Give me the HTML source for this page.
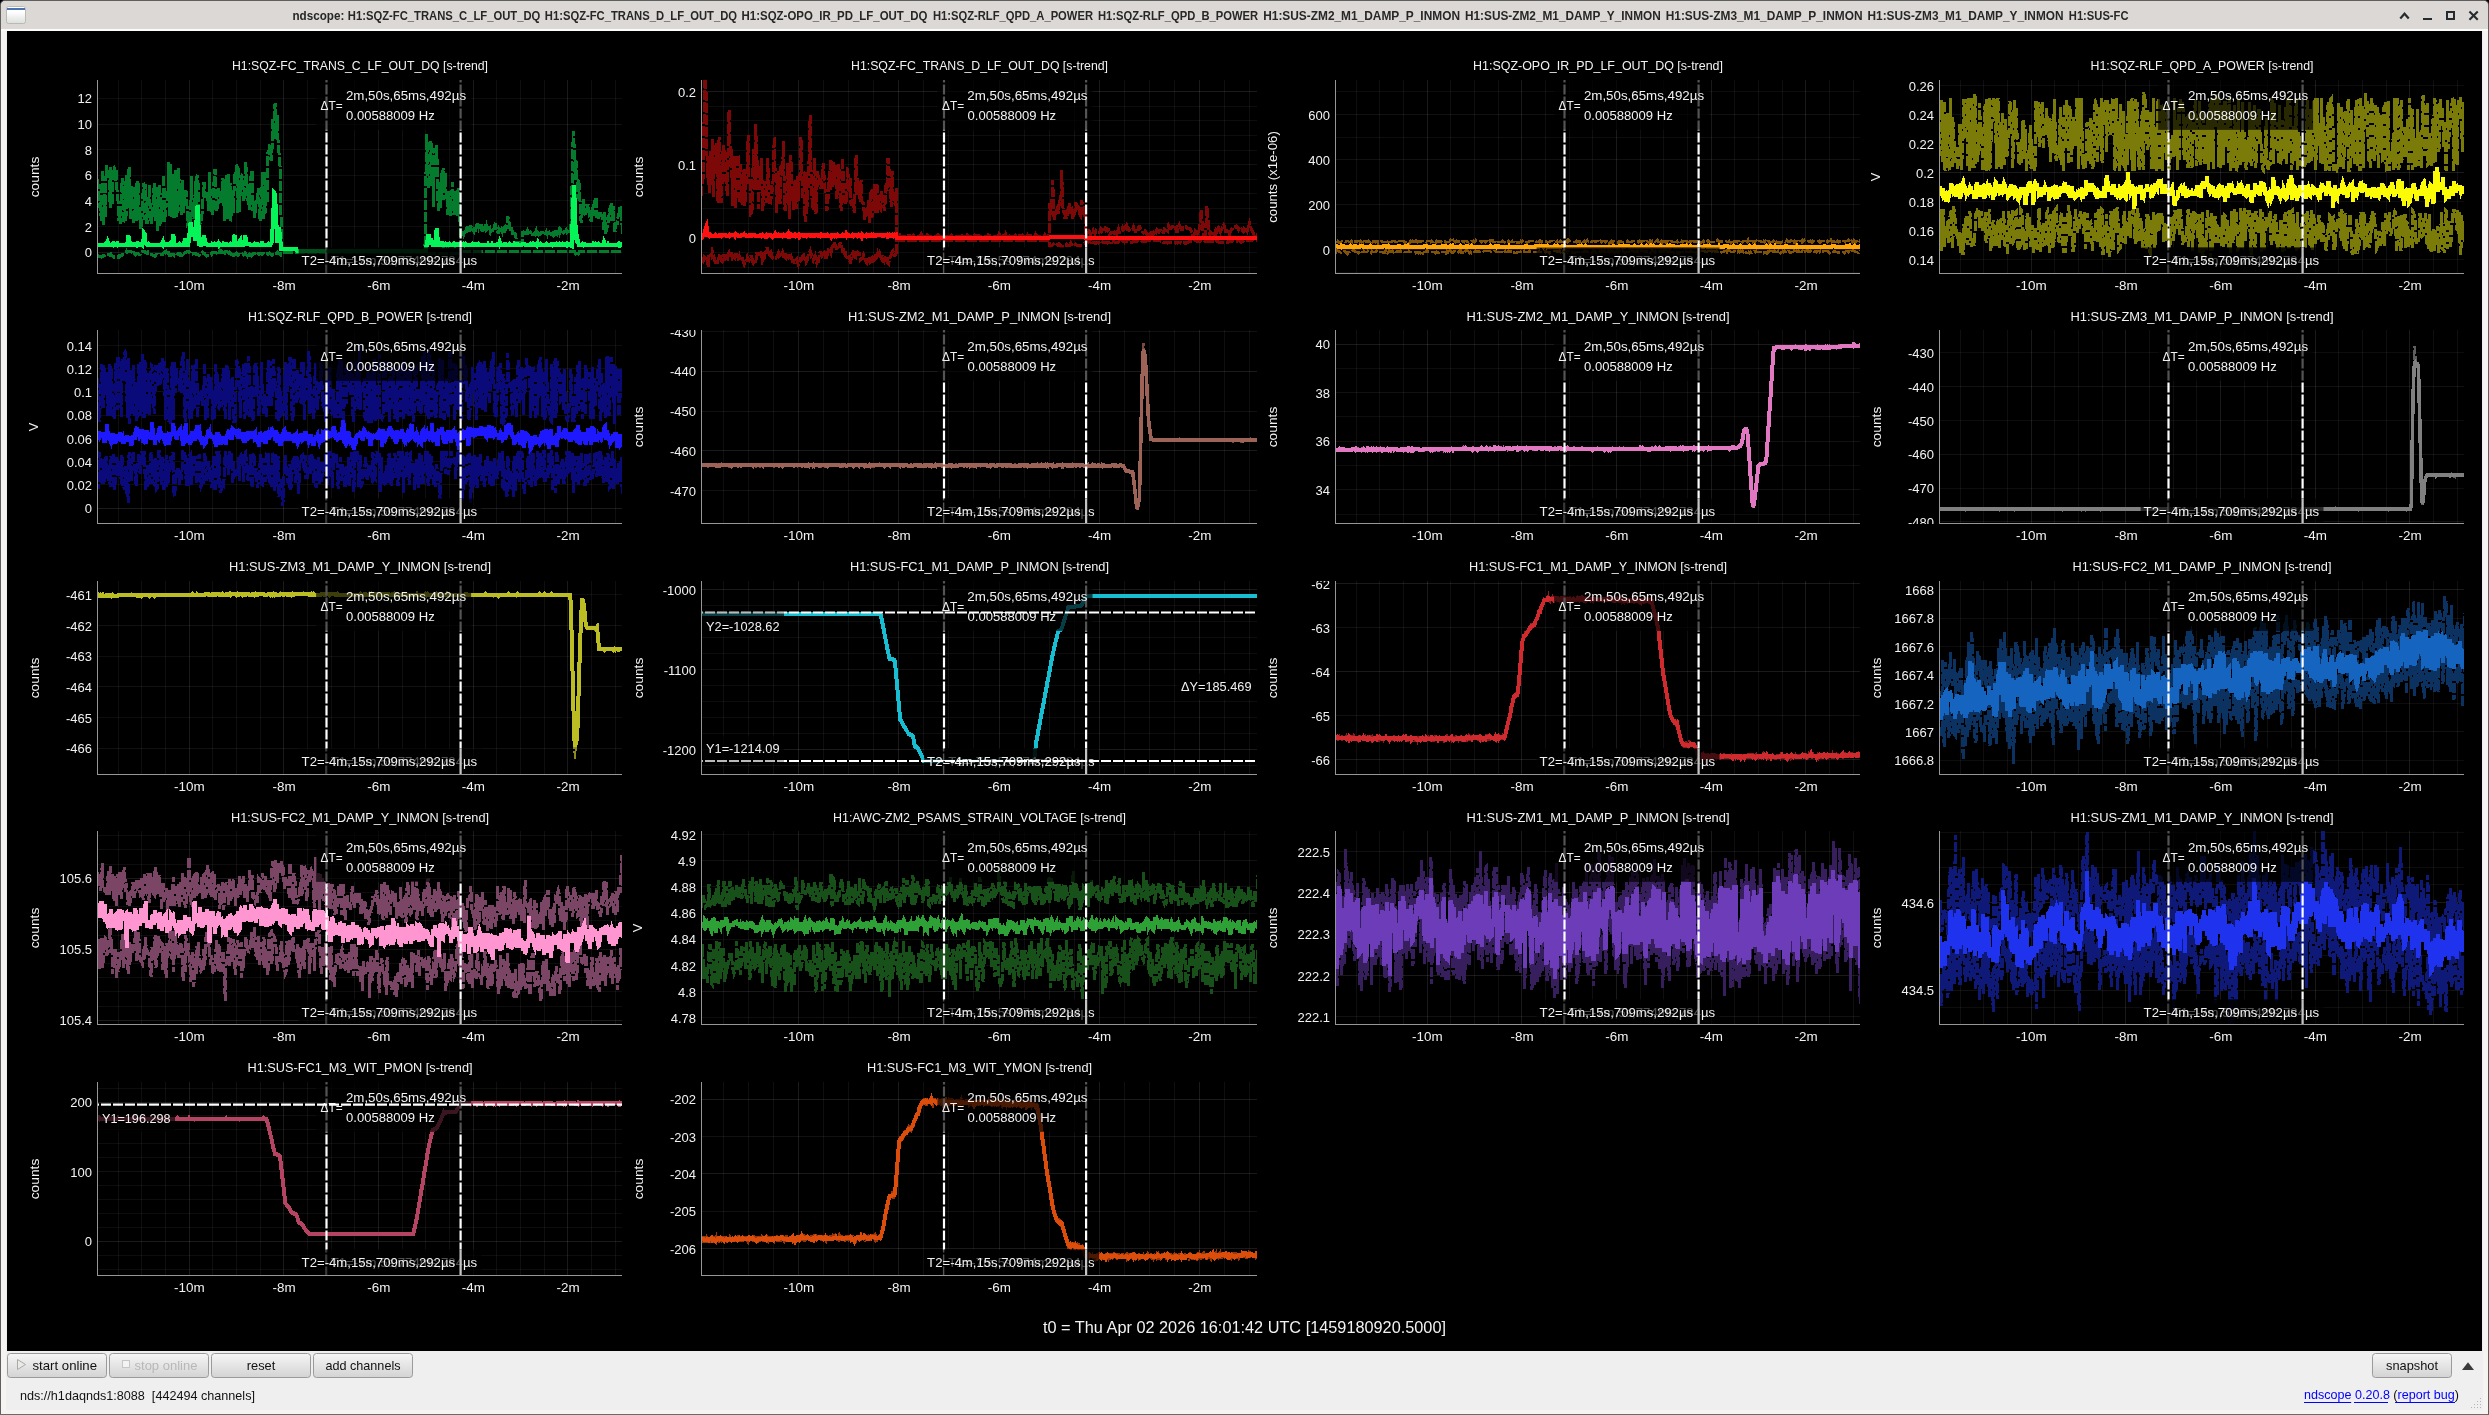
<!DOCTYPE html>
<html><head><meta charset="utf-8"><title>ndscope</title>
<style>html,body{margin:0;padding:0;background:#000;}body{width:2489px;height:1415px;overflow:hidden;font-family:"Liberation Sans", sans-serif;}svg{display:block;will-change:transform;}</style>
</head><body>
<svg width="2489" height="1415" viewBox="0 0 2489 1415" font-family='"Liberation Sans", sans-serif'>
<defs>
<linearGradient id="btn" x1="0" y1="0" x2="0" y2="1"><stop offset="0" stop-color="#f6f6f6"/><stop offset="1" stop-color="#d3d3d3"/></linearGradient>
<linearGradient id="ico" x1="0" y1="0" x2="0" y2="1"><stop offset="0.3" stop-color="#ffffff"/><stop offset="1" stop-color="#dcdfdb"/></linearGradient>
<clipPath id="c00"><rect x="98" y="80" width="524" height="193"/></clipPath>
<clipPath id="ya00"><rect x="7" y="80" width="90" height="194"/></clipPath>
<clipPath id="c10"><rect x="702" y="80" width="555" height="193"/></clipPath>
<clipPath id="ya10"><rect x="611" y="80" width="90" height="194"/></clipPath>
<clipPath id="c20"><rect x="1336" y="80" width="524" height="193"/></clipPath>
<clipPath id="ya20"><rect x="1245" y="80" width="90" height="194"/></clipPath>
<clipPath id="c30"><rect x="1940" y="80" width="524" height="193"/></clipPath>
<clipPath id="ya30"><rect x="1849" y="80" width="90" height="194"/></clipPath>
<clipPath id="c01"><rect x="98" y="330" width="524" height="193"/></clipPath>
<clipPath id="ya01"><rect x="7" y="330" width="90" height="194"/></clipPath>
<clipPath id="c11"><rect x="702" y="330" width="555" height="193"/></clipPath>
<clipPath id="ya11"><rect x="611" y="330" width="90" height="194"/></clipPath>
<clipPath id="c21"><rect x="1336" y="330" width="524" height="193"/></clipPath>
<clipPath id="ya21"><rect x="1245" y="330" width="90" height="194"/></clipPath>
<clipPath id="c31"><rect x="1940" y="330" width="524" height="193"/></clipPath>
<clipPath id="ya31"><rect x="1849" y="330" width="90" height="194"/></clipPath>
<clipPath id="c02"><rect x="98" y="581" width="524" height="193"/></clipPath>
<clipPath id="ya02"><rect x="7" y="581" width="90" height="194"/></clipPath>
<clipPath id="c12"><rect x="702" y="581" width="555" height="193"/></clipPath>
<clipPath id="ya12"><rect x="611" y="581" width="90" height="194"/></clipPath>
<clipPath id="c22"><rect x="1336" y="581" width="524" height="193"/></clipPath>
<clipPath id="ya22"><rect x="1245" y="581" width="90" height="194"/></clipPath>
<clipPath id="c32"><rect x="1940" y="581" width="524" height="193"/></clipPath>
<clipPath id="ya32"><rect x="1849" y="581" width="90" height="194"/></clipPath>
<clipPath id="c03"><rect x="98" y="831" width="524" height="193"/></clipPath>
<clipPath id="ya03"><rect x="7" y="831" width="90" height="194"/></clipPath>
<clipPath id="c13"><rect x="702" y="831" width="555" height="193"/></clipPath>
<clipPath id="ya13"><rect x="611" y="831" width="90" height="194"/></clipPath>
<clipPath id="c23"><rect x="1336" y="831" width="524" height="193"/></clipPath>
<clipPath id="ya23"><rect x="1245" y="831" width="90" height="194"/></clipPath>
<clipPath id="c33"><rect x="1940" y="831" width="524" height="193"/></clipPath>
<clipPath id="ya33"><rect x="1849" y="831" width="90" height="194"/></clipPath>
<clipPath id="c04"><rect x="98" y="1082" width="524" height="193"/></clipPath>
<clipPath id="ya04"><rect x="7" y="1082" width="90" height="194"/></clipPath>
<clipPath id="c14"><rect x="702" y="1082" width="555" height="193"/></clipPath>
<clipPath id="ya14"><rect x="611" y="1082" width="90" height="194"/></clipPath>
</defs>
<rect x="0" y="0" width="2489" height="1415" fill="#000"/>
<rect x="0" y="0" width="2489" height="1421" rx="5" ry="5" fill="#5f5f5d"/>
<rect x="1" y="1" width="2487" height="1421" rx="4.5" ry="4.5" fill="#f5f4f3"/>
<rect x="0" y="1414" width="2489" height="1" fill="#6a6a68"/>
<path d="M1 29 V6 Q1 1 6 1 H2483 Q2488 1 2488 6 V29 Z" fill="#dbd8d5"/>
<rect x="1" y="29" width="2487" height="2" fill="#fbfbfa"/>
<rect x="6" y="31" width="2477" height="1379" fill="#efefef"/>
<rect x="7" y="31" width="2475" height="1320" fill="#000"/>
<rect x="6.5" y="6.5" width="19" height="17" rx="2" fill="url(#ico)" stroke="#b9b9b7"/>
<rect x="7" y="8" width="18" height="2" fill="#4a74b0"/>
<text x="292.5" y="20.3" font-size="12" font-weight="bold" fill="#272727" textLength="51.8" lengthAdjust="spacingAndGlyphs">ndscope:</text>
<text x="347.8" y="20.3" font-size="12" font-weight="bold" fill="#272727" textLength="192.5" lengthAdjust="spacingAndGlyphs">H1:SQZ-FC_TRANS_C_LF_OUT_DQ</text>
<text x="544.8" y="20.3" font-size="12" font-weight="bold" fill="#272727" textLength="192.3" lengthAdjust="spacingAndGlyphs">H1:SQZ-FC_TRANS_D_LF_OUT_DQ</text>
<text x="741.6" y="20.3" font-size="12" font-weight="bold" fill="#272727" textLength="185.8" lengthAdjust="spacingAndGlyphs">H1:SQZ-OPO_IR_PD_LF_OUT_DQ</text>
<text x="932.9" y="20.3" font-size="12" font-weight="bold" fill="#272727" textLength="160.1" lengthAdjust="spacingAndGlyphs">H1:SQZ-RLF_QPD_A_POWER</text>
<text x="1098" y="20.3" font-size="12" font-weight="bold" fill="#272727" textLength="160.2" lengthAdjust="spacingAndGlyphs">H1:SQZ-RLF_QPD_B_POWER</text>
<text x="1263.2" y="20.3" font-size="12" font-weight="bold" fill="#272727" textLength="196.8" lengthAdjust="spacingAndGlyphs">H1:SUS-ZM2_M1_DAMP_P_INMON</text>
<text x="1465" y="20.3" font-size="12" font-weight="bold" fill="#272727" textLength="195.7" lengthAdjust="spacingAndGlyphs">H1:SUS-ZM2_M1_DAMP_Y_INMON</text>
<text x="1665.7" y="20.3" font-size="12" font-weight="bold" fill="#272727" textLength="196.8" lengthAdjust="spacingAndGlyphs">H1:SUS-ZM3_M1_DAMP_P_INMON</text>
<text x="1867.5" y="20.3" font-size="12" font-weight="bold" fill="#272727" textLength="196" lengthAdjust="spacingAndGlyphs">H1:SUS-ZM3_M1_DAMP_Y_INMON</text>
<text x="2068.8" y="20.3" font-size="12" font-weight="bold" fill="#272727" textLength="59.7" lengthAdjust="spacingAndGlyphs">H1:SUS-FC</text>
<path d="M2401 17.7 L2404.5 13.7 L2408 17.7" fill="none" stroke="#262b2f" stroke-width="2.2" stroke-linecap="square"/>
<rect x="2423" y="18" width="9" height="2" fill="#262b2f"/>
<rect x="2447" y="12" width="7" height="7" fill="none" stroke="#262b2f" stroke-width="2"/>
<path d="M2470.2 12.2 L2477 19 M2477 12.2 L2470.2 19" fill="none" stroke="#262b2f" stroke-width="2.1" stroke-linecap="square"/>
<g clip-path="url(#c00)">
<rect x="118" y="80" width="1" height="193" fill="#fff" fill-opacity="0.060000000000000005"/>
<rect x="141" y="80" width="1" height="193" fill="#fff" fill-opacity="0.060000000000000005"/>
<rect x="165" y="80" width="1" height="193" fill="#fff" fill-opacity="0.060000000000000005"/>
<rect x="189" y="80" width="1" height="193" fill="#fff" fill-opacity="0.1"/>
<rect x="212" y="80" width="1" height="193" fill="#fff" fill-opacity="0.060000000000000005"/>
<rect x="236" y="80" width="1" height="193" fill="#fff" fill-opacity="0.060000000000000005"/>
<rect x="260" y="80" width="1" height="193" fill="#fff" fill-opacity="0.060000000000000005"/>
<rect x="283" y="80" width="1" height="193" fill="#fff" fill-opacity="0.1"/>
<rect x="307" y="80" width="1" height="193" fill="#fff" fill-opacity="0.060000000000000005"/>
<rect x="331" y="80" width="1" height="193" fill="#fff" fill-opacity="0.060000000000000005"/>
<rect x="354" y="80" width="1" height="193" fill="#fff" fill-opacity="0.060000000000000005"/>
<rect x="378" y="80" width="1" height="193" fill="#fff" fill-opacity="0.1"/>
<rect x="402" y="80" width="1" height="193" fill="#fff" fill-opacity="0.060000000000000005"/>
<rect x="425" y="80" width="1" height="193" fill="#fff" fill-opacity="0.060000000000000005"/>
<rect x="449" y="80" width="1" height="193" fill="#fff" fill-opacity="0.060000000000000005"/>
<rect x="473" y="80" width="1" height="193" fill="#fff" fill-opacity="0.1"/>
<rect x="496" y="80" width="1" height="193" fill="#fff" fill-opacity="0.060000000000000005"/>
<rect x="520" y="80" width="1" height="193" fill="#fff" fill-opacity="0.060000000000000005"/>
<rect x="544" y="80" width="1" height="193" fill="#fff" fill-opacity="0.060000000000000005"/>
<rect x="567" y="80" width="1" height="193" fill="#fff" fill-opacity="0.1"/>
<rect x="591" y="80" width="1" height="193" fill="#fff" fill-opacity="0.060000000000000005"/>
<rect x="615" y="80" width="1" height="193" fill="#fff" fill-opacity="0.060000000000000005"/>
<rect x="98" y="252" width="524" height="1" fill="#fff" fill-opacity="0.1"/>
<rect x="98" y="124" width="524" height="1" fill="#fff" fill-opacity="0.065"/>
<rect x="98" y="226" width="524" height="1" fill="#fff" fill-opacity="0.05"/>
<rect x="98" y="200" width="524" height="1" fill="#fff" fill-opacity="0.05"/>
<rect x="98" y="175" width="524" height="1" fill="#fff" fill-opacity="0.05"/>
<rect x="98" y="149" width="524" height="1" fill="#fff" fill-opacity="0.05"/>
<rect x="98" y="98" width="524" height="1" fill="#fff" fill-opacity="0.05"/>
<g shape-rendering="crispEdges" fill="none" stroke-linejoin="miter">
<path transform="translate(97.5 0) scale(0.78900 1)" vector-effect="non-scaling-stroke" d="M0 255l1 1h3l1 1 1-1h1l1-1h2l1-1h3l1 1h1l1-1 1 1 1 1h1l1 1h5l1-1 1 1 1-1 1-1h1l1-1h3l1-1 1-2 1 1 1-1h3l1 1h1l1 2 1-1 1 1 1 1 1-1 1-1h1l1 1h2l1-1h1l1-2h2l1 1h2l1 1 1-1 1 1h1l1 1h2l1 1h2l1 1 1-1 1-1h1l1 1h1l1-1h4l1-1 1-1 1 1 1-1 1 2h1l1-1 1 2h2l1-1h2l1 1 1 1h2l1-1 1-2h1l1 2 1-1 1 1h1l1-2 1 1 1-1 1-1h2l1-1h1l1 1h1l1 1 1 1h1l1-1h3l1 1h2l1 1h1l1-1 1-1h1l1-1 1 1h1l1 1 1 1 1 1 1-1h5l1-2 1-1h4l1 1 1 1 1 1 1-2 1-2 1 1 1-1 1 1h2l1 1 1-2h2l1 1 1 1 1-1 1 1 1 1h1l1-1 1 2h1l1-1h1l1-1 1 1 1 1h1l1-1h1l1 1h1l1-1 1 1 1-1 1-1 1 1 1 1 1 1 1-2 1 1 1-1 1 1 1 1 1-1 1-1 1-1h2l1-1 1 1h1l1 1h1l1-1h1l1 1h1l1-1h1l1 1 1-1h2l1 1h1l1-1 1 1h1l1 1h1l1-1h1l1-1h2l1-1 1 1h1l1 1 1 1 1-3h182l1 1h43l1-2h144l1 1 1 2 1 2h1l1-1 1-2 1-2h55" stroke="#057b2d" stroke-width="3" stroke-dasharray="10 2"/>
<path transform="translate(97.5 0) scale(0.78900 1)" vector-effect="non-scaling-stroke" d="M0 179l1 8 1 18 1-1 1 7 1 10 1-51 1 15 1 40 1-31 1 23 1-52 1 8 1 5 1-8 1 3 1 35 1-41 1 7 1 31 1-36 1-1 1 5 1 8 1-11 1 27 1 4 1 20 1-5 1 8 1-19 1-21 1-6 1 45 1-4 1-38 1 41 1-47 1 14 1 19 1-41 1 33 1 19 1-33 1 17 1-17 1 37 1-6 1-13 1-21 1 38 1-40 1 5 1 31 1-1 1 13 1-16 1 3 1-33 1 2 1 35 1-36 1 38h1l1-21h1l1-16 1 32 1 7 1-10 1 2 1-21 1-12 1 38 1-16 1-19 1 45 1-43 1 38 1-42 1 40 1-23 1 14 1 7 1-47 1 47 1-9 1-8h1l1 2 1-45 1 54 1-11 1-41 1 53 1-43 1 35 1 9 1-7 1-41 1 47 1-4 1-9 1-36 1 37 1-18 1 28 1-11 1-24 1 33 1-10 1-13 1 7 1-6 1 33 1-1 1-3 1 4 1-4 1-44 1 41 1-10 1 12 1-4 1-34 1 41 1-45 1-2 1 21 1 28 1-1 1-1 1-2 1-13 1-11 1-14 1 13 1-1h1l1 7 1-10 1 20 1-39 1 28 1 12 1-7 1 10 1-8 1-37h1l1 22 1 19 1-3 1-6 1-14 1 2 1 5 1 8 1-9 1-16 1 19 1 24 1-42 1 34 1-38 1 44 1-45 1 41 1-32 1 39 1-29 1-3 1 23 1-21 1-18 1 8 1-18 1 3 1 46 1-46 1 45 1-24 1-6 1-6 1 1 1 24 1-3 1-11 1-25 1 23 1 2 1 18 1-21 1 26 1-32 1-3 1-5 1 41 1-10 1 17 1-6 1-9 1 1 1-8 1-8 1 20 1 13 1-20 1-2 1-27 1 47 1-3 1-44 1 41 1-20 1 10 1-50h1l1-8 1-1 1 17 1-6 1-36 1 20 1-5 1-31 1 9 1 27 1-24 1 31 1 7 1 9 1 13 1 73h19l1 2h162l1-56 1-60 1 13 1 41 1-2 1-3 1-42 1 2 1 43 1-19 1 40 1-59 1 15 1-2 1-16 1 45 1 21 1-3 1-26 1 26 1-35 1 19 1-24 1 32 1-18 1-9 1 26 1-2 1 18 1-13 1-11 1 2 1 23 1-10 1-24 1 17 1 16 1-16 1-8 1 12 1 13 1-28 1 5 1 17 1 27 1-2 1-1 1-1 1 2 1-3h1l1-2 1 3 1-6h1l1 1 1 4 1-7 1 4h2l1 2 1-4 1 5 1-6 1-2h1l1 3 1-3 1 4 1-4 1 5 1-1 1 2 1-1 1-2 1 2 1-3 1 3 1-1 1 1 1-1 1 4 1-2h2l1-2 1-2 1 4 1-3 1 3 1 1 1 3 1-4 1 2 1 1 1-3 1 2 1-3 1-1 1 5 1-4 1-1 1-6 1-6 1 3 1 6 1 5 1 2 1-5 1 8 1-2h2l1 2 1 7h7l1-11 1 2 1-2h1l1 2h1l1-2 1 2 1-1h2l1-1 1 3h2l1-1 1 1 1-3 1 3 1-1 1 2 1-1h1l1-1 1-1h3l1-1 1 4 1-3 1 2 1-3 1 1 1 1h1l1 1h1l1 1 1-3 1-2 1 4 1-1 1 1 1-4 1 2 1-2 1 3 1-2 1 3h1l1-1 1-1 1-1h1l1-1 1 2 1-1h1l1-2 1 1 1-1 1-29 1-34 1-35 1 14 1 35 1-20 1 2 1 23 1 14 1-19 1 10 1 20 1 13 1-7 1-7 1-10 1 16 1-2 1 2 1-11 1 3 1-3 1 6 1 9h1l1 3 1-15 1 9 1-11 1-1 1-7 1 2 1 17h1l1 4 1-7h1l1 5 1-1 1-3 1 12 1 4 1-18 1 22 1-5 1-2 1-3 1-6 1-10 1 7 1-12 1 18 1-9 1-6 1 23 1 3 1-9h2l1-8 1-1 1-7 1 9 1-10 1 25 1-1" stroke="#057b2d" stroke-width="3" stroke-dasharray="10 2"/>
<path transform="translate(97.5 0) scale(0.78900 1)" vector-effect="non-scaling-stroke" d="M0 244l1 1h8l1-1 1 1h1l1-3 1 2 1 1h3l1-1 1 1 1-1 1 1h1l1-1 1 1 1-1 1 1h10l1-3 1-7 1 3 1 7h1l1-1 1 1h2l1-1h1l1 1 1-1 1 1 1-1 1 1h2l1-1 1 1 1-3 1-9 1 1 1 9 1 1 1 1h1l1-1 1 1h14l1-1h1l1-2 1 3 1-1 1 1h1l1-1h1l1 1h1l1-1 1 1h1l1-4 1-7 1 6 1 5h5l1-1 1 1h4l1-3 1-4 1 5 1 2h2l1-6 1-10 1-7 1 10 1 5 1-7 1-3 1 7 1 7 1-12 1-19 1-5 1 20 1 19h1l1 1h1l1-1 1-5 1-4 1 5 1 4h1l1 1h5l1-1 1 1h1l1-1 1 1h2l1-1 1-1 1 2 1-1 1 1h2l1-1 1 1h1l1-1h2l1 1h3l1-1 1 1h2l1-8 1-2 1 8 1 2h3l1-4 1-1 1 5h3l1-2 1-8 1 3 1 6h4l1 1h4l1-1 1 1h1l1-1h1l1 1h3l1-2h1l1 2h6l1-1 1 1h1l1-1 1-2 1-16 1-17 1-16 1 1 1 16 1 17 1 16 1-8 1-8 1 7 1 8 1 7h19l1 2h163l1-6 1-3 1-6h1l1 6 1-1 1-3 1 6 1 1h2l1-1 1-10 1-6 1 10 1 7h3l1-2h1l1 2 1-1 1 1 1-1 1 1 1-1h1l1 1 1-1 1 1h3l1-1 1 1 1-1 1 1 1-1h1l1 1h2l1-1 1 1h2l1-1 1 1 1-1 1 1h7l1-1 1 1h1l1-1h1l1 1h2l1-1 1 1h10l1-1 1 1h3l1-1 1 1h5l1-1h1l1 1 1-3 1 2 1 1h3l1-1h1l1 1h3l1-1 1 1h4l1-1 1 1h1l1-1h1l1 1h5l1-1h2l1 1h6l1-1 1 1h1l1-1 1 1h1l1-1h1l1 1 1-2 1 2h2l1-1 1 1h5l1-1 1 1h4l1-1h1l1 1 1-1h1l1 1h1l1-1 1 1h2l1-1 1 1h1l1-1 1 1h1l1-1h1l1 1 1-1 1 1 1-1h1l1 1 1-1 1 1 1-20 1-21 1-19 1 22 1 21 1 11 1-1 1 4 1 3h4l1-1 1 1 1-1h1l1 1h8l1-1 1 1h1l1-1 1 1h2l1-1 1 1h5l1-3 1 2 1 1h2l1-1 1 1h11l1-1 1 1 1-1 1 1 1-1h2" stroke="#05f558" stroke-width="4"/>
</g>
<line x1="326.5" y1="80" x2="326.5" y2="273" stroke="#fff" stroke-width="2.2" stroke-dasharray="10 2" stroke-dashoffset="7.4"/>
<line x1="460.6" y1="80" x2="460.6" y2="273" stroke="#fff" stroke-width="2.2" stroke-dasharray="10 2" stroke-dashoffset="7.4"/>
<rect x="326.5" y="247.5" width="155" height="26" fill="rgba(0,0,0,0.67)"/>
<text x="330.7" y="265.3" font-size="13" fill="#f2f2f2" text-anchor="start" textLength="146.5" lengthAdjust="spacingAndGlyphs">T1=-7m,5s,774ms,784µs</text>
<rect x="298.6" y="247.5" width="164.5" height="26" fill="rgba(0,0,0,0.67)"/>
<text x="301.6" y="265.3" font-size="13" fill="#f2f2f2" text-anchor="start" textLength="153.5" lengthAdjust="spacingAndGlyphs">T2=-4m,15s,709ms,292µs</text>
<rect x="459.5" y="247.5" width="2.2" height="26" fill="#c4c4c4"/>
<rect x="316.1" y="80" width="155" height="49.9" fill="rgba(0,0,0,0.67)"/>
<text x="320.6" y="109.7" font-size="13" fill="#f2f2f2" text-anchor="start" textLength="22.1" lengthAdjust="spacingAndGlyphs">ΔT=</text>
<text x="345.9" y="99.7" font-size="13" fill="#f2f2f2" text-anchor="start" textLength="120.2" lengthAdjust="spacingAndGlyphs">2m,50s,65ms,492µs</text>
<text x="346.1" y="119.8" font-size="13" fill="#f2f2f2" text-anchor="start" textLength="88.6" lengthAdjust="spacingAndGlyphs">0.00588009 Hz</text>
</g>
<rect x="97" y="80" width="1" height="194" fill="#969696"/>
<rect x="97" y="273" width="525" height="1" fill="#969696"/>
<text x="189.4" y="289.5" font-size="13" fill="#f2f2f2" text-anchor="middle" textLength="30.6" lengthAdjust="spacingAndGlyphs">-10m</text>
<text x="284.1" y="289.5" font-size="13" fill="#f2f2f2" text-anchor="middle" textLength="23.1" lengthAdjust="spacingAndGlyphs">-8m</text>
<text x="378.8" y="289.5" font-size="13" fill="#f2f2f2" text-anchor="middle" textLength="23.1" lengthAdjust="spacingAndGlyphs">-6m</text>
<text x="473.4" y="289.5" font-size="13" fill="#f2f2f2" text-anchor="middle" textLength="23.1" lengthAdjust="spacingAndGlyphs">-4m</text>
<text x="568.1" y="289.5" font-size="13" fill="#f2f2f2" text-anchor="middle" textLength="23.1" lengthAdjust="spacingAndGlyphs">-2m</text>
<g clip-path="url(#ya00)">
<text x="92" y="257.4" font-size="13" fill="#f2f2f2" text-anchor="end">0</text>
<text x="92" y="231.7" font-size="13" fill="#f2f2f2" text-anchor="end">2</text>
<text x="92" y="206.1" font-size="13" fill="#f2f2f2" text-anchor="end">4</text>
<text x="92" y="180.4" font-size="13" fill="#f2f2f2" text-anchor="end">6</text>
<text x="92" y="154.8" font-size="13" fill="#f2f2f2" text-anchor="end">8</text>
<text x="92" y="129.1" font-size="13" fill="#f2f2f2" text-anchor="end">10</text>
<text x="92" y="103.4" font-size="13" fill="#f2f2f2" text-anchor="end">12</text>
<text x="92" y="77.8" font-size="13" fill="#f2f2f2" text-anchor="end">14</text>
</g>
<text x="360" y="69.8" font-size="12" fill="#f2f2f2" text-anchor="middle" textLength="256" lengthAdjust="spacingAndGlyphs">H1:SQZ-FC_TRANS_C_LF_OUT_DQ [s-trend]</text>
<text transform="translate(39.4 177) rotate(-90)" font-size="13" fill="#f2f2f2" text-anchor="middle" textLength="40.6" lengthAdjust="spacingAndGlyphs">counts</text>
<g clip-path="url(#c10)">
<rect x="723" y="80" width="1" height="193" fill="#fff" fill-opacity="0.060000000000000005"/>
<rect x="748" y="80" width="1" height="193" fill="#fff" fill-opacity="0.060000000000000005"/>
<rect x="773" y="80" width="1" height="193" fill="#fff" fill-opacity="0.060000000000000005"/>
<rect x="798" y="80" width="1" height="193" fill="#fff" fill-opacity="0.1"/>
<rect x="823" y="80" width="1" height="193" fill="#fff" fill-opacity="0.060000000000000005"/>
<rect x="848" y="80" width="1" height="193" fill="#fff" fill-opacity="0.060000000000000005"/>
<rect x="873" y="80" width="1" height="193" fill="#fff" fill-opacity="0.060000000000000005"/>
<rect x="898" y="80" width="1" height="193" fill="#fff" fill-opacity="0.1"/>
<rect x="923" y="80" width="1" height="193" fill="#fff" fill-opacity="0.060000000000000005"/>
<rect x="948" y="80" width="1" height="193" fill="#fff" fill-opacity="0.060000000000000005"/>
<rect x="973" y="80" width="1" height="193" fill="#fff" fill-opacity="0.060000000000000005"/>
<rect x="999" y="80" width="1" height="193" fill="#fff" fill-opacity="0.1"/>
<rect x="1024" y="80" width="1" height="193" fill="#fff" fill-opacity="0.060000000000000005"/>
<rect x="1049" y="80" width="1" height="193" fill="#fff" fill-opacity="0.060000000000000005"/>
<rect x="1074" y="80" width="1" height="193" fill="#fff" fill-opacity="0.060000000000000005"/>
<rect x="1099" y="80" width="1" height="193" fill="#fff" fill-opacity="0.1"/>
<rect x="1124" y="80" width="1" height="193" fill="#fff" fill-opacity="0.060000000000000005"/>
<rect x="1149" y="80" width="1" height="193" fill="#fff" fill-opacity="0.060000000000000005"/>
<rect x="1174" y="80" width="1" height="193" fill="#fff" fill-opacity="0.060000000000000005"/>
<rect x="1199" y="80" width="1" height="193" fill="#fff" fill-opacity="0.1"/>
<rect x="1224" y="80" width="1" height="193" fill="#fff" fill-opacity="0.060000000000000005"/>
<rect x="1249" y="80" width="1" height="193" fill="#fff" fill-opacity="0.060000000000000005"/>
<rect x="702" y="237" width="555" height="1" fill="#fff" fill-opacity="0.1"/>
<rect x="702" y="91" width="555" height="1" fill="#fff" fill-opacity="0.1"/>
<rect x="702" y="164" width="555" height="1" fill="#fff" fill-opacity="0.065"/>
<rect x="702" y="267" width="555" height="1" fill="#fff" fill-opacity="0.05"/>
<rect x="702" y="252" width="555" height="1" fill="#fff" fill-opacity="0.05"/>
<rect x="702" y="223" width="555" height="1" fill="#fff" fill-opacity="0.05"/>
<rect x="702" y="208" width="555" height="1" fill="#fff" fill-opacity="0.05"/>
<rect x="702" y="193" width="555" height="1" fill="#fff" fill-opacity="0.05"/>
<rect x="702" y="179" width="555" height="1" fill="#fff" fill-opacity="0.05"/>
<rect x="702" y="150" width="555" height="1" fill="#fff" fill-opacity="0.05"/>
<rect x="702" y="135" width="555" height="1" fill="#fff" fill-opacity="0.05"/>
<rect x="702" y="120" width="555" height="1" fill="#fff" fill-opacity="0.05"/>
<rect x="702" y="106" width="555" height="1" fill="#fff" fill-opacity="0.05"/>
<g shape-rendering="crispEdges" fill="none" stroke-linejoin="miter">
<path transform="translate(701.5 0) scale(0.83559 1)" vector-effect="non-scaling-stroke" d="M0 261l1-1 1 1 1-4 1 1 1-2h1l1 1 1 10 1-13h2l1 2 1-5 1 2 1 4 1 4 1 2 1 2 1-3 1-3 1-2 1-3 1 2 1 5 1 1 1-2 1-6 1 7 1-1 1-1h1l1-6 1-1 1 3h1l1-3 1 5 1-2 1 2 1 1 1-4h1l1 1 1 3 1-2 1 4 1-3 1-1 1 3 1 2 1 3 1-3 1 1 1-1 1-4 1 2 1 1 1-3 1-1h1l1 5 1 2 1-2h1l1 2 1-11 1 3 1-2h1l1 1 1-3 1 4 1 6 1-2 1-1 1-6h1l1-4h1l1 5 1 1 1-4 1 1 1 6 1 1 1-1h1l1 1h1l1-1 1-2 1-2 1 3 1-1 1 1 1-2 1-2 1 2 1 5 1-5h1l1 4 1-1 1 1 1-2 1 1 1-1 1 3 1 4 1-4 1 5 1-3 1-1 1-1 1 4 1 2 1-2 1-2 1-4 1 4 1-5 1-1 1 3 1 2 1 3 1-1 1-3 1-6h1l1-2 1 5 1-1 1 1 1 4 1-2 1-2 1 4 1 3 1-2h1l1-6 1-3h1l1 4 1-1 1-4 1 1 1 4 1 3 1-8 1 2 1-3 1 1h1l1 2 1-5 1-4 1 4 1-6 1 3 1 1 1 4 1-5h1l1 3 1-6 1 3 1 2 1 6 1-5 1 5 1 2 1-1 1 3h1l1 1 1-3 1 9 1-4 1-5 1-2 1 3 1 1 1-3 1 2 1-3 1-1 1 1h1l1 7 1-1 1-1h1l1-3 1 2 1 1 1 4 1 1 1-2 1-1 1-3 1 4 1-2 1-1 1 5 1-4h1l1-5 1 4 1-1 1-4 1 2 1-2 1 3 1 2 1-3 1 5 1-1 1 2 1-2 1-3 1 3 1 4 1 1 1-5 1-2 1-2 1-3 1-1 1 3 1 3 1-4 1 3 1-16h182l1 6 1-1h2l1-1 1-1h2l1 1 1 1h1l1-1 1 1 1 1h4l1-1h1l1-1 1 1h3l1-2 1 1h1l1-1h1l1 1h1l1 1h3l1 1 1-1h2l1-1 1-1h1l1-1 1-1h1l1 1 1-1h1l1 1 1-1 1 1h2l1 1h1l1-1h1l1 1 1-1 1-1h2l1 1h5l1 1 1-1h2l1-1 1 1h1l1-1 1 1h5l1-1 1 1h1l1-1h2l1 1 1-2h1l1 1h2l1 1h4l1-1h5l1-1h3l1 1h5l1-1h9l1-1 1 1h4l1 1h2l1 1h5l1 1 1-1h7l1 1 1-1h1l1 1 1-1h2l1 1h1l1-1h1l1 1h2l1-1h2l1-1h5l1-1h2l1 1h4l1-1h3l1 1h11l1-1h2l1 1h1l1 1h11l1-1h2l1-1 1 1 1-1h4l1 1 1-1h1l1 1 1 1h1l1-1h2l1-1h3l1-1 1 1h4l1-1 1 1h4l1 1" stroke="#7c0808" stroke-width="3" stroke-dasharray="10 2"/>
<path transform="translate(701.5 0) scale(0.83559 1)" vector-effect="non-scaling-stroke" d="M0 196l1-17 1-1 1-55 1-51h1l1 51 1 55 1-17 1 24 1 8 1-43 1 29 1-40 1 58 1-38 1 12 1-25 1-3 1 54 1 6 1-66 1 66 1-38 1 38 1-34 1-24 1 24 1-20 1 31 1 5 1 11 1-61 1-25 1 32 1 25 1-18 1 57 1-37 1-13 1 31 1 21 1-38 1-15 1 1 1 47 1-31 1-8 1 37 1 4 1-25 1-11 1 37 1-26 1 4 1-32 1-17 1 49 1-5 1 36h1l1-12 1-54 1 26 1 15 1-66 1 54 1-18 1 49 1-19 1-24 1 18 1-26 1 53 1-8 1-13 1-9 1 2 1 20 1-45 1 14 1 32 1-3 1 1 1-17 1 7 1-18 1-37 1 32 1 5 1 39 1-37 1-5 1 29 1 4 1-37 1-1 1 10 1-35 1 46 1 24 1-10 1-2 1-36 1 12 1 44 1-60 1-4 1 46 1-13 1 22 1-29 1 26 1-27 1 29 1-33 1 25 1-27 1 7 1-44 1 33 1 29 1-27 1 2 1 48 1-4 1-46 1 35 1-38 1-11 1-43 1 54 1 27 1 10 1 4 1-52 1 19 1 37 1-22 1-21 1 4 1 5h1l1 9 1-6 1-15 1-5 1 19 1 9h1l1 20 1-6 1-15 1-19 1 19 1-30 1 20 1 7 1-25 1 23 1-20 1 6 1 28 1-8 1-27 1 9 1 24 1 11 1 3 1-53 1 38 1 5 1 1 1 2 1-18 1-19 1 22 1 3 1-14 1 28 1-3 1-4 1 9 1 5 1-27 1-31 1 40 1-17 1 10 1 3 1 11 1-22 1 21 1 2h1l1 17 1-12 1 2 1 7 1-6 1-11 1 23 1-33h1l1 28 1-10 1-4 1-20 1 29 1-23 1-6 1 29 1-13 1 8 1 1 1-18 1 4 1 7 1 3 1 6 1-11 1-18 1 9 1-32h1l1 24 1 1 1 23 1-36 1 26 1-5 1 8 1 6 1-18 1 49 1-1h1l1-1 1 2 1-1h6l1-1 1 1 1-1h1l1 1h3l1-1 1 1h1l1-1 1 1h4l1-2 1 2h3l1-1 1 2 1-2 1 1h11l1-1 1 1h5l1-1 1 1h4l1 1 1-1h1l1-1 1 1h6l1 1 1-1h2l1 1 1-1 1 1h1l1-1h1l1 1 1-2 1 1h7l1-1 1 1h1l1-1h1l1 1h6l1 1 1-1h2l1-1 1 1h1l1-1h1l1 1h5l1 1 1-1 1-2 1 1 1 2 1-1h1l1-1h1l1 1 1-2 1 2 1-1h1l1 1h7l1-1 1 1 1-1h1l1 1 1-1h1l1 1 1-1 1 1h2l1-2 1 2 1-1 1 2 1-1 1-1h1l1 1h2l1 1 1-1 1-2 1 1 1 1h7l1 1 1-2 1 1h1l1 1 1-2h1l1-32 1 12 1-2 1-33 1 13 1 27 1-5 1-1 1-3 1-5 1 8 1-11 1 1h1l1-34 1 28 1 15 1-3 1 9 1-3 1 3 1-6 1-6 1-4 1 7 1 4 1-7 1 12 1-7 1 2 1-2 1-10 1 4 1-2 1 3 1 3 1 6 1 1 1-17 1 5 1 3 1 9 1-2 1 18 1 2 1 1 1-3 1-2 1 1 1 3 1-1 1 1 1-4 1 2 1 1 1-3 1 1h3l1-1 1-2 1 2 1-2 1-2h2l1 3 1-1 1 2 1-1 1 4 1-1h1l1-1h1l1 1 1-1 1 1 1-1 1 2 1-2 1-3 1 3h3l1-4 1 2 1-1 1-2 1 2 1-3 1 3 1-1 1 2 1-1h3l1-2 1 3 1 1h1l1-3 1 1h1l1-4 1 3 1 2 1 1 1 1 1 1 1-1 1-1 1 1 1 2 1-1 1-1 1 2h1l1-1 1 1h1l1-2 1 1 1-2 1 1 1-2 1 1 1 1 1-2h1l1 2 1-1 1 1h1l1-3 1 1h2l1 1 1-5 1 2h2l1-1 1-1h1l1-1 1 2 1 3 1-2 1 2 1-3 1-2 1 2 1 2h1l1-1 1 1h1l1-1 1-1 1 1h3l1 1 1 2h1l1 4h1l1-1 1-3 1 1 1-2 1 3 1-2 1-3 1-10 1-8 1 10 1 10 1 6 1-1h1l1-15 1-14 1 12 1 14 1 2 1-2 1 1h2l1 1h1l1-3 1 2 1-2 1-2 1 4 1-3 1 2 1-2 1-2 1-1 1-2 1 2 1 4h3l1-1 1 4 1-2 1-3h1l1-1 1-2h1l1 1 1-1 1 1h1l1 3 1-1 1 1 1-1 1 1 1 1 1-2 1 2 1-1 1-1 1 2 1-3 1-2 1-3 1 3 1 3 1 2 1 2 1 1 1 1 1-1h1l1 1 1-2" stroke="#7c0808" stroke-width="3" stroke-dasharray="10 2"/>
<path transform="translate(701.5 0) scale(0.83559 1)" vector-effect="non-scaling-stroke" d="M0 236l1 1 1-2h2l1-7 1-2 1 6 1 3h1l1 1 1-1 1 1h4l1-1 1 1h2l1-1h2l1 1 1-1h4l1 1h2l1-1 1 1 1-1h4l1 1 1-2 1 1h1l1 1h3l1-1h2l1-1 1 1h1l1 1h2l1-1h1l1 1h1l1-1h3l1 1h4l1-1h1l1 1 1-1 1 1h1l1 1h1l1-2 1 1 1-1h3l1 1 1 1 1-1 1-1 1-1 1 2h2l1-1 1 1h1l1-1h1l1 1 1-1 1 1h2l1-1 1 1 1-2 1 2 1-1 1 1 1-1 1 1h1l1-1 1 1 1-1 1 1h1l1-1 1 2 1-1 1-1h2l1 1h1l1-1h1l1 1 1-1h2l1 1h2l1-1h1l1 1h1l1-1h2l1 1h1l1-1 1 1 1-1 1 1h1l1-1h1l1 1h1l1-1 1 1h2l1 1 1-2h2l1 1 1-1h1l1 1 1-1 1 1h4l1-1 1 1h2l1-2 1 2 1-1h1l1 1h3l1-1 1 1 1-1h3l1 1 1-1 1 1h1l1-1 1 2 1-2 1 1h2l1-1 1 1 1-1h1l1 1h1l1-1 1 1h1l1-1 1 1h1l1-1h6l1 1h2l1-1h2l1 1 1-1 1 1 1-1 1 1h2l1-1 1 1 1-1 1 1 1-1 1 3h182l1-1h42l1 1h206" stroke="#ff1010" stroke-width="4"/>
</g>
<line x1="944" y1="80" x2="944" y2="273" stroke="#fff" stroke-width="2.2" stroke-dasharray="10 2" stroke-dashoffset="7.4"/>
<line x1="1086.1" y1="80" x2="1086.1" y2="273" stroke="#fff" stroke-width="2.2" stroke-dasharray="10 2" stroke-dashoffset="7.4"/>
<rect x="944" y="247.5" width="155" height="26" fill="rgba(0,0,0,0.67)"/>
<text x="948.2" y="265.3" font-size="13" fill="#f2f2f2" text-anchor="start" textLength="146.5" lengthAdjust="spacingAndGlyphs">T1=-7m,5s,774ms,784µs</text>
<rect x="924.1" y="247.5" width="164.5" height="26" fill="rgba(0,0,0,0.67)"/>
<text x="927.1" y="265.3" font-size="13" fill="#f2f2f2" text-anchor="start" textLength="153.5" lengthAdjust="spacingAndGlyphs">T2=-4m,15s,709ms,292µs</text>
<rect x="1085" y="247.5" width="2.2" height="26" fill="#c4c4c4"/>
<rect x="937.5" y="80" width="155" height="49.9" fill="rgba(0,0,0,0.67)"/>
<text x="942" y="109.7" font-size="13" fill="#f2f2f2" text-anchor="start" textLength="22.1" lengthAdjust="spacingAndGlyphs">ΔT=</text>
<text x="967.3" y="99.7" font-size="13" fill="#f2f2f2" text-anchor="start" textLength="120.2" lengthAdjust="spacingAndGlyphs">2m,50s,65ms,492µs</text>
<text x="967.5" y="119.8" font-size="13" fill="#f2f2f2" text-anchor="start" textLength="88.6" lengthAdjust="spacingAndGlyphs">0.00588009 Hz</text>
</g>
<rect x="701" y="80" width="1" height="194" fill="#969696"/>
<rect x="701" y="273" width="556" height="1" fill="#969696"/>
<text x="798.8" y="289.5" font-size="13" fill="#f2f2f2" text-anchor="middle" textLength="30.6" lengthAdjust="spacingAndGlyphs">-10m</text>
<text x="899.1" y="289.5" font-size="13" fill="#f2f2f2" text-anchor="middle" textLength="23.1" lengthAdjust="spacingAndGlyphs">-8m</text>
<text x="999.4" y="289.5" font-size="13" fill="#f2f2f2" text-anchor="middle" textLength="23.1" lengthAdjust="spacingAndGlyphs">-6m</text>
<text x="1099.6" y="289.5" font-size="13" fill="#f2f2f2" text-anchor="middle" textLength="23.1" lengthAdjust="spacingAndGlyphs">-4m</text>
<text x="1199.9" y="289.5" font-size="13" fill="#f2f2f2" text-anchor="middle" textLength="23.1" lengthAdjust="spacingAndGlyphs">-2m</text>
<g clip-path="url(#ya10)">
<text x="696" y="242.9" font-size="13" fill="#f2f2f2" text-anchor="end">0</text>
<text x="696" y="169.8" font-size="13" fill="#f2f2f2" text-anchor="end">0.1</text>
<text x="696" y="96.6" font-size="13" fill="#f2f2f2" text-anchor="end">0.2</text>
</g>
<text x="979.5" y="69.8" font-size="12" fill="#f2f2f2" text-anchor="middle" textLength="257" lengthAdjust="spacingAndGlyphs">H1:SQZ-FC_TRANS_D_LF_OUT_DQ [s-trend]</text>
<text transform="translate(643.4 177) rotate(-90)" font-size="13" fill="#f2f2f2" text-anchor="middle" textLength="40.6" lengthAdjust="spacingAndGlyphs">counts</text>
<g clip-path="url(#c20)">
<rect x="1356" y="80" width="1" height="193" fill="#fff" fill-opacity="0.060000000000000005"/>
<rect x="1379" y="80" width="1" height="193" fill="#fff" fill-opacity="0.060000000000000005"/>
<rect x="1403" y="80" width="1" height="193" fill="#fff" fill-opacity="0.060000000000000005"/>
<rect x="1427" y="80" width="1" height="193" fill="#fff" fill-opacity="0.1"/>
<rect x="1450" y="80" width="1" height="193" fill="#fff" fill-opacity="0.060000000000000005"/>
<rect x="1474" y="80" width="1" height="193" fill="#fff" fill-opacity="0.060000000000000005"/>
<rect x="1498" y="80" width="1" height="193" fill="#fff" fill-opacity="0.060000000000000005"/>
<rect x="1521" y="80" width="1" height="193" fill="#fff" fill-opacity="0.1"/>
<rect x="1545" y="80" width="1" height="193" fill="#fff" fill-opacity="0.060000000000000005"/>
<rect x="1569" y="80" width="1" height="193" fill="#fff" fill-opacity="0.060000000000000005"/>
<rect x="1592" y="80" width="1" height="193" fill="#fff" fill-opacity="0.060000000000000005"/>
<rect x="1616" y="80" width="1" height="193" fill="#fff" fill-opacity="0.1"/>
<rect x="1640" y="80" width="1" height="193" fill="#fff" fill-opacity="0.060000000000000005"/>
<rect x="1663" y="80" width="1" height="193" fill="#fff" fill-opacity="0.060000000000000005"/>
<rect x="1687" y="80" width="1" height="193" fill="#fff" fill-opacity="0.060000000000000005"/>
<rect x="1711" y="80" width="1" height="193" fill="#fff" fill-opacity="0.1"/>
<rect x="1734" y="80" width="1" height="193" fill="#fff" fill-opacity="0.060000000000000005"/>
<rect x="1758" y="80" width="1" height="193" fill="#fff" fill-opacity="0.060000000000000005"/>
<rect x="1782" y="80" width="1" height="193" fill="#fff" fill-opacity="0.060000000000000005"/>
<rect x="1805" y="80" width="1" height="193" fill="#fff" fill-opacity="0.1"/>
<rect x="1829" y="80" width="1" height="193" fill="#fff" fill-opacity="0.060000000000000005"/>
<rect x="1853" y="80" width="1" height="193" fill="#fff" fill-opacity="0.060000000000000005"/>
<rect x="1336" y="249" width="524" height="1" fill="#fff" fill-opacity="0.1"/>
<rect x="1336" y="204" width="524" height="1" fill="#fff" fill-opacity="0.065"/>
<rect x="1336" y="159" width="524" height="1" fill="#fff" fill-opacity="0.065"/>
<rect x="1336" y="114" width="524" height="1" fill="#fff" fill-opacity="0.065"/>
<rect x="1336" y="272" width="524" height="1" fill="#fff" fill-opacity="0.05"/>
<rect x="1336" y="227" width="524" height="1" fill="#fff" fill-opacity="0.05"/>
<rect x="1336" y="182" width="524" height="1" fill="#fff" fill-opacity="0.05"/>
<rect x="1336" y="137" width="524" height="1" fill="#fff" fill-opacity="0.05"/>
<rect x="1336" y="91" width="524" height="1" fill="#fff" fill-opacity="0.05"/>
<g shape-rendering="crispEdges" fill="none" stroke-linejoin="miter">
<path transform="translate(1335.5 0) scale(0.78900 1)" vector-effect="non-scaling-stroke" d="M0 251l1 1 1-2 1 1h1l1 1h1l1 1h2l1-1 1-1h1l1 1 1 1 1 1 1-2h2l1-1h2l1-1h1l1 1 1 1h3l1 1 1-1h1l1-1 1 1h2l1-1 1 1h3l1-1 1 1h2l1 1 1-2 1 1h4l1-1 1 1h7l1 1h1l1-1 1-2 1 1 1 2 1-1 1-2 1 1 1 1h1l1-1 1 1 1-1 1 1h2l1-1h1l1 1h1l1-1 1 1 1-1h2l1 1h5l1-1 1 1h7l1 1 1-1h1l1 1 1-1h1l1 1 1-1 1-1 1 2 1-1h2l1-1 1 1 1-1 1 1h8l1 1 1-1 1 1h2l1-1h7l1 1 1-2 1 1 1 1h1l1-3 1 1 1 1 1 1h1l1-1 1-1h4l1 1 1-1 1 1 1-1 1 2h1l1-1h1l1 1 1-2 1-1 1 1h1l1 1 1 1 1-1 1 1 1-1h3l1-1 1 1h1l1-1h1l1 1h5l1-1h8l1 1h3l1-1h2l1 1h7l1 1h1l1-1 1-1 1 1h2l1-1 1 1h2l1-1h1l1 1h1l1 1h3l1-1h4l1-1 1 1h1l1-1 1 1h5l1-1 1 1h10l1-1 1 1h4l1-1h1l1 1 1-1 1 1h2l1 1 1-1h2l1-1h5l1 1h2l1-1 1 1 1-1h1l1 1 1-1h1l1-1h1l1 1 1 1 1-1h1l1 1 1 1h1l1-1 1 1h2l1-1h4l1 1 1-1h4l1-1 1 1h1l1-1h1l1 1h4l1 1 1-2 1-1 1 1 1 1h1l1 1h1l1-1h1l1-1 1 1 1-1 1 1h2l1-1 1 1 1-1 1 1h1l1-1 1 1 1-1 1 1h1l1-1 1 1 1-1 1 2 1-1 1-1 1 1 1-1 1 1 1-1 1 1 1-1h2l1 1h1l1 1 1-1h4l1-1 1 1 1-1 1-1 1 1h1l1 1h3l1-1 1 1 1-1h2l1-1 1 1h2l1 1h1l1-1 1 1h3l1 1 1-1 1-1h2l1 1 1-1 1 1 1-1h4l1 1 1-1 1 1h2l1-2 1 1 1 1 1-1 1 1h1l1-1 1 1h4l1 1 1-1h2l1 1 1-1h1l1 1 1-1h6l1-1 1 1h4l1-1 1 1h3l1-1 1 1 1 1 1-1h1l1-1 1 1 1-1h1l1 2 1-2h3l1 1h2l1-1h2l1 1 1 1 1-1 1-1h2l1 1h1l1-1 1 1h3l1 1 1-1h3l1-1h2l1 1 1-2 1 2 1-2 1 1 1 1h4l1-1h3l1 1 1-1 1 1 1-1 1 1h1l1-1 1 1 1-1h2l1 2h2l1-1 1 1 1-1 1 1h1l1-1 1-1h1l1 1 1-1 1 1h8l1 1 1-1h1l1 1 1-1 1 1 1-1 1-1 1 1 1 1 1-2h1l1 1h1l1-1 1 1h2l1-1 1 1h1l1 1 1-1h1l1-1 1 1 1-1 1 1h1l1-1 1 1 1-1h1l1 2h1l1-1h2l1-1 1 2 1-1 1-1 1 1h1l1-1 1 1h3l1-1 1 1h2l1-1h1l1-1 1 2h2l1-1 1 1h4l1-1h1l1 1 1-1h2l1 1 1-1 1 1h1l1-1h6l1 1 1 1 1-1h4l1-1h1l1 1h2l1 1h1l1-1h5l1 1 1-1 1-1h2l1 1 1-1h1l1 1 1-1h1l1-1 1 1h1l1 1h2l1 1h1l1-1 1-1h1" stroke="#80530a" stroke-width="2.6" stroke-dasharray="10 2"/>
<path transform="translate(1335.5 0) scale(0.78900 1)" vector-effect="non-scaling-stroke" d="M0 242h2l1-1 1 1 1 1h1l1-1 1-1h3l1 1h1l1-1h2l1 1h2l1-1 1 1 1-1h2l1 1h2l1-1h2l1 1 1-1 1 1 1-1 1 1 1-1h2l1 1h2l1-1 1 1h1l1-1h1l1 1 1-1h2l1 1 1-1h1l1 2 1-2h3l1 1h7l1-1 1-1 1 2h2l1-1h3l1 1h2l1-1 1-1 1 1h5l1 1 1 1 1-1h4l1 1 1-2 1 1h1l1-1 1 1h1l1-1 1 1 1-1 1 1 1-1h1l1 1h1l1-1h5l1 1 1-1h4l1 1 1-1 1 1h2l1 1h1l1-2 1 1h2l1-1h1l1 1 1-1h3l1 1 1 1 1-1h3l1-1 1-1 1 1h1l1-1 1 1h1l1 1 1-1 1 1 1-1h1l1 1h3l1-1h1l1 1 1-1h2l1 1h1l1 1 1-1h1l1-1h1l1 1 1-1 1 1 1-1 1-1 1 1h5l1 1 1-1h3l1 1 1-1h2l1 1 1-1 1 1 1-1 1-1h1l1 2h3l1 1 1-1h6l1-1 1 1h1l1 1h1l1-1h1l1-1 1 1h3l1-1 1 1h2l1 1 1-1h1l1 1h1l1-1h1l1-1 1 1 1-1 1 1h4l1 1 1-1h1l1-1h8l1 1h2l1-1 1 1 1-1 1 1 1-1h4l1 1h4l1-1h4l1 1h3l1-1 1 1h2l1-1 1 1h2l1-1 1 1h2l1-1 1 1 1-2 1 1h4l1 1h3l1-1 1 1 1-1h1l1 1 1-1h2l1 1h1l1-1 1 1h1l1-1 1-1 1 1 1 1h1l1-1 1 1h1l1-1h2l1 1h1l1-1h3l1 1 1-1 1 1 1-1h3l1 1 1-1h3l1 2 1-1h1l1-1 1 2 1-1 1-1 1 1h4l1 1 1-2h1l1 1h7l1-1 1 1h4l1-1h7l1 1 1-1 1 1h2l1-1h3l1 1 1-1h1l1 1h1l1 1 1-2 1 1h1l1-1 1 1h2l1-1h1l1-1 1 2h3l1-1 1 2 1-1 1-1h1l1 1 1 1 1-2h1l1 1h1l1-1h2l1 1h5l1-1 1 1 1-1 1 1h2l1-1 1 1 1-1h4l1 1 1-1h1l1 1h1l1-1h3l1 1h1l1-1h1l1 1 1-1h1l1 1 1 1 1-1h1l1-1 1 1 1-1h1l1 1 1-1 1 1 1-1 1 1h9l1-2 1 1h1l1 1 1-1h1l1 1h2l1-1h2l1 1h2l1-1 1 1 1 1 1-1 1-1 1-1 1 2h1l1-1h1l1 1 1-1h3l1-1 1 1 1 1 1-1h4l1 1 1-2 1 2 1-1h3l1 1 1-1h1l1 1 1-1 1 1h1l1-1h3l1 1h2l1-1 1 1 1-1 1 1 1-1h2l1 2 1-1h3l1-1 1 1h1l1 1 1-1 1 1h1l1-1h1l1 1 1-1h1l1-1h2l1 1 1-1 1-1 1 1 1 1h2l1-1 1 2 1-2h1l1 1 1-1 1 2 1-2h2l1 1 1-1h2l1 1 1-2 1 1 1-1 1 1h4l1 1h1l1-1 1 1 1-1 1 1 1-1h6l1 1 1-1 1 1 1-1h4l1 1h1l1-1 1 1 1-1h2l1-1 1 2 1-1 1-1 1 2h3l1-1 1 1 1-1h1l1 1h2l1-1h2l1 1 1-1h2l1-1 1 1h1l1 1 1-1 1 1 1-1 1-1 1 1 1 1 1-1h2l1-1 1 1 1-1 1-1" stroke="#80530a" stroke-width="2.6" stroke-dasharray="10 2"/>
<path transform="translate(1335.5 0) scale(0.78900 1)" vector-effect="non-scaling-stroke" d="M0 247l1-1h1l1 1h3l1-1 1 1 1-1h1l1 1h7l1-1 1 1h3l1-1h2l1 1h3l1-1h3l1 1h8l1-1 1 1h15l1-1h2l1 1h2l1-1 1 1h11l1-1h1l1 1h5l1-1h1l1 1h1l1-1 1 1h19l1-1h2l1 1h7l1-1h2l1 1h7l1-1h1l1 1h1l1-1h1l1 1h4l1-1 1 1h1l1-1 1 1h7l1-1 1 1h6l1-1h1l1 1h3l1-1 1 1h22l1-1 1 1h4l1-1h1l1 1 1-1h2l1 1h11l1-1 1 1h19l1-1h1l1 1h9l1-1h2l1 1h2l1-1h4l1 1 1-1h2l1 1 1-1 1 1h7l1-1 1 1h1l1-1 1 1h4l1-1h3l1 1h16l1-1h1l1 1h1l1-1 1 1h3l1-1 1 1h33l1-1h1l1 1h5l1-1h3l1 1 1-1 1 1h1l1-1h3l1 1h6l1-1 1 1h7l1-1 1 1h4l1-1 1 1h3l1-1 1 1 1-1 1 1 1-1 1 1h7l1-1 1 1h7l1-1 1 1h1l1-1 1 1 1-1h2l1 1h9l1-1h2l1 1h2l1-1 1 1h3l1-1 1 1h8l1-1 1 1h6l1-1h2l1 1h2l1-1 1 1h10l1-1 1 1h5l1-1h4l1 1h5l1-1 1 1h7l1-1 1 1h10l1-1 1 1h4l1-1 1 1h13l1-1 1 1h3l1-1 1 1h4l1-1 1 1h11l1-1h2l1 1h11l1-1 1 1h32l1-1h1l1 1h8l1-1h2l1 1h14l1-1h1l1 1h1l1-1 1 1h4l1-1 1 1h5l1-1 1 1" stroke="#ffa60a" stroke-width="4"/>
</g>
<line x1="1564.5" y1="80" x2="1564.5" y2="273" stroke="#fff" stroke-width="2.2" stroke-dasharray="10 2" stroke-dashoffset="7.4"/>
<line x1="1698.6" y1="80" x2="1698.6" y2="273" stroke="#fff" stroke-width="2.2" stroke-dasharray="10 2" stroke-dashoffset="7.4"/>
<rect x="1564.5" y="247.5" width="155" height="26" fill="rgba(0,0,0,0.67)"/>
<text x="1568.7" y="265.3" font-size="13" fill="#f2f2f2" text-anchor="start" textLength="146.5" lengthAdjust="spacingAndGlyphs">T1=-7m,5s,774ms,784µs</text>
<rect x="1536.6" y="247.5" width="164.5" height="26" fill="rgba(0,0,0,0.67)"/>
<text x="1539.6" y="265.3" font-size="13" fill="#f2f2f2" text-anchor="start" textLength="153.5" lengthAdjust="spacingAndGlyphs">T2=-4m,15s,709ms,292µs</text>
<rect x="1697.5" y="247.5" width="2.2" height="26" fill="#c4c4c4"/>
<rect x="1554.1" y="80" width="155" height="49.9" fill="rgba(0,0,0,0.67)"/>
<text x="1558.6" y="109.7" font-size="13" fill="#f2f2f2" text-anchor="start" textLength="22.1" lengthAdjust="spacingAndGlyphs">ΔT=</text>
<text x="1583.9" y="99.7" font-size="13" fill="#f2f2f2" text-anchor="start" textLength="120.2" lengthAdjust="spacingAndGlyphs">2m,50s,65ms,492µs</text>
<text x="1584.1" y="119.8" font-size="13" fill="#f2f2f2" text-anchor="start" textLength="88.6" lengthAdjust="spacingAndGlyphs">0.00588009 Hz</text>
</g>
<rect x="1335" y="80" width="1" height="194" fill="#969696"/>
<rect x="1335" y="273" width="525" height="1" fill="#969696"/>
<text x="1427.4" y="289.5" font-size="13" fill="#f2f2f2" text-anchor="middle" textLength="30.6" lengthAdjust="spacingAndGlyphs">-10m</text>
<text x="1522.1" y="289.5" font-size="13" fill="#f2f2f2" text-anchor="middle" textLength="23.1" lengthAdjust="spacingAndGlyphs">-8m</text>
<text x="1616.8" y="289.5" font-size="13" fill="#f2f2f2" text-anchor="middle" textLength="23.1" lengthAdjust="spacingAndGlyphs">-6m</text>
<text x="1711.4" y="289.5" font-size="13" fill="#f2f2f2" text-anchor="middle" textLength="23.1" lengthAdjust="spacingAndGlyphs">-4m</text>
<text x="1806.1" y="289.5" font-size="13" fill="#f2f2f2" text-anchor="middle" textLength="23.1" lengthAdjust="spacingAndGlyphs">-2m</text>
<g clip-path="url(#ya20)">
<text x="1330" y="254.8" font-size="13" fill="#f2f2f2" text-anchor="end">0</text>
<text x="1330" y="209.7" font-size="13" fill="#f2f2f2" text-anchor="end">200</text>
<text x="1330" y="164.7" font-size="13" fill="#f2f2f2" text-anchor="end">400</text>
<text x="1330" y="119.6" font-size="13" fill="#f2f2f2" text-anchor="end">600</text>
</g>
<text x="1598" y="69.8" font-size="12" fill="#f2f2f2" text-anchor="middle" textLength="250" lengthAdjust="spacingAndGlyphs">H1:SQZ-OPO_IR_PD_LF_OUT_DQ [s-trend]</text>
<text transform="translate(1277.4 177) rotate(-90)" font-size="13" fill="#f2f2f2" text-anchor="middle" textLength="91.6" lengthAdjust="spacingAndGlyphs">counts (x1e-06)</text>
<g clip-path="url(#c30)">
<rect x="1960" y="80" width="1" height="193" fill="#fff" fill-opacity="0.060000000000000005"/>
<rect x="1983" y="80" width="1" height="193" fill="#fff" fill-opacity="0.060000000000000005"/>
<rect x="2007" y="80" width="1" height="193" fill="#fff" fill-opacity="0.060000000000000005"/>
<rect x="2031" y="80" width="1" height="193" fill="#fff" fill-opacity="0.1"/>
<rect x="2054" y="80" width="1" height="193" fill="#fff" fill-opacity="0.060000000000000005"/>
<rect x="2078" y="80" width="1" height="193" fill="#fff" fill-opacity="0.060000000000000005"/>
<rect x="2102" y="80" width="1" height="193" fill="#fff" fill-opacity="0.060000000000000005"/>
<rect x="2125" y="80" width="1" height="193" fill="#fff" fill-opacity="0.1"/>
<rect x="2149" y="80" width="1" height="193" fill="#fff" fill-opacity="0.060000000000000005"/>
<rect x="2173" y="80" width="1" height="193" fill="#fff" fill-opacity="0.060000000000000005"/>
<rect x="2196" y="80" width="1" height="193" fill="#fff" fill-opacity="0.060000000000000005"/>
<rect x="2220" y="80" width="1" height="193" fill="#fff" fill-opacity="0.1"/>
<rect x="2244" y="80" width="1" height="193" fill="#fff" fill-opacity="0.060000000000000005"/>
<rect x="2267" y="80" width="1" height="193" fill="#fff" fill-opacity="0.060000000000000005"/>
<rect x="2291" y="80" width="1" height="193" fill="#fff" fill-opacity="0.060000000000000005"/>
<rect x="2315" y="80" width="1" height="193" fill="#fff" fill-opacity="0.1"/>
<rect x="2338" y="80" width="1" height="193" fill="#fff" fill-opacity="0.060000000000000005"/>
<rect x="2362" y="80" width="1" height="193" fill="#fff" fill-opacity="0.060000000000000005"/>
<rect x="2386" y="80" width="1" height="193" fill="#fff" fill-opacity="0.060000000000000005"/>
<rect x="2409" y="80" width="1" height="193" fill="#fff" fill-opacity="0.1"/>
<rect x="2433" y="80" width="1" height="193" fill="#fff" fill-opacity="0.060000000000000005"/>
<rect x="2457" y="80" width="1" height="193" fill="#fff" fill-opacity="0.060000000000000005"/>
<rect x="1940" y="172" width="524" height="1" fill="#fff" fill-opacity="0.1"/>
<rect x="1940" y="259" width="524" height="1" fill="#fff" fill-opacity="0.05"/>
<rect x="1940" y="230" width="524" height="1" fill="#fff" fill-opacity="0.05"/>
<rect x="1940" y="201" width="524" height="1" fill="#fff" fill-opacity="0.05"/>
<rect x="1940" y="143" width="524" height="1" fill="#fff" fill-opacity="0.05"/>
<rect x="1940" y="114" width="524" height="1" fill="#fff" fill-opacity="0.05"/>
<rect x="1940" y="85" width="524" height="1" fill="#fff" fill-opacity="0.05"/>
<g shape-rendering="crispEdges" fill="none" stroke-linejoin="miter">
<path transform="translate(1939.5 0) scale(0.78900 1)" vector-effect="non-scaling-stroke" d="M0 223l1 19 1-33 1 42 1-31 1-11 1 38 1-9 1-12 1 8 1-13 1 22 1-23 1-2 1-6 1-2 1 38 1-7 1-35 1 9 1 5 1 10 1 6 1-3 1 13 1-14 1 9 1 12 1-20 1 20 1 2 1-31 1 19 1-24 1-3 1 29 1-10 1-8 1-16 1 4 1 32 1-2 1-7 1 5 1 3 1-14 1-18 1-2 1 5 1-6h1l1 17 1-15 1-2 1 20 1-5h1l1 2 1-16 1 31 1-18h1l1-5 1-11 1 30 1 12 1-12 1-7 1-12 1 23 1 4 1-22 1 21 1-20 1-4 1-2 1 28 1-13 1-17 1 6 1 16 1-29 1 11 1 23h1l1-20 1 30 1-36 1-8 1 28 1 5 1-13 1-21 1 12 1 20 1-1 1-28 1-1 1-1 1 34 1 5 1-9 1 8 1-40 1 1 1 9 1 26 1-16 1 21 1-5 1 4 1-36 1 19 1 5 1-20 1 21 1 9 1-18 1-4 1 28 1-21 1-5 1 10 1 12 1-3 1 4 1-40 1-2 1 44 1-9 1 4 1-14 1-10 1 23 1-5 1 1 1-29 1-2 1 6 1 36 1-22 1-17 1 2 1 32 1-37 1 36 1-36 1-2 1-1 1 14 1 8 1 10 1 3 1-24 1-4 1-2 1 30 1 10 1-36 1 23 1 13 1-31h1l1-12 1-5 1 31 1-21 1 21 1-2 1 18 1-2 1-6 1-36 1 18 1-9 1 16 1-11 1 7 1-14 1-4 1 9 1-6 1 11 1 9 1-22 1 37 1-18 1-18 1 30 1-3 1-9 1-8 1-1 1 18 1 11 1-23 1 3 1 10 1-28 1 3 1 27 1-34 1 27 1-26 1 37 1-38 1 1 1 45 1-2 1-29 1 8 1 14 1-32 1 39 1-20 1 21 1 3 1-46 1 6 1 31h1l1-36 1-3 1 24 1-12 1-13h1l1 42 1-1 1-1 1-20 1 10 1-6 1 11 1-32 1 14 1 19 1-21 1 1 1 12 1-16 1-9 1 27 1-19 1-8h1l1-1 1 11 1 23 1-31 1 29 1-34 1 9 1 24h1l1-23 1 7 1 23 1-16 1-1 1 5 1 7 1 6 1-35 1 31 1-29 1 36 1 1 1-33 1 10 1 4 1-22 1 36 1-33 1 30 1-31 1 15 1-16 1 18 1-7 1-9 1-2 1 11 1-8 1 26 1-19 1 18 1-18 1 14 1-4 1 7 1-8 1 16 1-17 1-14 1 2 1 14 1 8 1-30h1l1 16 1-1 1 4 1-21 1 27 1-27 1 6 1 4 1 26 1-3 1-1 1-5 1 6 1-15h1l1-18 1 38 1-16 1-1 1-17 1 7 1 31 1-40 1 2 1 1 1 13 1-2 1 13 1-22 1-2 1 39 1-31 1 28 1-39 1 45 1-5 1-11 1-2 1 12 1-34 1-6 1 23 1-5 1 1 1 29 1-45 1 37 1-34 1 27 1-27 1 3 1 10 1-4 1 18 1-4 1-13 1 4 1 16 1-12 1-19 1 33 1-33 1 1 1 8 1 20 1-24 1 28 1-8 1-14 1 27 1-42 1 18 1 14 1-25 1-9 1 27 1-25 1 12 1 29 1-7 1-3 1 6 1-40 1 37 1 1 1-35 1 27 1-30 1 33 1-25 1-2 1-4 1 5 1-1 1 33 1 8 1-37 1-5 1 28h1l1 7 1-36h1l1 12 1 9 1-10 1-1 1-13 1 43 1-40 1 35 1-23 1 26 1-31 1-2 1 11 1-11 1 2 1 7 1-15 1 29 1 6 1-27 1 3 1 19 1-24 1-3 1 13 1 22 1-10 1 8 1-2 1-25 1 24 1-24 1 32 1-6 1 5 1-40 1 15 1 16 1 2 1 5 1-39 1 38 1-35 1-1 1-1 1 35 1-32 1 24 1-9 1 22 1-5 1-34 1 37 1-4 1-4 1-10 1-6 1-5 1-6 1 11 1 23 1-2 1-32 1-3 1 27 1-4 1 10 1 1 1-35 1 15 1 25 1-37 1 7 1 9 1 15 1-20 1 16 1-20 1-5 1 24 1-14 1 17 1-20 1 2 1 18 1-2 1 1 1 10 1-16 1-6 1 11 1-25 1 1 1 4 1 16 1-17 1-1 1 32 1-9 1 6 1-23 1-5 1 10 1-1 1-14 1-2 1 29 1-32 1 12 1 19 1 9 1-36 1 38 1-3 1-8 1-13 1 5 1-18 1 5 1 22 1 14 1-4 1-5 1-12 1 16 1 4 1-35 1 26 1 3 1-3 1-11 1-22 1 5 1 23 1-2 1-26 1 36h1l1-6 1-19 1 24 1-3 1 4 1-5 1-28 1 18 1-22 1 7 1-5 1 11 1 12 1 14 1-1 1-4 1-14 1 3 1 12 1-8 1 6 1-22 1 5 1 19 1-33 1 7 1 14 1-16 1 1 1-7 1 16 1 8 1-8 1 1 1-1 1-13 1-4 1 1 1 39 1-6 1-1 1-28 1 7 1 24 1 4 1-36 1 2 1 20 1-2 1-21 1 34 1-27 1 2 1 24 1-18 1 11h1l1-1 1 9 1-37 1 1 1 4 1 5 1 23 1-3 1-3 1 4 1-5 1-24 1 4 1 5 1 14 1-1 1-14 1-1 1-7 1 15 1 18 1-27 1 30 1-35 1 37 1-20 1 21 1-15 1-8 1 22 1-18 1-3 1 15 1-19 1 15 1 12 1-15 1 6 1-32 1 33 1 4 1 1 1 3 1-43 1 1 1 28 1 10 1-27h1l1 7 1 19 1-19 1-8 1-12 1 3 1-3 1 7 1 2 1 13 1-21 1 24 1-22 1 43 1-7 1-33 1 25 1-6 1 8 1-21" stroke="#7b7b0a" stroke-width="3" stroke-dasharray="10 2"/>
<path transform="translate(1939.5 0) scale(0.78900 1)" vector-effect="non-scaling-stroke" d="M0 156l1-43 1-6 1-7 1 62 1-25 1-36 1 70 1-54 1 40 1-44 1 55h1l1 2 1-72 1 60 1-41 1 50 1-45 1 41 1-5 1 4 1-16 1 24 1-8 1-8 1-30 1 27 1 19 1-20 1-31 1-20 1 32 1 8 1-40 1 5 1 63 1-69 1 73 1-4 1-12 1-57 1 52 1 16 1 2 1-74 1 70 1-17 1 15 1-38 1 31 1-52 1 35 1-2 1-9 1 44 1-5 1-54 1-8 1 67 1-72 1 67 1 1 1-69 1 71 1-32 1 1 1-28 1-12 1 7 1 13 1-20 1 71 1-57 1-14 1 4 1 65 1-41 1-4 1 47 1-57 1 36 1 17 1-34 1-12 1 38 1-2 1-19h1l1-35 1 3 1 17 1 17 1 30 1-50 1-18 1 33 1-25 1 31 1-6 1 23 1 9 1-24 1 13 1 9 1-42 1 29 1-30 1 39 1-30 1 42 1-10 1 3 1-14 1 4 1-29 1 44 1-30 1 28 1-2h1l1 6 1-70 1 2 1 34 1-35 1 10 1 35 1-10 1-31 1-4 1 10 1 37 1-30 1 7 1-8 1-10 1 27 1-17 1 29 1-29 1 44 1-32 1 23 1-39 1 39 1-54 1 57 1 5 1-10 1-7 1 14 1-4 1-47 1 53 1 5 1-16 1 22 1-67 1 27 1 17 1-48 1 6 1 5 1 53 1-58 1 6 1 50 1-40 1 27 1-32 1 10 1-4 1 23 1-48 1 6 1 65 1-71 1 18 1 40 1-58 1 46 1 25 1-15 1 6 1 8 1-17 1-29 1 39 1-24 1 13 1 14 1-46 1 35 1 16 1-4 1-5 1-55 1-4 1 1 1 61 1-27 1 10 1-39 1 38 1-47 1 65 1-57 1-4 1 23 1-26 1 12 1 41 1-52 1 11 1-4 1-3 1 31 1-10 1-21 1-6 1 31 1 42 1-6 1-67 1 48 1-15 1 30 1 10 1-67 1 57 1 2 1 1 1-53 1 41 1 12 1 7 1-37 1 31 1-53 1-11 1 48 1-48 1 59 1-62 1 73 1-60 1 60 1-48 1-25 1 53 1-49 1 42 1 26 1-40 1 16 1-24 1-11 1 59 1-78 1 9 1-2 1 46 1-36 1 41 1-11 1 3h1l1-30 1 57 1-4 1-67 1 71 1-30 1-12 1 44 1-4 1-69 1 72 1-4 1-14 1-47 1 2 1 64 1-64 1 9 1-4 1 32 1 16 1-56 1 62 1 4 1-7 1-24 1 12 1-16 1 5 1 17 1-59 1 58 1-8 1-28 1 50 1-63 1 54 1-62 1 12 1-8 1-2 1 11 1 48 1-40 1-1 1 25 1 17 1 7 1-55 1 14 1-15 1 54 1 2 1-16 1-37 1 24 1-40 1 10 1 57 1-24 1 14 1 6 1-61 1 64 1-8 1-4 1-22 1-19 1 52 1-24 1 24 1-12 1-36 1 54 1-62 1-5 1 59 1-64 1 5 1 66 1-52 1-19 1 29 1-28 1-5 1 18 1 55 1-69 1 70 1-16 1-47 1 7 1 53 1-64 1 6 1-7 1 47 1-34 1 51 1-65 1-1 1 73 1-23 1-19 1 39 1-4 1-59 1 14 1 52 1-2 1-10 1-61 1 64 1-30 1 33 1-10 1-53 1 60 1-29h1l1 32 1 5 1-29 1 21 1-13 1-47 1 62 1-50 1 52 1-46 1 22 1-37 1 63 1-23 1 19 1-46 1-2 1-7 1 34 1-11 1 25 1 8 1 5 1 1 1-22 1 15 1-46 1 47 1 3 1 3 1-8 1 1 1-1 1-65 1 5 1 61 1-62 1 25 1 16 1 2 1 6 1-29 1 42 1-59 1 59 1-2 1-38 1-4 1 6 1 33 1-31 1-21 1 57 1-66 1 55 1-55 1 3 1 20 1 49 1-9 1 1 1-36 1 35 1-15 1-48 1 29 1 43 1-38 1 5 1 27h1l1 1 1-4 1 5 1-4 1 5 1-7 1-36 1-24 1 35 1 28 1-2 1-52 1 43 1 9 1-24 1-36 1 28 1-31 1 72 1-46 1-26 1 34 1 14 1-23 1 40 1-65 1 66 1-35 1-12 1 27 1 27 1-22 1 22 1-63 1-6 1 69 1-4 1-68 1-1 1 18 1 16 1 39 1-7 1 4 1 2 1 1 1-1 1-67 1 45 1 19 1-38 1-22 1 31 1 31 1-13 1-20 1-25 1 36 1-40 1-8 1 71h1l1-2 1-58 1 25 1 23 1-33 1 36 1 4 1-65 1 31 1 35 1-67 1 69 1 3 1-73 1 41 1-33 1 62 1-41h1l1-34 1 20 1-12 1 34 1 27 1-11 1 17 1-70 1 9 1-4 1 49 1 9 1-23 1-33 1 13 1-11 1 61 1-55 1 31 1 9 1-38 1 45 1 2 1-55 1 6 1-12 1 68 1 2 1-52 1-18 1 70 1-19 1 11 1-3 1 1 1-28 1 37 1-72 1 70 1-67 1-3 1 51 1 21 1-5 1-3 1-62 1 63 1-15 1-7 1-9 1-5 1 30 1-13 1-25 1 43 1 8 1-72 1 28 1 25 1-42 1 61 1-41 1 31 1 7 1-29 1 23 1-52 1 57 1-34 1 28 1-18 1 26 1-68 1-5 1 32 1 29 1-6 1-16 1-32 1 62 1-1 1-30 1 14 1 19 1-28 1-19 1 44 1-63 1-2 1 64 1-54 1-1 1 31 1 14 1-33 1-20 1 19 1-10 1 14 1 25 1-25 1 21 1 28 1-23 1-48 1 49 1-16 1-4 1-17 1-3 1-11 1 2 1 71 1-72 1 38 1-32 1 60 1-56 1-9 1 10 1-13 1 22 1 16 1 17 1-50 1 28 1-1" stroke="#7b7b0a" stroke-width="3" stroke-dasharray="10 2"/>
<path transform="translate(1939.5 0) scale(0.78900 1)" vector-effect="non-scaling-stroke" d="M0 186l1 9 1-6 1 7 1-8 1 9 1-1 1-1 1 7 1-11 1 7 1 1 1-3 1-6 1 4 1-11 1 5 1 3 1-2 1 2 1 4h1l1-3 1-8 1 3 1 1 1 11 1-4 1-3 1-8 1-2 1 5h1l1 2 1 5 1-2 1 1 1-3 1-2 1 3 1-5 1 8 1-2 1-2 1 9 1-8 1 8 1-17 1 6 1-1h1l1 10 1-5 1 5 1-5 1-4 1 1 1 10 1-12 1 1 1-2 1 6 1 1 1-10 1 6 1 3 1 1 1-6 1 13 1-6 1 2 1-14 1 1 1 5 1 1 1 2 1 2 1-1 1-8 1 6 1 2 1-2 1-6 1 2 1 8 1-2 1-1 1 6 1-1 1-5 1 2 1-9 1 3 1 5 1-1 1 5 1-1 1-6 1 1 1 9 1 1 1-9 1 5 1-2 1-7 1 4 1 1 1 1 1-6 1 18 1-8 1-5 1-8 1 3 1-4h1l1 10 1-2h1l1 14 1-20 1-2 1 2 1-2 1 8 1-4 1 7 1-1 1 4 1-10 1 4 1-4 1 8 1-4 1-4 1 2h2l1 1 1 11 1-7 1-7 1 2 1 1 1-1 1 6 1 2 1 2 1-14 1 14 1-12 1 10 1-3 1-3 1 2 1-7 1 4 1 3 1-8 1-3 1 4 1 5 1 1 1-7 1 8 1 3h1l1-8h1l1 5 1 2 1-3 1 5 1-1h1l1-3 1 1 1-2 1 1 1 2 1-5 1-2 1 11 1-7 1 1 1 3 1-16 1 9 1-1 1 4 1-9 1 3 1 6 1-9 1 9 1-7 1 6 1 2 1 2 1 2h1l1-6 1 1 1 6 1-5 1 5 1-7 1 2h1l1-7 1 12 1-14 1-9 1 6 1 4 1 7 1-6 1 4 1 2 1 3 1-9h1l1 9 1-2 1 4 1-8 1 5 1-2 1-3 1 2 1 5 1-1 1 3 1-11 1-1 1 11 1 1 1-14 1 1 1-13 1 15 1 1 1 5 1-2 1-7 1 3 1 8 1 14 1-16 1-3 1-1 1 1 1 4 1-3 1 3 1-9 1 9 1 6 1-6 1 2 1-5 1-1h1l1-6 1 7 1-2 1 1 1-1 1 7 1 2 1-8 1 6 1-8 1-5 1 8 1-2 1 1 1-6 1-5 1 4 1 1 1-1 1 9h1l1-5 1 5 1-8 1 8h1l1-1 1-3 1 6h1l1-4h1l1-2 1 6 1 3 1 9 1-4 1-5 1 3 1-4 1-6 1 3 1-5 1-1 1 3 1-2 1-1 1 9 1-10 1 12 1-5 1 2h1l1-3 1 1h1l1-1 1 4 1-4 1 4 1-5 1 5 1-4 1 1 1-8 1 8 1-7 1 5 1 7 1-11 1-2 1-4 1 8 1-3 1-4 1 4 1-10 1 10 1-2 1 7 1 2 1-1 1-2 1-2 1-2 1 11 1-6 1 1 1 6 1-3 1-7 1-1 1 8 1-1h1l1-9 1 5 1 3 1-1 1 10 1-8 1-6h1l1 10 1-15 1 3 1 4 1-1 1-2 1 3 1 1 1-3 1 7 1-6 1 5 1-4 1-4 1 1 1-1 1 5 1 3 1-6 1 2 1 4h1l1 1 1-6 1-1 1-4 1 9 1-1h1l1 8 1 3 1-13 1 4 1 3 1-14 1 11 1-8 1 2h1l1 4 1 4 1-10 1-5 1 10 1-5 1 3 1-2 1 3 1 4 1 5 1 2 1-6 1-2 1 4 1 3 1-2 1-6 1-15 1 9 1 3 1-2 1 8 1-9 1 3 1 5 1 2 1 2 1-3 1-6 1 5 1-6 1 2 1 8 1 1 1-1 1-2 1-11 1-6 1 7 1 2 1-13 1 25 1-6h1l1-2 1-4 1 1 1 12 1-8 1 1 1-3 1-6 1 11 1-4 1-4 1 9 1-10h1l1 12 1-5 1-4 1-2 1 6 1 1 1 1 1-4 1-2 1-3 1 1 1 4 1-1 1 4 1-7 1 6 1 2 1-3 1 7 1-8 1-6 1 1 1-1 1 1 1 3 1 1 1 5 1-5 1-4 1-6 1 8h1l1 7 1-4 1 1 1 15 1-15 1-8 1 11 1 2 1 1 1-7 1-3 1 5 1-6 1 6 1-8 1-3 1 3 1 9 1-7 1 1 1 4 1 5 1-8 1-2 1 3 1-4 1-2 1-1 1 18 1-14 1 1 1 4 1-2 1 2 1-6 1 3 1-1 1-3 1-5 1 3 1 9 1-10 1 5 1-4 1 4 1 3 1 6 1-5 1-4 1 4 1 1 1 2 1-2 1-2 1-4 1 4 1 7 1-3 1-7 1 2 1 6 1 1 1-3 1-7 1 2 1-6 1 3 1 7 1 2h1l1-3 1 2 1 2 1 1 1-7 1-4 1 8 1-10h1l1 6 1 7 1-3h1l1-5 1 3 1-5 1-8 1 11 1 8 1-12 1-5 1 15 1-1 1 11 1-14 1-1 1 3 1 5 1-11 1 15 1-1 1-4 1-4 1-4h1l1-7 1 4 1 6 1 2 1 6 1-6 1-5 1 5 1-6 1 7 1-6 1 1 1-8 1-1 1 6 1 4 1 4 1 11 1-10 1 2 1-11 1-3 1 1 1 1 1 8 1 9 1-11 1-22 1 20 1-5 1-19 1 25 1-4 1-1 1-5 1 3 1 2 1-10 1 16h1l1-6 1 11 1-1 1-8 1 4 1 6 1-8 1-3h2l1 8 1-15 1 9 1 3 1-5 1-1 1 2h1l1-2h1l1 5 1-2 1-2h1l1 1 1 5" stroke="#fbfb08" stroke-width="4"/>
</g>
<line x1="2168.5" y1="80" x2="2168.5" y2="273" stroke="#fff" stroke-width="2.2" stroke-dasharray="10 2" stroke-dashoffset="7.4"/>
<line x1="2302.6" y1="80" x2="2302.6" y2="273" stroke="#fff" stroke-width="2.2" stroke-dasharray="10 2" stroke-dashoffset="7.4"/>
<rect x="2168.5" y="247.5" width="155" height="26" fill="rgba(0,0,0,0.67)"/>
<text x="2172.7" y="265.3" font-size="13" fill="#f2f2f2" text-anchor="start" textLength="146.5" lengthAdjust="spacingAndGlyphs">T1=-7m,5s,774ms,784µs</text>
<rect x="2140.6" y="247.5" width="164.5" height="26" fill="rgba(0,0,0,0.67)"/>
<text x="2143.6" y="265.3" font-size="13" fill="#f2f2f2" text-anchor="start" textLength="153.5" lengthAdjust="spacingAndGlyphs">T2=-4m,15s,709ms,292µs</text>
<rect x="2301.5" y="247.5" width="2.2" height="26" fill="#c4c4c4"/>
<rect x="2158.1" y="80" width="155" height="49.9" fill="rgba(0,0,0,0.67)"/>
<text x="2162.6" y="109.7" font-size="13" fill="#f2f2f2" text-anchor="start" textLength="22.1" lengthAdjust="spacingAndGlyphs">ΔT=</text>
<text x="2187.9" y="99.7" font-size="13" fill="#f2f2f2" text-anchor="start" textLength="120.2" lengthAdjust="spacingAndGlyphs">2m,50s,65ms,492µs</text>
<text x="2188.1" y="119.8" font-size="13" fill="#f2f2f2" text-anchor="start" textLength="88.6" lengthAdjust="spacingAndGlyphs">0.00588009 Hz</text>
</g>
<rect x="1939" y="80" width="1" height="194" fill="#969696"/>
<rect x="1939" y="273" width="525" height="1" fill="#969696"/>
<text x="2031.4" y="289.5" font-size="13" fill="#f2f2f2" text-anchor="middle" textLength="30.6" lengthAdjust="spacingAndGlyphs">-10m</text>
<text x="2126.1" y="289.5" font-size="13" fill="#f2f2f2" text-anchor="middle" textLength="23.1" lengthAdjust="spacingAndGlyphs">-8m</text>
<text x="2220.8" y="289.5" font-size="13" fill="#f2f2f2" text-anchor="middle" textLength="23.1" lengthAdjust="spacingAndGlyphs">-6m</text>
<text x="2315.4" y="289.5" font-size="13" fill="#f2f2f2" text-anchor="middle" textLength="23.1" lengthAdjust="spacingAndGlyphs">-4m</text>
<text x="2410.1" y="289.5" font-size="13" fill="#f2f2f2" text-anchor="middle" textLength="23.1" lengthAdjust="spacingAndGlyphs">-2m</text>
<g clip-path="url(#ya30)">
<text x="1934" y="264.8" font-size="13" fill="#f2f2f2" text-anchor="end">0.14</text>
<text x="1934" y="235.8" font-size="13" fill="#f2f2f2" text-anchor="end">0.16</text>
<text x="1934" y="206.7" font-size="13" fill="#f2f2f2" text-anchor="end">0.18</text>
<text x="1934" y="177.7" font-size="13" fill="#f2f2f2" text-anchor="end">0.2</text>
<text x="1934" y="148.7" font-size="13" fill="#f2f2f2" text-anchor="end">0.22</text>
<text x="1934" y="119.6" font-size="13" fill="#f2f2f2" text-anchor="end">0.24</text>
<text x="1934" y="90.6" font-size="13" fill="#f2f2f2" text-anchor="end">0.26</text>
</g>
<text x="2202" y="69.8" font-size="12" fill="#f2f2f2" text-anchor="middle" textLength="223" lengthAdjust="spacingAndGlyphs">H1:SQZ-RLF_QPD_A_POWER [s-trend]</text>
<text transform="translate(1880.4 177) rotate(-90)" font-size="13" fill="#f2f2f2" text-anchor="middle">V</text>
<g clip-path="url(#c01)">
<rect x="118" y="330" width="1" height="193" fill="#fff" fill-opacity="0.060000000000000005"/>
<rect x="141" y="330" width="1" height="193" fill="#fff" fill-opacity="0.060000000000000005"/>
<rect x="165" y="330" width="1" height="193" fill="#fff" fill-opacity="0.060000000000000005"/>
<rect x="189" y="330" width="1" height="193" fill="#fff" fill-opacity="0.1"/>
<rect x="212" y="330" width="1" height="193" fill="#fff" fill-opacity="0.060000000000000005"/>
<rect x="236" y="330" width="1" height="193" fill="#fff" fill-opacity="0.060000000000000005"/>
<rect x="260" y="330" width="1" height="193" fill="#fff" fill-opacity="0.060000000000000005"/>
<rect x="283" y="330" width="1" height="193" fill="#fff" fill-opacity="0.1"/>
<rect x="307" y="330" width="1" height="193" fill="#fff" fill-opacity="0.060000000000000005"/>
<rect x="331" y="330" width="1" height="193" fill="#fff" fill-opacity="0.060000000000000005"/>
<rect x="354" y="330" width="1" height="193" fill="#fff" fill-opacity="0.060000000000000005"/>
<rect x="378" y="330" width="1" height="193" fill="#fff" fill-opacity="0.1"/>
<rect x="402" y="330" width="1" height="193" fill="#fff" fill-opacity="0.060000000000000005"/>
<rect x="425" y="330" width="1" height="193" fill="#fff" fill-opacity="0.060000000000000005"/>
<rect x="449" y="330" width="1" height="193" fill="#fff" fill-opacity="0.060000000000000005"/>
<rect x="473" y="330" width="1" height="193" fill="#fff" fill-opacity="0.1"/>
<rect x="496" y="330" width="1" height="193" fill="#fff" fill-opacity="0.060000000000000005"/>
<rect x="520" y="330" width="1" height="193" fill="#fff" fill-opacity="0.060000000000000005"/>
<rect x="544" y="330" width="1" height="193" fill="#fff" fill-opacity="0.060000000000000005"/>
<rect x="567" y="330" width="1" height="193" fill="#fff" fill-opacity="0.1"/>
<rect x="591" y="330" width="1" height="193" fill="#fff" fill-opacity="0.060000000000000005"/>
<rect x="615" y="330" width="1" height="193" fill="#fff" fill-opacity="0.060000000000000005"/>
<rect x="98" y="508" width="524" height="1" fill="#fff" fill-opacity="0.1"/>
<rect x="98" y="391" width="524" height="1" fill="#fff" fill-opacity="0.065"/>
<rect x="98" y="484" width="524" height="1" fill="#fff" fill-opacity="0.05"/>
<rect x="98" y="461" width="524" height="1" fill="#fff" fill-opacity="0.05"/>
<rect x="98" y="438" width="524" height="1" fill="#fff" fill-opacity="0.05"/>
<rect x="98" y="415" width="524" height="1" fill="#fff" fill-opacity="0.05"/>
<rect x="98" y="368" width="524" height="1" fill="#fff" fill-opacity="0.05"/>
<rect x="98" y="345" width="524" height="1" fill="#fff" fill-opacity="0.05"/>
<g shape-rendering="crispEdges" fill="none" stroke-linejoin="miter">
<path transform="translate(97.5 0) scale(0.78900 1)" vector-effect="non-scaling-stroke" d="M0 460l1 29 1-35 1-2 1 28 1 3 1-12 1 13 1-25 1 23 1-22 1-4 1 23 1-14 1 16 1-13 1 19 1-31 1 5 1-5 1-2 1 36 1-10 1 4 1-27 1 3 1 16 1-15 1 14 1-14 1 23 1-29 1 31 1-2 1 6 1-3 1-21 1 28 1-11 1 20 1-51 1 17 1-4 1 16 1-27 1-2 1 11 1 4 1 8 1 11 1-19h1l1-13 1 13 1 7 1-8 1-15 1 5 1 9 1-14 1 19 1 20 1-5 1-21 1 23 1-9 1 6 1-28 1-4 1 4 1 28 1-22 1 14 1 11 1-29 1 31 1-1 1-37h1l1 1 1 24 1 9 1-28 1 12 1 21 1-3 1-8 1-24 1 32 1-27 1 23 1-18 1 5 1-14 1 8 1-10 1-2 1 42 1 3 1-23 1 4 1-10 1 5 1-5 1 17 1-15 1 10 1-7 1-22h2l1 4 1 22 1 9 1-28 1 28 1-15 1-16 1-1 1 31 1-29 1 21 1-10 1-10h1l1 7 1 20 1-16 1-11 1-3 1 30 1 3 1-2 1-23 1 22 1-18 1-13 1 9 1 19 1-7 1-6 1-7 1 18 1-8 1 12 1 5 1-16 1-16 1 30 1 5 1-7 1-33 1 7 1 26 1-33 1 38 1 4 1-4 1-5 1 1 1 1 1-19 1-16 1 17 1-2 1-11 1 20 1-24 1 10 1 9 1-17 1 31 1-23 1 9 1 6 1-1 1-6 1 4 1 1 1-17 1 24 1-25 1-1 1 2 1-3 1 28 1-28 1-1 1-1 1 20 1 5 1 4 1-17 1 8 1-18 1 21 1 13 1-29 1-5h1l1 24 1-10 1 13 1 7 1-8 1-2 1-15 1-9 1 33 1-1 1-9 1-19 1 19 1 5 1-29 1-1 1 27 1-26 1 31 1-16 1 18 1 2 1-36 1 21 1 18 1-33 1-4 1 33 1-19 1-12 1 41 1-12 1 3 1-9 1 5 1 22 1-28 1-9 1-14 1 20 1-9 1 17 1-2 1 7 1-24 1 26 1-9 1-14 1-9 1 7 1-9 1 27 1-11 1-16 1 17 1 21 1-25 1-9 1 1 1-5 1-1 1 3 1 14 1-17 1 22h2l1-10 1 4 1-17 1 20 1-20 1 9 1-7 1 27 1-25 1 11 1 19 1-8 1-17 1-6 1 27 1-14 1-8 1 20 1-9 1 2 1-13 1 8 1-17 1 11 1-10 1 31 1-34 1 20 1-20 1 6 1 17 1 14 1-35 1 9 1-6 1 5 1-7 1 16 1 19 1-15 1 7 1-24 1 24 1-17 1 13h1l1 7 1 4 1-22 1 17 1-1 1-25 1 29 1-8 1-11 1-15 1 7 1 16 1 17 1-40h1l1 10 1-2 1-9 1 36 1-8 1-24 1 31 1-1 1-3 1-10 1-5 1-2 1-9 1 23 1 1 1-13 1 9 1-11 1 4 1 11 1 1 1-29 1 6 1 20 1 1 1-16 1-12 1 2 1 7 1-7 1 35 1 4 1-35 1 24 1 4 1-1 1-2 1 3 1-20 1 16 1 2 1-28 1-2 1 32 1-27 1 28 1-20 1-3 1-2 1-8 1 25 1-15 1 18 1 5 1-35 1 26 1-26 1 9 1-9 1 22 1 20 1-29 1-9 1 22 1-26 1 24 1-16 1 26 1-31 1-1 1 21 1-11 1 8 1-6 1 25 1-16 1-15 1 25 1-24 1 28 1-35 1 29h1l1-27 1 22 1 7 1-19 1 7 1-21 1 16 1-16 1 35 1-31h1l1 24 1-23 1 10 1 10 1 9 1-16 1 18 1-9 1-14 1 14 1-6 1 15 1 14 1-13 1-37 1 17 1-10 1-7 1 2 1 21 1-23 1 5 1 2 1 17 1-7 1-4 1-13 1 12 1-2 1 1h1l1-5 1 22 1-23 1 3 1-8 1 5 1 8 1-11 1 32 1-12 1 29 1-47 1 21 1 3 1 5 1-26 1-2h1l1-3 1 24 1 26 1-21 1-26 1 26 1 5 1-32 1 9 1 16 1 8 1-31 1 19 1-5 1-17 1 22 1 5 1-15 1 11 1 8h1l1-25 1 16 1-20 1 14 1-7 1 21 1-23 1 26 1-17 1-8 1 24 1-28 1 19 1-9 1 11 1-2 1-18 1 12 1-19h1l1 16 1-17 1 39 1-29 1 29 1 1 1-7 1 13 1-41 1 6 1 27 1-17h1l1 7 1-3 1 21 1-41 1 22 1 13 1-27 1-11 1 16 1-18 1 31 1-7 1-23h1l1 25 1 5 1 12 1-12 1-2 1-9 1-9 1-6 1 29 1-33h1l1 35 1-25 1-9 1 15 1 7 1 11 1-17 1 11 1-29 1 17 1 10 1-25 1 4 1 21 1-1 1-26h1l1 32 1-6 1-6 1-1 1 8 1-26 1 15 1 6 1-22h1l1 40 1-16 1-10 1 28 1-17 1-25 1 11 1 22 1-16 1-1 1 12 1-6 1-14 1 7 1 16h1l1-20 1 6 1-17 1 22 1-1 1-21 1 3 1 18 1-10 1-9 1 40 1-38 1 27 1-3 1-5 1-9 1-9 1 29 1-24 1 19 1-27 1 9 1 9 1 2 1 9 1 4 1-32 1 17 1 12 1-30 1 1 1 14 1 12 1-5 1 4 1-5 1-4 1-17 1 6 1-7 1 25 1-6 1-14 1-6 1 25 1-25 1 22 1-7 1 17 1-8 1-14 1-4 1 25 1-11 1-18 1 23 1 12 1-1 1-29 1 2 1-9 1 38 1-30 1 24 1-7 1-8 1 16 1-3 1-18 1 16 1-13 1-9 1 38 1-2" stroke="#0a0a7a" stroke-width="3" stroke-dasharray="10 2"/>
<path transform="translate(97.5 0) scale(0.78900 1)" vector-effect="non-scaling-stroke" d="M0 378l1 35 1 9 1-11 1-12 1-35 1 7 1 37 1-43 1 2 1 28 1-17 1-6 1 44 1-26 1-26 1 52 1-50 1 6 1 30 1-4 1 21 1-18 1-38 1 16 1 31 1-54 1 11 1 1 1 3 1 46 1-56 1-3 1 23 1-28 1-1 1 2 1 38 1 26 1-60 1 66 1-11 1-43 1 38 1 6 1-14 1-35 1 52 1-26 1-9 1 39 1-27 1-31 1 44 1-45 1 54 1-48 1-14 1 60 1 4 1-58 1 11 1 43 1-17 1 9 1-33 1 42 1-17 1-33 1 1 1 10 1 27 1 11 1-26 1-22h1l1 20 1-19 1-4 1 9 1 13 1-11 1-16 1 10 1-6h1l1 58 1-51h1l1 1 1 50 1 2 1-22 1 24 1-59 1-3 1 58 1-58 1 2 1 29 1-25 1 14 1-1 1-3 1 13 1-21 1 23 1-31 1-5 1-5 1 28 1 42 1-49 1 7 1-21 1 30 1 20 1 10 1-38 1 38 1-40 1-14 1 8 1 34 1-1 1-48 1 17 1 43 1-26 1 9 1-5 1-1 1-5 1 16 1-21 1 1 1-23 1 57 1-21 1 19 1-28 1-16 1 23 1 2 1-22 1 14 1 29 1-30 1 29 1-14 1-41 1 39 1-29 1 33 1 1 1-12 1-14 1 25 1-15 1-17 1-7 1 31 1 20 1-54 1 32 1-31 1 9 1 45 1-41 1 13 1 8 1-23 1 42 1 4 1-3h1l1-60 1 2 1 9 1-5 1 8 1 44 1-38 1 1 1-2 1-15 1 55 1-38 1-18 1 52 1-21 1-38 1 8 1 53 1-13 1-18 1 34 1 1 1-14 1-39 1-4h1l1 33 1-21 1 40 1-4 1-16 1-3 1-31 1 39 1 5 1 8 1-20 1 8 1 15 1-24 1-24 1-9 1 46 1-45 1 45 1-23 1 14 1-38 1 16 1 13 1-7 1 38 1-6 1 8 1-54 1 45 1-21 1 24 1-1 1-7 1-11 1 3 1-37 1 58 1-56 1 28 1-13 1 5 1-27 1 6 1 46 1 12 1-3 1-60 1 21 1-7 1 31 1-4 1-29 1 11 1-5 1 6 1 22 1-43 1 23 1-22 1 58 1-42 1 12 1 6 1 5 1-39 1-11 1 63 1-37 1 19 1 17 1-7 1 13 1-15 1-41 1 13 1 19 1 15 1-23 1 5 1-11 1-19 1 8 1 28 1 10 1-10 1 8 1 16 1-43 1-10 1 45 1-44 1-3 1 31 1 11 1 4h1l1-24 1 29 1-18 1 16h1l1 2 1-53 1 22 1-27 1 58 1-57 1 20 1 3 1 38 1-34 1-20 1 36 1-34 1 4 1 18 1-22 1 11 1 14 1-35 1 25 1 37 1-7 1-14 1-1 1-38 1 40 1 7 1-3 1-61 1 65 1-22 1-4 1 4 1-2 1-8 1 40 1 3 1-9 1-29 1-18 1 58 1-49 1 47h1l1-34 1-16 1 49 1-61 1 62 1-37 1 35 1-19 1 7 1-53 1 66 1-5h1l1 3 1-2 1-44 1-11 1 4 1 47 1-30 1 27 1-9 1 22 1-59 1 32 1 14 1-25 1-15 1 34 1 16 1-34 1 4 1 33 1-56 1 15 1-14 1 50 1-48 1 18 1-24 1 56 1-58 1 51 1-25 1 27 1-43 1 38 1 7 1-47 1-3 1 44 1-24 1 33 1 3 1-56 1 3 1-1 1 29 1 7 1 8 1-23 1 1 1 24 1-21 1-38 1 50 1-53 1 14 1 47 1-14 1-4 1 24 1-69 1 23 1 30 1 14 1-21 1-32 1 1 1 50 1-20 1 23 1-19 1-13h1l1-4 1-24 1 60 1-26 1-32 1 59 1-4 1 5 1-25 1-17 1 13 1 22 1 4 1-62 1-3 1 53 1-3 1-23 1-16 1 33 1 24 1-56 1 6 1 22 1 18 1-26 1-3 1 18 1 21 1-66 1 7 1-5 1 28 1-2 1-17 1 37 1-15 1 23 1 10 1-6 1-31 1 23 1-39 1 26 1-5 1 3 1-18 1 47 1-25 1-30 1-1 1 41 1 3 1-46 1 25 1 23 1-46 1 25 1-28 1 51 1-36 1-4 1 19 1-17 1 30 1-23 1-20 1 21 1-20 1-10 1 57 1 8 1-22 1 23 1-49 1-2 1 17 1-17 1-4 1 61 1-26 1-24 1 48 1-1 1-4 1-2 1-34 1-28 1 30 1 5 1-6 1-1 1 25 1 10 1-36 1-1 1 25 1-2 1 15 1-49 1-4 1-4 1 43 1-7 1-24 1-5 1 11 1 37 1-35 1 12 1-23 1-11 1 18 1-9 1-1 1 16 1 36 1-51 1 44 1-41 1-1 1 28 1 22 1-39 1-9 1 44 1-51 1 13 1-20 1 39 1-27 1 48 1-46 1 29 1 20 1-13 1-48 1 30 1 10 1 10h1l1 11 1 1 1-57 1 54 1-22 1-13 1-25 1 60 1-31 1-26 1 12 1-4 1 21 1 11 1-1 1-18 1-8 1 36 1-41 1 41 1 8 1 2h1l1-6 1-10h1l1-35 1 30 1 23 1-15 1 15 1-21 1-24 1 37 1-14 1-35 1 46 1-50 1 32 1 8 1 7 1 11 1-41 1 1 1 36 1-50 1 23 1-6 1-6 1-4 1 26 1 21 1-32 1-20 1 52 1-7 1-34 1 28 1-16 1-6 1-15 1 6 1-16 1 58 1 4 1-49 1 40 1-13 1-16 1 7 1 28 1-61 1 36 1-37 1 58h1l1-55 1-2 1 16 1 24 1-33 1 60 1-33 1-25 1 28h1l1-26 1 48 1-8 1-39 1 12 1 10 1-6" stroke="#0a0a7a" stroke-width="3" stroke-dasharray="10 2"/>
<path transform="translate(97.5 0) scale(0.78900 1)" vector-effect="non-scaling-stroke" d="M0 436l1 4 1-9 1 5 1-2h1l1 4 1-6 1 7 1 4 1-9 1 4 1-14 1 10 1 4 1 1 1 1 1 2 1-5 1-4 1 8 1 1h2l1-6h1l1 2 1 3 1-5 1-4 1 10 1-2 1-2 1 6 1-3 1-3 1 4 1-7 1 7 1-5 1 4 1-5 1 3 1 7 1-6 1-1 1-2 1 3 1-6 1-5 1-2 1 7 1-1 1 3 1-2 1 2 1-7 1 10 1 4 1-8 1 7 1 2 1-14 1 3 1 2 1 2h1l1-2 1 5 1-18 1 8 1 5 1 3 1 7 1-9 1 4 1-3 1 1 1-6 1-6 1 7 1 3 1-1 1 2 1 2 1-4h1l1 7 1-1 1-4 1 2 1 6 1-13 1 3h1l1-2 1-10 1 9 1 1h1l1 5h1l1-5h1l1-3 1-1 1 6 1-4 1 13h1l1-5 1-8 1-8 1 15 1 5 1-4h1l1 6 1-3 1-7 1-4 1 5 1-1 1-2 1 8 1-7 1-9 1 13 1-8 1-1 1 8 1 5 1-6 1 9 1-6 1-2 1 7 1-1 1-4 1-2 1-4 1 1 1-2 1 6 1-4 1 5 1-4 1 4 1 1 1-1 1 8 1-11 1-4 1 4 1 7 1-2 1 4 1-9 1 6 1-6 1 4 1-1 1 4h1l1-7 1-2 1-2 1 1 1 1 1 3 1 3 1-11 1 1 1 3h1l1-1 1 2 1-1 1 6 1-10 1 9 1-3h1l1 2 1-3h2l1 9 1-5 1 3 1-6 1-4 1 6 1-1 1-5 1 6h1l1-4 1 3 1-3 1-1 1 10 1-6 1 5 1 3 1 3 1-15 1 2 1 2 1 4h1l1-5 1-2 1 11 1-13 1 5 1-2 1 6 1-5 1-2 1-2 1 2 1-2 1 2 1 1 1 7 1-11 1 8 1-1 1 6 1-9 1 4 1 8 1-4 1-1 1-5 1-5 1-1 1 3 1 6h1l1-4 1 3 1-6 1 8 1-4 1 5 1-4 1-3 1 9 1-8h1l1-1 1 6 1 3 1-2 1-2 1-4h1l1 2 1 3 1-1 1-4 1 1 1-5 1 6 1 4 1-6 1 6 1-2 1-5 1 9 1-2 1 2 1 3 1-9 1 4 1-4h1l1-2 1 4 1 3 1-3 1 4 1-4 1-4 1 2 1-7 1 6 1-2 1-5 1 4 1 4h1l1-1h1l1-5 1 6 1-5 1-4h1l1 6 1 6 1-3 1 2 1-1 1-2 1-4 1 5 1 3 1-5 1-15 1 4 1 18h1l1 2 1-2 1-1 1-10 1 9 1 2 1-1 1-1 1-2 1 7 1 5 1-5 1-1 1-7 1-2h1l1 3 1-4h1l1-3 1 4 1 6 1-7 1-4 1 1 1 2 1 1 1 2 1-1 1 4 1-6 1 13 1-4 1-8 1 3 1-1 1 1h1l1-1 1-1 1 3h1l1-7 1-2 1 9h1l1 9 1-18 1 4 1 8 1-9 1 5 1-2 1-2 1-2 1 1 1-6 1 6 1-1 1 1 1 7 1-5 1 7 1 1h1l1-12 1 5h1l1 4 1-5 1 4 1-9 1 6 1 4 1 2 1-3 1 2 1-3 1-3 1 2 1 3 1-1 1-12 1-2 1 12 1-1 1-3 1 7 1 1 1-1 1-5 1 2 1 6 1-1 1 1 1 1 1-9 1-3 1-1 1 12 1-3 1-7 1-1 1 5 1 1 1 1 1-2 1 4 1-5 1-12 1 17 1 2 1-10 1 3 1 3 1 2 1 6 1-14 1-3 1 4 1-1h1l1-5 1 13 1-4 1 8 1-7 1 7 1-9 1-5 1 9 1-4h1l1 8 1-11h1l1-1 1 8 1-9 1 6 1-3 1 8 1 3 1-3 1-4 1 1h1l1-3 1 5 1-8 1-2 1 8 1-3 1-2 1 5 1 8 1-6 1-13 1 8h1l1-3 1-1 1 4h1l1 2 1-9 1 4 1-1 1-2 1 7 1-5 1-5 1 10 1-5 1-1 1-3 1 4 1 5 1 1 1-5 1-1 1-6 1 13 1-3 1 3 1-12 1 10 1-6 1 4 1-2 1 2 1 1h1l1 1 1 4 1-5 1-2 1 2 1-3 1 7 1-1 1-2 1 4 1-15 1 9 1-2 1-9 1 6 1 2 1-6 1 9 1 1 1 3 1 5h1l1-2 1-4 1-1 1-1 1 2 1-3 1 11 1-7 1-8 1 7 1 9h1l1-13h1l1 1 1 4 1-1 1 3 1 1 1 8 1-1 1-12 1 2 1 3 1-6 1 10 1-7 1 2 1 1 1 1 1-2 1 4 1-1 1-12 1 12 1-6 1 2 1-6 1-4 1 8 1 2h1l1 10 1-10 1-8h1l1 14 1-3 1-2 1-2 1-1 1 2 1 8 1-9 1-1 1-11 1 10 1-1 1 1 1-2 1-1 1 2 1 1 1-8 1 7 1 4 1-4 1 2 1-3h1l1 8 1-4 1-6 1 3 1-2 1-1 1 3 1 5 1 3 1-18 1 8 1 12 1-10h1l1 4 1-1 1-6 1 5 1-2 1 10 1-5 1-7 1-5 1 7 1 2h1l1 8 1-19 1 6 1-1 1 7 1 4 1-3 1-1 1 1 1-5 1 1 1 3 1 1 1-7 1 2h1l1-6 1-1 1 13 1-4 1-6 1 8h1l1 3 1-3 1 4 1-1 1-7 1 5 1 2 1-7h1l1 3 1 11 1-11 1-1h1l1 9 1-1 1-8 1 10" stroke="#1e18ff" stroke-width="4"/>
</g>
<line x1="326.5" y1="330" x2="326.5" y2="523" stroke="#fff" stroke-width="2.2" stroke-dasharray="10 2" stroke-dashoffset="7.4"/>
<line x1="460.6" y1="330" x2="460.6" y2="523" stroke="#fff" stroke-width="2.2" stroke-dasharray="10 2" stroke-dashoffset="7.4"/>
<rect x="326.5" y="498.5" width="155" height="26" fill="rgba(0,0,0,0.67)"/>
<text x="330.7" y="516.3" font-size="13" fill="#f2f2f2" text-anchor="start" textLength="146.5" lengthAdjust="spacingAndGlyphs">T1=-7m,5s,774ms,784µs</text>
<rect x="298.6" y="498.5" width="164.5" height="26" fill="rgba(0,0,0,0.67)"/>
<text x="301.6" y="516.3" font-size="13" fill="#f2f2f2" text-anchor="start" textLength="153.5" lengthAdjust="spacingAndGlyphs">T2=-4m,15s,709ms,292µs</text>
<rect x="459.5" y="498.5" width="2.2" height="26" fill="#c4c4c4"/>
<rect x="316.1" y="330" width="155" height="50.9" fill="rgba(0,0,0,0.67)"/>
<text x="320.6" y="360.7" font-size="13" fill="#f2f2f2" text-anchor="start" textLength="22.1" lengthAdjust="spacingAndGlyphs">ΔT=</text>
<text x="345.9" y="350.7" font-size="13" fill="#f2f2f2" text-anchor="start" textLength="120.2" lengthAdjust="spacingAndGlyphs">2m,50s,65ms,492µs</text>
<text x="346.1" y="370.8" font-size="13" fill="#f2f2f2" text-anchor="start" textLength="88.6" lengthAdjust="spacingAndGlyphs">0.00588009 Hz</text>
</g>
<rect x="97" y="330" width="1" height="194" fill="#969696"/>
<rect x="97" y="523" width="525" height="1" fill="#969696"/>
<text x="189.4" y="539.5" font-size="13" fill="#f2f2f2" text-anchor="middle" textLength="30.6" lengthAdjust="spacingAndGlyphs">-10m</text>
<text x="284.1" y="539.5" font-size="13" fill="#f2f2f2" text-anchor="middle" textLength="23.1" lengthAdjust="spacingAndGlyphs">-8m</text>
<text x="378.8" y="539.5" font-size="13" fill="#f2f2f2" text-anchor="middle" textLength="23.1" lengthAdjust="spacingAndGlyphs">-6m</text>
<text x="473.4" y="539.5" font-size="13" fill="#f2f2f2" text-anchor="middle" textLength="23.1" lengthAdjust="spacingAndGlyphs">-4m</text>
<text x="568.1" y="539.5" font-size="13" fill="#f2f2f2" text-anchor="middle" textLength="23.1" lengthAdjust="spacingAndGlyphs">-2m</text>
<g clip-path="url(#ya01)">
<text x="92" y="513.3" font-size="13" fill="#f2f2f2" text-anchor="end">0</text>
<text x="92" y="490" font-size="13" fill="#f2f2f2" text-anchor="end">0.02</text>
<text x="92" y="466.8" font-size="13" fill="#f2f2f2" text-anchor="end">0.04</text>
<text x="92" y="443.5" font-size="13" fill="#f2f2f2" text-anchor="end">0.06</text>
<text x="92" y="420.3" font-size="13" fill="#f2f2f2" text-anchor="end">0.08</text>
<text x="92" y="397" font-size="13" fill="#f2f2f2" text-anchor="end">0.1</text>
<text x="92" y="373.8" font-size="13" fill="#f2f2f2" text-anchor="end">0.12</text>
<text x="92" y="350.5" font-size="13" fill="#f2f2f2" text-anchor="end">0.14</text>
</g>
<text x="360" y="320.6" font-size="12" fill="#f2f2f2" text-anchor="middle" textLength="224" lengthAdjust="spacingAndGlyphs">H1:SQZ-RLF_QPD_B_POWER [s-trend]</text>
<text transform="translate(38.4 427) rotate(-90)" font-size="13" fill="#f2f2f2" text-anchor="middle">V</text>
<g clip-path="url(#c11)">
<rect x="723" y="330" width="1" height="193" fill="#fff" fill-opacity="0.060000000000000005"/>
<rect x="748" y="330" width="1" height="193" fill="#fff" fill-opacity="0.060000000000000005"/>
<rect x="773" y="330" width="1" height="193" fill="#fff" fill-opacity="0.060000000000000005"/>
<rect x="798" y="330" width="1" height="193" fill="#fff" fill-opacity="0.1"/>
<rect x="823" y="330" width="1" height="193" fill="#fff" fill-opacity="0.060000000000000005"/>
<rect x="848" y="330" width="1" height="193" fill="#fff" fill-opacity="0.060000000000000005"/>
<rect x="873" y="330" width="1" height="193" fill="#fff" fill-opacity="0.060000000000000005"/>
<rect x="898" y="330" width="1" height="193" fill="#fff" fill-opacity="0.1"/>
<rect x="923" y="330" width="1" height="193" fill="#fff" fill-opacity="0.060000000000000005"/>
<rect x="948" y="330" width="1" height="193" fill="#fff" fill-opacity="0.060000000000000005"/>
<rect x="973" y="330" width="1" height="193" fill="#fff" fill-opacity="0.060000000000000005"/>
<rect x="999" y="330" width="1" height="193" fill="#fff" fill-opacity="0.1"/>
<rect x="1024" y="330" width="1" height="193" fill="#fff" fill-opacity="0.060000000000000005"/>
<rect x="1049" y="330" width="1" height="193" fill="#fff" fill-opacity="0.060000000000000005"/>
<rect x="1074" y="330" width="1" height="193" fill="#fff" fill-opacity="0.060000000000000005"/>
<rect x="1099" y="330" width="1" height="193" fill="#fff" fill-opacity="0.1"/>
<rect x="1124" y="330" width="1" height="193" fill="#fff" fill-opacity="0.060000000000000005"/>
<rect x="1149" y="330" width="1" height="193" fill="#fff" fill-opacity="0.060000000000000005"/>
<rect x="1174" y="330" width="1" height="193" fill="#fff" fill-opacity="0.060000000000000005"/>
<rect x="1199" y="330" width="1" height="193" fill="#fff" fill-opacity="0.1"/>
<rect x="1224" y="330" width="1" height="193" fill="#fff" fill-opacity="0.060000000000000005"/>
<rect x="1249" y="330" width="1" height="193" fill="#fff" fill-opacity="0.060000000000000005"/>
<rect x="702" y="450" width="555" height="1" fill="#fff" fill-opacity="0.1"/>
<rect x="702" y="371" width="555" height="1" fill="#fff" fill-opacity="0.1"/>
<rect x="702" y="490" width="555" height="1" fill="#fff" fill-opacity="0.065"/>
<rect x="702" y="411" width="555" height="1" fill="#fff" fill-opacity="0.065"/>
<rect x="702" y="331" width="555" height="1" fill="#fff" fill-opacity="0.065"/>
<g shape-rendering="crispEdges" fill="none" stroke-linejoin="miter">
<path transform="translate(701.5 0) scale(0.83559 1)" vector-effect="non-scaling-stroke" d="M0 466h7l1 1 1-1h16l1 1 1-1h5l1 1h1l1-1h29l1 1 1-1h3l1 1 1-1h15l1 1 1-1h18l1 1 1-1h6l1 1 1-1h17l1 1 1-1h7l1 1 1-1h3l1 1 1-1h9l1 1 1-1h8l1 1 1-1h32l1 1h1l1-1 1 1 1-1h32l1 1 1-1 1 1 1-1h16l1 1 1-1h7l1 1 1-1h1l1 1 1-1h22l1 1 1-1h4l1 1 1-1h20l1 1 1-1h8l1 1 1-1h17l1 1 1-1h13l1 1 1-1 1 1 1-1h15l1 1h1l1-1 1 1 1-1h9l1 1 1-1h9l1 1 1-1h11l1 1 1-1h5l1 1 1-1h28l1 1 1-1h20l1 1 1-1h4l1 1 1-1h14l1 2 1 2 1 2h7l1 1 1 5 1 8 1 8 1 8 1 8 1-3 1-2 1-5 1-33 1-37 1-36 1-36 1-8 1 3 1 4 1 13 1 18 1 16 1 16 1 7 1 7 1 6h3l1 1 1-1h1l1 1 1-1 1 1h2l1-1 1 1h11l1-1 1 1h1l1-1h2l1 1h2l1 1 1-1h4l1-1 1 1h56l1 1 1-1h8l1 1 1-1h19" stroke="#7a4a40" stroke-width="2" stroke-dasharray="10 2"/>
<path transform="translate(701.5 0) scale(0.83559 1)" vector-effect="non-scaling-stroke" d="M0 465l1-1 1 1h5l1-1h1l1 1 1-1 1 1h3l1-1h1l1 1h1l1-1 1 1h2l1-1 1 1h8l1-1 1 1h10l1-1 1 1h1l1-1 1 1h3l1-1 1 1 1-1 1 1 1-1h2l1 1h21l1-1 1 1h7l1-1 1 1h3l1-1 1 1 1-1 1 1 1-1 1 1h4l1-1 1 1h2l1-1 1 1 1-1 1 1h3l1-1 1 1h26l1-1 1 1h11l1-1 1 1h5l1-1 1 1h3l1-1 1 1h16l1-1h1l1 1h13l1-1 1 1 1-1h1l1 1h3l1-1 1 1h10l1-1 1 1h7l1-1 1 1h3l1-1 1 1 1-1 1 1h6l1-1 1 1 1-1 1 1h6l1-1 1 1h1l1-1 1 1h6l1-1 1 1h3l1-1 1 1h27l1-1h1l1 1h6l1-1 1 1h7l1-1h1l1 1h3l1-1 1 1h2l1-1 1 1h18l1-1 1 1h3l1-1 1 1h3l1-1 1 1h11l1-1 1 1h9l1-1 1 1h3l1-1 1 1h11l1-1 1 1h7l1-1 1 1h29l1-1 1 1h2l1-1 1 1h21l1-1 1 1h33l1 2 1 2 1 2h7l1 1 1 5 1 8 1 8 1 8 1 8 1-3 1-4 1-3 1-33 1-37 1-39 1-40 1-7 1 8 1 5 1 13 1 17 1 18 1 16 1 6 1 7 1 5 1 1h7l1 1 1-1 1 1 1-1 1 1h1l1-1h8l1 1 1-1h1l1 1h1l1-1h1l1 1 1-1 1 1 1-1 1 1 1-1 1 1h1l1-1 1 1h5l1-1h1l1 1h2l1-1h1l1 1h2l1-1 1 1h3l1-1 1 1 1-1 1 1 1-1h2l1 1h3l1-1 1 1 1-1h4l1 1h2l1-1 1 1h2l1-1h1l1 1h2l1-1 1 1h1l1-1 1 1h10l1-1h1l1 1 1-1h2l1 1h6l1-1 1 1 1-1 1 1h6" stroke="#7a4a40" stroke-width="2" stroke-dasharray="10 2"/>
<path transform="translate(701.5 0) scale(0.83559 1)" vector-effect="non-scaling-stroke" d="M0 465h17l1 1h2l1-1 1 1 1-1h12l1 1 1-1h6l1 1 1-1h1l1 1 1-1h13l1 1 1-1h10l1 1 1-1h17l1 1 1-1h2l1 1 1-1h12l1 1 1-1h7l1 1 1-1h2l1 1 1-1 1 1h1l1-1 1 1 1-1h2l1 1 1-1 1 1 1-1h4l1 1h1l1-1h5l1 1 1-1 1 1 1-1h13l1 1h1l1-1h4l1 1h1l1-1h6l1 1 1-1h5l1 1 1-1h4l1 1 1-1h1l1 1h2l1-1 1 1 1-1h15l1 1 1-1h5l1 1 1-1h10l1 1 1-1h1l1 1h1l1-1h3l1 1h3l1-1 1 1h1l1-1h4l1 1h1l1-1h1l1 1h2l1-1h1l1 1h1l1-1h1l1 1 1-1h1l1 1 1-1 1 1h2l1-1 1 1 1-1h5l1 1 1-1 1 1h5l1-1h2l1 1 1-1 1 1h6l1-1h5l1 1 1-1h2l1 1 1-1h1l1 1 1-1h3l1 1 1-1h1l1 1 1-1h11l1 1h2l1-1 1 1 1-1h3l1 1h2l1-1h5l1 1h1l1-1h1l1 1h1l1-1h4l1 1h8l1-1 1 1h1l1-1h2l1 1 1-1h2l1 1 1-1 1 1h3l1-1h1l1 1 1-1 1 1h1l1-1 1 1h3l1-1 1 1h1l1-1 1 1 1-1 1 1 1-1 1 1 1-1h3l1 1 1-1 1 1h3l1-1h4l1 1 1-1 1 1 1-1h2l1 1h1l1-1h1l1 1 1-1h1l1 1h1l1-1h1l1 1 1-1h3l1 1 1-1h3l1 1h4l1-1 1 1h3l1-1 1 1h1l1-1 1 1h2l1-1h1l1 1h1l1-1 1 1 1-1h1l1 1h7l1-1h2l1 1h1l1-1 1 1h3l1-1h1l1 1h2l1 1 1 2 1 2h4l1 1h3l1 6 1 7 1 8 1 8 1 8 1-2 1-4 1-4 1-33 1-36 1-37 1-36 1-8 1 4 1 3 1 14 1 17 1 17 1 16 1 7 1 6 1 6h1l1 1h107l1 1 1-1h17" stroke="#9c6356" stroke-width="3.6"/>
</g>
<line x1="944" y1="330" x2="944" y2="523" stroke="#fff" stroke-width="2.2" stroke-dasharray="10 2" stroke-dashoffset="7.4"/>
<line x1="1086.1" y1="330" x2="1086.1" y2="523" stroke="#fff" stroke-width="2.2" stroke-dasharray="10 2" stroke-dashoffset="7.4"/>
<rect x="944" y="498.5" width="155" height="26" fill="rgba(0,0,0,0.67)"/>
<text x="948.2" y="516.3" font-size="13" fill="#f2f2f2" text-anchor="start" textLength="146.5" lengthAdjust="spacingAndGlyphs">T1=-7m,5s,774ms,784µs</text>
<rect x="924.1" y="498.5" width="164.5" height="26" fill="rgba(0,0,0,0.67)"/>
<text x="927.1" y="516.3" font-size="13" fill="#f2f2f2" text-anchor="start" textLength="153.5" lengthAdjust="spacingAndGlyphs">T2=-4m,15s,709ms,292µs</text>
<rect x="1085" y="498.5" width="2.2" height="26" fill="#c4c4c4"/>
<rect x="937.5" y="330" width="155" height="50.9" fill="rgba(0,0,0,0.67)"/>
<text x="942" y="360.7" font-size="13" fill="#f2f2f2" text-anchor="start" textLength="22.1" lengthAdjust="spacingAndGlyphs">ΔT=</text>
<text x="967.3" y="350.7" font-size="13" fill="#f2f2f2" text-anchor="start" textLength="120.2" lengthAdjust="spacingAndGlyphs">2m,50s,65ms,492µs</text>
<text x="967.5" y="370.8" font-size="13" fill="#f2f2f2" text-anchor="start" textLength="88.6" lengthAdjust="spacingAndGlyphs">0.00588009 Hz</text>
</g>
<rect x="701" y="330" width="1" height="194" fill="#969696"/>
<rect x="701" y="523" width="556" height="1" fill="#969696"/>
<text x="798.8" y="539.5" font-size="13" fill="#f2f2f2" text-anchor="middle" textLength="30.6" lengthAdjust="spacingAndGlyphs">-10m</text>
<text x="899.1" y="539.5" font-size="13" fill="#f2f2f2" text-anchor="middle" textLength="23.1" lengthAdjust="spacingAndGlyphs">-8m</text>
<text x="999.4" y="539.5" font-size="13" fill="#f2f2f2" text-anchor="middle" textLength="23.1" lengthAdjust="spacingAndGlyphs">-6m</text>
<text x="1099.6" y="539.5" font-size="13" fill="#f2f2f2" text-anchor="middle" textLength="23.1" lengthAdjust="spacingAndGlyphs">-4m</text>
<text x="1199.9" y="539.5" font-size="13" fill="#f2f2f2" text-anchor="middle" textLength="23.1" lengthAdjust="spacingAndGlyphs">-2m</text>
<g clip-path="url(#ya11)">
<text x="696" y="495.7" font-size="13" fill="#f2f2f2" text-anchor="end">-470</text>
<text x="696" y="455.9" font-size="13" fill="#f2f2f2" text-anchor="end">-460</text>
<text x="696" y="416.1" font-size="13" fill="#f2f2f2" text-anchor="end">-450</text>
<text x="696" y="376.3" font-size="13" fill="#f2f2f2" text-anchor="end">-440</text>
<text x="696" y="336.6" font-size="13" fill="#f2f2f2" text-anchor="end">-430</text>
</g>
<text x="979.5" y="320.6" font-size="12" fill="#f2f2f2" text-anchor="middle" textLength="263" lengthAdjust="spacingAndGlyphs">H1:SUS-ZM2_M1_DAMP_P_INMON [s-trend]</text>
<text transform="translate(643.4 427) rotate(-90)" font-size="13" fill="#f2f2f2" text-anchor="middle" textLength="40.6" lengthAdjust="spacingAndGlyphs">counts</text>
<g clip-path="url(#c21)">
<rect x="1356" y="330" width="1" height="193" fill="#fff" fill-opacity="0.060000000000000005"/>
<rect x="1379" y="330" width="1" height="193" fill="#fff" fill-opacity="0.060000000000000005"/>
<rect x="1403" y="330" width="1" height="193" fill="#fff" fill-opacity="0.060000000000000005"/>
<rect x="1427" y="330" width="1" height="193" fill="#fff" fill-opacity="0.1"/>
<rect x="1450" y="330" width="1" height="193" fill="#fff" fill-opacity="0.060000000000000005"/>
<rect x="1474" y="330" width="1" height="193" fill="#fff" fill-opacity="0.060000000000000005"/>
<rect x="1498" y="330" width="1" height="193" fill="#fff" fill-opacity="0.060000000000000005"/>
<rect x="1521" y="330" width="1" height="193" fill="#fff" fill-opacity="0.1"/>
<rect x="1545" y="330" width="1" height="193" fill="#fff" fill-opacity="0.060000000000000005"/>
<rect x="1569" y="330" width="1" height="193" fill="#fff" fill-opacity="0.060000000000000005"/>
<rect x="1592" y="330" width="1" height="193" fill="#fff" fill-opacity="0.060000000000000005"/>
<rect x="1616" y="330" width="1" height="193" fill="#fff" fill-opacity="0.1"/>
<rect x="1640" y="330" width="1" height="193" fill="#fff" fill-opacity="0.060000000000000005"/>
<rect x="1663" y="330" width="1" height="193" fill="#fff" fill-opacity="0.060000000000000005"/>
<rect x="1687" y="330" width="1" height="193" fill="#fff" fill-opacity="0.060000000000000005"/>
<rect x="1711" y="330" width="1" height="193" fill="#fff" fill-opacity="0.1"/>
<rect x="1734" y="330" width="1" height="193" fill="#fff" fill-opacity="0.060000000000000005"/>
<rect x="1758" y="330" width="1" height="193" fill="#fff" fill-opacity="0.060000000000000005"/>
<rect x="1782" y="330" width="1" height="193" fill="#fff" fill-opacity="0.060000000000000005"/>
<rect x="1805" y="330" width="1" height="193" fill="#fff" fill-opacity="0.1"/>
<rect x="1829" y="330" width="1" height="193" fill="#fff" fill-opacity="0.060000000000000005"/>
<rect x="1853" y="330" width="1" height="193" fill="#fff" fill-opacity="0.060000000000000005"/>
<rect x="1336" y="344" width="524" height="1" fill="#fff" fill-opacity="0.1"/>
<rect x="1336" y="489" width="524" height="1" fill="#fff" fill-opacity="0.065"/>
<rect x="1336" y="441" width="524" height="1" fill="#fff" fill-opacity="0.065"/>
<rect x="1336" y="392" width="524" height="1" fill="#fff" fill-opacity="0.065"/>
<rect x="1336" y="514" width="524" height="1" fill="#fff" fill-opacity="0.05"/>
<rect x="1336" y="465" width="524" height="1" fill="#fff" fill-opacity="0.05"/>
<rect x="1336" y="416" width="524" height="1" fill="#fff" fill-opacity="0.05"/>
<rect x="1336" y="368" width="524" height="1" fill="#fff" fill-opacity="0.05"/>
<g shape-rendering="crispEdges" fill="none" stroke-linejoin="miter">
<path transform="translate(1335.5 0) scale(0.78900 1)" vector-effect="non-scaling-stroke" d="M0 450h1l1 1 1-1 1 1h2l1-1h3l1 1 1-1h3l1 1 1-1h1l1 1h1l1-1h1l1 1 1-1h5l1 1h1l1-1 1 1 1-1h3l1 1 1-1 1 1 1-1h5l1 1 1-1 1 1 1-1h1l1 1 1-1h2l1 1 1-1 1 1 1-1h3l1 1 1-1 1 1 1-1h4l1 1 1-1h8l1 1 1-1 1 1 1-1h4l1 1 1-1h1l1 1 1-1h1l1 1 1-1h15l1 1 1-1h12l1 1 1-1h2l1 1h1l1-1h4l1 1 1-1h44l1-1 1 1h1l1-1 1 1h3l1-1h2l1 1 1-1 1 1 1-1h5l1 1 1-1h2l1 1h1l1-1h4l1 1h1l1-1h1l1 1 1-1 1 1h1l1-1h11l1 1 1-1h14l1 1 1-1h25l1 1 1-1h1l1 1 1-1h9l1 1 1-1 1 1 1-1 1 1 1-1h2l1 1h3l1-1 1 1h1l1-1 1 1h34l1 1 1-1h1l1 1 1-1h18l1 1 1-1h29l1-1h2l1 1 1-1 1 1h3l1-1 1 1 1-1 1 1 1-1h3l1 1 1-1 1 1h1l1-1h2l1 1 1-1h9l1 1 1-1 1 1 1-1 1 1h1l1-1 1 1 1-1h17l1 1 1-1h4l1 1 1-1h25l1-1 1 1h5l1-1 1 1h1l1-1 1 1h2l1-1 1 1h1l1-1 1 1h2l1-2h2l1-1 1-2 1-5 1-4 1-4 1-1 1-1h1l1 3 1 12 1 10 1 11 1 12 1 10 1 12 1 9 1-3 1-4 1-6 1-7 1-7 1-7 1-7 1-1h1l1-1h4l1-1h1l1-4 1-11 1-12 1-11 1-13 1-12 1-12 1-12 1-12 1-12 1-4 1-1h29l1 1 1-1h4l1 1 1-1h7l1 1 1-1h2l1 1 1-1h1l1 1 1-1h1l1 1 1-1 1 1 1-1h3l1 1h1l1-1 1 1 1-1h10l1-1 1 1 1-1h7l1-1h1l1 1 1-1 1 1h2l1-1h2l1 1h1l1-1 1 1h9" stroke="#b85f9e" stroke-width="2" stroke-dasharray="10 2"/>
<path transform="translate(1335.5 0) scale(0.78900 1)" vector-effect="non-scaling-stroke" d="M0 449h3l1-1 1 1h16l1-1h1l1 1h4l1-1 1 1h3l1-1 1 1h17l1-1 1 1h2l1-1 1 1h6l1-1h1l1 1 1-1 1 1 1-1h1l1 1h2l1-1h1l1 1h5l1-1h1l1 1h6l1-1 1 1h8l1-1 1 1 1-1 1 1h5l1-1 1 1 1-1h2l1 1h2l1-1 1 1h1l1-1 1 1h2l1-1 1 1h2l1-1h1l1 1h2l1-1h3l1 1h4l1-1h1l1 1 1-1 1 1h3l1-1h2l1 1h1l1-1h2l1 1 1-1 1-1 1 2 1-1h9l1-1 1 1h20l1-1 1 1h12l1-1 1 1h1l1-1 1 1h3l1-1 1 1h6l1-1 1 1h6l1-1 1 1h6l1-1 1 1 1-1 1 1h2l1-1h1l1 1h5l1-1 1 1h1l1-1 1 1h2l1-1 1 1h6l1-1h2l1 1h3l1-1 1 1h22l1-1 1 1h8l1-1 1 1h17l1 1 1-1 1 1 1-1h1l1 1 1-1 1 1 1-1h3l1 1 1-1 1 1h1l1-1h2l1 1 1-1 1 1 1-1 1 1h5l1-1 1 1 1-1h1l1 1 1-1 1 1 1-1 1 1 1-1h5l1 1 1-1h24l1-1 1 1h3l1-1 1 1h19l1-1 1 1h1l1-1h1l1 1h2l1-1 1 1h1l1-1 1 1h1l1-1 1 1 1-1 1 1h7l1-1h1l1 1 1-1 1 1 1-1h3l1 1 1-1h3l1 1h3l1-1h1l1 1 1-1h4l1 1 1-1h2l1 1 1-1h1l1-1 1 1h24l1-1h1l1-1 1-1 1-2 1-4 1-5 1-4 1-1h2l1 2 1 12 1 11 1 11 1 11 1 11 1 11 1 10 1-4 1-3 1-7 1-7 1-7 1-7 1-6 1-2h3l1-1h3l1-2 1-2 1-12 1-12 1-12 1-11 1-13 1-12 1-12 1-12 1-12 1-4h2l1-1h1l1 1 1-1 1 1h1l1-1 1 1 1-1h2l1 1 1-1h3l1 1h1l1-1 1 1 1-1 1 1 1-1 1 1 1-1 1 1 1-1h1l1 1h9l1-1 1 1h1l1-1 1 1h1l1-1 1 1h1l1-1 1 1h3l1-1 1 1 1-1 1 1h7l1-1 1 1 1-1 1 1 1-1 1 1 1-1 1 1 1-1h7l1-1 1 1h1l1-1h25" stroke="#b85f9e" stroke-width="2" stroke-dasharray="10 2"/>
<path transform="translate(1335.5 0) scale(0.78900 1)" vector-effect="non-scaling-stroke" d="M0 450h4l1-1 1 1h2l1-1h1l1 1h9l1-1h3l1 1 1-1 1 1h8l1-1 1 1h2l1-1 1 1 1-1 1 1h2l1-1 1 1 1-1 1 1h2l1-1 1 1h1l1-1h3l1 1 1-1h1l1 1h3l1-1 1 1 1-1h1l1 1 1-1h2l1 1 1-1h2l1 1h4l1-1h2l1 1 1-1h3l1 1 1-1 1 1 1-1 1 1 1-1 1 1 1-1 1 1 1-1h5l1 1h4l1-1h8l1 1 1-1h1l1 1 1-1h14l1 1 1-1h1l1 1 1-1h1l1 1 1-1h2l1 1 1-1h14l1-1 1 1h7l1 1 1-1h4l1 1 1-1h3l1-1 1 1h4l1-1 1 1h8l1-1 1 1 1-1 1 1h2l1-1 1 1h7l1-1h5l1 1h2l1-1h4l1 1 1-1 1 1 1-1h6l1 1 1-1h1l1 1 1-1h8l1 1h2l1-1h4l1 1h2l1-1h2l1 1h1l1-1h1l1 1 1-1h1l1 1h8l1-1h2l1 1h4l1-1h1l1 1 1-1 1 1h30l1 1 1-1h13l1 1 1-1h3l1 1 1-1h1l1 1 1-1h35l1-1 1 1h1l1-1 1 1h6l1 1h1l1-1h6l1-1 1 1h3l1-1 1 1h6l1-1h1l1 1h1l1-1h1l1 1 1-1h1l1 1h1l1-1h1l1 1h4l1-1 1 1h1l1-1 1 1 1-1h2l1 1h1l1-1h5l1 1 1-1 1 1 1-1h4l1 1 1-1h3l1 1 1-1h4l1 1 1-1 1 1h2l1-1h21l1 1 1-1h2l1-1h1l1 1h4l1-1h1l1-1h1l1-1 1-2 1-4 1-5 1-4 1-1h2l1 3 1 10 1 11 1 11 1 12 1 11 1 11 1 9 1-2 1-4 1-7 1-7 1-7 1-7 1-7 1-1h1l1-1h3l1-1h2l1-3 1-12 1-11 1-13 1-12 1-11 1-12 1-13 1-12 1-12 1-4h2l1-1h7l1 1h1l1-1h8l1 1 1-1h10l1 1h1l1-1h2l1 1 1-1 1 1 1-1h2l1 1 1-1h9l1 1h2l1-1h2l1 1h2l1-1 1 1h1l1-1 1 1h1l1-1h13l1-1h14l1-1 1 1 1-1 1 1h5l1-1 1 1" stroke="#e277c2" stroke-width="4"/>
</g>
<line x1="1564.5" y1="330" x2="1564.5" y2="523" stroke="#fff" stroke-width="2.2" stroke-dasharray="10 2" stroke-dashoffset="7.4"/>
<line x1="1698.6" y1="330" x2="1698.6" y2="523" stroke="#fff" stroke-width="2.2" stroke-dasharray="10 2" stroke-dashoffset="7.4"/>
<rect x="1564.5" y="498.5" width="155" height="26" fill="rgba(0,0,0,0.67)"/>
<text x="1568.7" y="516.3" font-size="13" fill="#f2f2f2" text-anchor="start" textLength="146.5" lengthAdjust="spacingAndGlyphs">T1=-7m,5s,774ms,784µs</text>
<rect x="1536.6" y="498.5" width="164.5" height="26" fill="rgba(0,0,0,0.67)"/>
<text x="1539.6" y="516.3" font-size="13" fill="#f2f2f2" text-anchor="start" textLength="153.5" lengthAdjust="spacingAndGlyphs">T2=-4m,15s,709ms,292µs</text>
<rect x="1697.5" y="498.5" width="2.2" height="26" fill="#c4c4c4"/>
<rect x="1554.1" y="330" width="155" height="50.9" fill="rgba(0,0,0,0.67)"/>
<text x="1558.6" y="360.7" font-size="13" fill="#f2f2f2" text-anchor="start" textLength="22.1" lengthAdjust="spacingAndGlyphs">ΔT=</text>
<text x="1583.9" y="350.7" font-size="13" fill="#f2f2f2" text-anchor="start" textLength="120.2" lengthAdjust="spacingAndGlyphs">2m,50s,65ms,492µs</text>
<text x="1584.1" y="370.8" font-size="13" fill="#f2f2f2" text-anchor="start" textLength="88.6" lengthAdjust="spacingAndGlyphs">0.00588009 Hz</text>
</g>
<rect x="1335" y="330" width="1" height="194" fill="#969696"/>
<rect x="1335" y="523" width="525" height="1" fill="#969696"/>
<text x="1427.4" y="539.5" font-size="13" fill="#f2f2f2" text-anchor="middle" textLength="30.6" lengthAdjust="spacingAndGlyphs">-10m</text>
<text x="1522.1" y="539.5" font-size="13" fill="#f2f2f2" text-anchor="middle" textLength="23.1" lengthAdjust="spacingAndGlyphs">-8m</text>
<text x="1616.8" y="539.5" font-size="13" fill="#f2f2f2" text-anchor="middle" textLength="23.1" lengthAdjust="spacingAndGlyphs">-6m</text>
<text x="1711.4" y="539.5" font-size="13" fill="#f2f2f2" text-anchor="middle" textLength="23.1" lengthAdjust="spacingAndGlyphs">-4m</text>
<text x="1806.1" y="539.5" font-size="13" fill="#f2f2f2" text-anchor="middle" textLength="23.1" lengthAdjust="spacingAndGlyphs">-2m</text>
<g clip-path="url(#ya21)">
<text x="1330" y="494.8" font-size="13" fill="#f2f2f2" text-anchor="end">34</text>
<text x="1330" y="446.3" font-size="13" fill="#f2f2f2" text-anchor="end">36</text>
<text x="1330" y="397.8" font-size="13" fill="#f2f2f2" text-anchor="end">38</text>
<text x="1330" y="349.2" font-size="13" fill="#f2f2f2" text-anchor="end">40</text>
</g>
<text x="1598" y="320.6" font-size="12" fill="#f2f2f2" text-anchor="middle" textLength="263" lengthAdjust="spacingAndGlyphs">H1:SUS-ZM2_M1_DAMP_Y_INMON [s-trend]</text>
<text transform="translate(1277.4 427) rotate(-90)" font-size="13" fill="#f2f2f2" text-anchor="middle" textLength="40.6" lengthAdjust="spacingAndGlyphs">counts</text>
<g clip-path="url(#c31)">
<rect x="1960" y="330" width="1" height="193" fill="#fff" fill-opacity="0.060000000000000005"/>
<rect x="1983" y="330" width="1" height="193" fill="#fff" fill-opacity="0.060000000000000005"/>
<rect x="2007" y="330" width="1" height="193" fill="#fff" fill-opacity="0.060000000000000005"/>
<rect x="2031" y="330" width="1" height="193" fill="#fff" fill-opacity="0.1"/>
<rect x="2054" y="330" width="1" height="193" fill="#fff" fill-opacity="0.060000000000000005"/>
<rect x="2078" y="330" width="1" height="193" fill="#fff" fill-opacity="0.060000000000000005"/>
<rect x="2102" y="330" width="1" height="193" fill="#fff" fill-opacity="0.060000000000000005"/>
<rect x="2125" y="330" width="1" height="193" fill="#fff" fill-opacity="0.1"/>
<rect x="2149" y="330" width="1" height="193" fill="#fff" fill-opacity="0.060000000000000005"/>
<rect x="2173" y="330" width="1" height="193" fill="#fff" fill-opacity="0.060000000000000005"/>
<rect x="2196" y="330" width="1" height="193" fill="#fff" fill-opacity="0.060000000000000005"/>
<rect x="2220" y="330" width="1" height="193" fill="#fff" fill-opacity="0.1"/>
<rect x="2244" y="330" width="1" height="193" fill="#fff" fill-opacity="0.060000000000000005"/>
<rect x="2267" y="330" width="1" height="193" fill="#fff" fill-opacity="0.060000000000000005"/>
<rect x="2291" y="330" width="1" height="193" fill="#fff" fill-opacity="0.060000000000000005"/>
<rect x="2315" y="330" width="1" height="193" fill="#fff" fill-opacity="0.1"/>
<rect x="2338" y="330" width="1" height="193" fill="#fff" fill-opacity="0.060000000000000005"/>
<rect x="2362" y="330" width="1" height="193" fill="#fff" fill-opacity="0.060000000000000005"/>
<rect x="2386" y="330" width="1" height="193" fill="#fff" fill-opacity="0.060000000000000005"/>
<rect x="2409" y="330" width="1" height="193" fill="#fff" fill-opacity="0.1"/>
<rect x="2433" y="330" width="1" height="193" fill="#fff" fill-opacity="0.060000000000000005"/>
<rect x="2457" y="330" width="1" height="193" fill="#fff" fill-opacity="0.060000000000000005"/>
<rect x="1940" y="521" width="524" height="1" fill="#fff" fill-opacity="0.065"/>
<rect x="1940" y="454" width="524" height="1" fill="#fff" fill-opacity="0.065"/>
<rect x="1940" y="386" width="524" height="1" fill="#fff" fill-opacity="0.065"/>
<rect x="1940" y="488" width="524" height="1" fill="#fff" fill-opacity="0.05"/>
<rect x="1940" y="420" width="524" height="1" fill="#fff" fill-opacity="0.05"/>
<rect x="1940" y="352" width="524" height="1" fill="#fff" fill-opacity="0.05"/>
<g shape-rendering="crispEdges" fill="none" stroke-linejoin="miter">
<path transform="translate(1939.5 0) scale(0.78900 1)" vector-effect="non-scaling-stroke" d="M0 510h5l1-1 1 1h2l1-1 1 1h2l1-1h1l1 1h2l1-1 1 1h2l1-1 1 1 1-1 1 1 1-1 1 1h1l1-1h2l1 1 1-1 1 1h2l1-1 1 1 1-1h2l1 1h1l1-1 1 1h2l1-1h1l1 1h2l1-1h1l1 1h1l1-1 1 1h1l1-1 1 1 1-1h2l1 1h3l1-1 1 1h3l1-1 1 1 1-1 1 1 1-1h1l1 1h1l1-1 1 1h3l1-1 1 1 1-1h1l1 1h1l1-1 1 1 1-1h2l1 1 1-1h1l1 1h1l1-1h1l1 1h1l1-1 1 1h1l1-1h2l1 1h1l1-1 1 1 1-1h1l1 1 1-1 1 1h1l1-1 1 1h3l1-1 1 1h18l1-1h3l1 1 1-1h1l1 1 1-1 1 1h4l1-1 1 1h2l1-1 1 1h1l1-1h2l1 1 1-1 1 1h2l1-1h1l1 1 1-1 1 1h1l1-1 1 1 1-1h1l1 1h4l1-1h1l1 1h1l1-1 1 1h1l1-1 1 1 1-1h1l1 1 1-1 1 1h1l1-1 1 1h1l1-1 1 1 1-1h1l1 1h5l1-1 1 1 1-1 1 1h3l1-1 1 1 1-1h1l1 1h1l1-1h1l1 1h1l1-1 1 1h2l1-1 1 2 1-1h3l1-1h1l1 1h1l1-1 1 1 1-1h2l1 1h1l1-1 1 1 1-1 1 1h1l1-1 1 1 1-1h1l1 1h3l1-1h1l1 1h3l1-1h1l1 1h7l1-1h5l1 1h6l1-1 1 1h1l1-1h1l1 1 1-1h3l1 1h3l1-1h3l1 1 1-1 1 1h2l1-1h1l1 1 1-1 1 1 1-1h1l1 1h1l1-1 1 1h3l1-1 1 1h2l1-1h1l1 1h4l1-1 1 1h4l1-1 1 1 1-1h1l1 1 1-1 1 1 1-1h1l1 1h1l1-1 1 1h1l1-1h2l1 1h2l1-1 1 1h1l1-1 1 1h5l1-1h2l1 1h3l1-1 1 1h4l1-1 1 1 1-1h1l1 1h1l1-1h2l1 1 1-1 1 1h1l1-1h1l1 1h6l1-1 1 1 1-1h1l1 1 1-1 1 1h2l1-1 1 1h2l1-1h1l1 1 1-1 1 1h1l1-1 1 1h1l1-1 1 1 1-1 1 1h3l1-1 1 1h5l1-1 1 1h1l1-1 1 1 1-1 1 1 1-1 1 1 1-1 1 1h1l1-1 1 1 1-1h1l1 1 1-1 1 1h1l1-1h3l1 1 1-1 1 1 1-1h1l1 1 1-1 1 1h1l1-1h2l1 1h6l1-1 1 1 1-1 1 1h4l1-1h1l1 1h2l1-1 1 1h2l1-1 1 1h1l1-1h7l1 1h1l1-1h1l1 1 1-1 1 1h1l1-1h2l1 1 1-1h5l1 1h1l1-1 1 1h1l1-1 1 1 1-1h1l1 1h3l1-1h4l1 1h4l1-1 1 1 1-1h1l1 1 1-1 1 1 1-1 1 1h3l1-1 1 1h3l1-1 1 1 1-1 1 1h2l1-1 1 1 1-1h1l1 1 1-1h1l1-5 1-50 1-51 1-26 1-14 1-1 1 1 1 2h1l1 4 1 30 1 31 1 32 1 32 1 11 1-2 1-10 1-9 1-5 1-2 1-1h33l1 1 1-1 1 1 1-1h11" stroke="#5e5e5e" stroke-width="2" stroke-dasharray="10 2"/>
<path transform="translate(1939.5 0) scale(0.78900 1)" vector-effect="non-scaling-stroke" d="M0 508h2l1 1 1-1 1 1 1-1h4l1 1 1-1 1 1h1l1-1 1 1 1-1 1 1h2l1-1 1 1 1-1 1 1h2l1-1h8l1 1 1-1 1 1 1-1h3l1 1 1-1h1l1 1 1-1h1l1 1 1-1h3l1 1 1-1h2l1 1h1l1-1h1l1 1 1-1h6l1 1 1-1h1l1 1 1-1h1l1 1h1l1-1h5l1 1 1-1h4l1 1 1-1h8l1 1h1l1-1h1l1 1 1-1h2l1 1h1l1-1h3l1 1 1-1 1 1h2l1-1 1 1 1-1h6l1 1h3l1-1h5l1 1 1-1h1l1 1 1-1h3l1 1h1l1-1h3l1 1 1-1 1 1 1-1h1l1 1h2l1-1h6l1 1 1-1h2l1 1 1-1h2l1 1 1-1h1l1 1h1l1-1h6l1 1 1-1h2l1 1h1l1-1 1 1 1-1h5l1 1 1-1 1 1 1-1h1l1 1 1-1h8l1 1h1l1-1 1 1 1-1h4l1 1 1-1h1l1 1 1-1h4l1 1 1-1h4l1 1 1-1h4l1 1 1-1 1 1h3l1-1h3l1 1h1l1-1h1l1 1h1l1-1h4l1 1h3l1-1h1l1 1 1-1h2l1 1 1-1 1 1 1-1h3l1 1 1-1 1 1 1-1 1 1h1l1-1 1 1 1-1h3l1 1 1-1h2l1 1 1-1h19l1 1h1l1-1 1 1 1-1h4l1 1 1-1h11l1 1h1l1-1 1 1h2l1-1h3l1 1 1-1h3l1 1h1l1-1h1l1 1 1-1h6l1 1 1-1h9l1 1 1-1 1 1h1l1-1h3l1 1 1-1h7l1 1 1-1h3l1 1 1-1h1l1 1 1-1h1l1 1 1-1h2l1 1h3l1-1h1l1 1 1-1h5l1 1 1-1h3l1 1 1-1h5l1 1 1-1 1 1 1-1h1l1 1 1-1h8l1 1 1-1h2l1 1 1-1h1l1 1 1-1 1 1 1-1h6l1 1 1-1 1 1h2l1-1h2l1 1 1-1h3l1 1 1-1h3l1 1 1-1h5l1 1 1-1 1 1 1-1h2l1 1 1-1 1 1h1l1-1h3l1 1 1-1 1 1 1-1h1l1 1 1-1h2l1 1 1-1h4l1 1 1-1 1 1 1-1h14l1 1 1-1h9l1 1 1-1h5l1 1 1-1 1 1 1-1 1 1 1-1h7l1 1 1-1h3l1 1 1-1h2l1 1 1-1h2l1 1 1-1h4l1 1h1l1-1h3l1-5 1-51 1-50 1-32 1-24 1 7 1 9 1 1 1 1 1 4 1 30 1 31 1 32 1 31 1 12 1-3 1-10 1-9 1-4 1-2 1-1h6l1-1 1 1h5l1-1h2l1 1 1-1 1 1h5l1-1h2l1 1 1-1 1 1 1-1 1 1h4l1-1 1 1h3l1-1h2l1 1 1-1 1 1 1-1" stroke="#5e5e5e" stroke-width="2" stroke-dasharray="10 2"/>
<path transform="translate(1939.5 0) scale(0.78900 1)" vector-effect="non-scaling-stroke" d="M0 509h597l1-5 1-51 1-51 1-25 1-14 1-1 1 1 1 1h1l1 4 1 31 1 31 1 31 1 32 1 11 1-2 1-10 1-10 1-4 1-1 1-2h10l1 1 1-1h16l1 1 1-1h18" stroke="#808080" stroke-width="3.6"/>
</g>
<line x1="2168.5" y1="330" x2="2168.5" y2="523" stroke="#fff" stroke-width="2.2" stroke-dasharray="10 2" stroke-dashoffset="7.4"/>
<line x1="2302.6" y1="330" x2="2302.6" y2="523" stroke="#fff" stroke-width="2.2" stroke-dasharray="10 2" stroke-dashoffset="7.4"/>
<rect x="2168.5" y="498.5" width="155" height="26" fill="rgba(0,0,0,0.67)"/>
<text x="2172.7" y="516.3" font-size="13" fill="#f2f2f2" text-anchor="start" textLength="146.5" lengthAdjust="spacingAndGlyphs">T1=-7m,5s,774ms,784µs</text>
<rect x="2140.6" y="498.5" width="164.5" height="26" fill="rgba(0,0,0,0.67)"/>
<text x="2143.6" y="516.3" font-size="13" fill="#f2f2f2" text-anchor="start" textLength="153.5" lengthAdjust="spacingAndGlyphs">T2=-4m,15s,709ms,292µs</text>
<rect x="2301.5" y="498.5" width="2.2" height="26" fill="#c4c4c4"/>
<rect x="2158.1" y="330" width="155" height="50.9" fill="rgba(0,0,0,0.67)"/>
<text x="2162.6" y="360.7" font-size="13" fill="#f2f2f2" text-anchor="start" textLength="22.1" lengthAdjust="spacingAndGlyphs">ΔT=</text>
<text x="2187.9" y="350.7" font-size="13" fill="#f2f2f2" text-anchor="start" textLength="120.2" lengthAdjust="spacingAndGlyphs">2m,50s,65ms,492µs</text>
<text x="2188.1" y="370.8" font-size="13" fill="#f2f2f2" text-anchor="start" textLength="88.6" lengthAdjust="spacingAndGlyphs">0.00588009 Hz</text>
</g>
<rect x="1939" y="330" width="1" height="194" fill="#969696"/>
<rect x="1939" y="523" width="525" height="1" fill="#969696"/>
<text x="2031.4" y="539.5" font-size="13" fill="#f2f2f2" text-anchor="middle" textLength="30.6" lengthAdjust="spacingAndGlyphs">-10m</text>
<text x="2126.1" y="539.5" font-size="13" fill="#f2f2f2" text-anchor="middle" textLength="23.1" lengthAdjust="spacingAndGlyphs">-8m</text>
<text x="2220.8" y="539.5" font-size="13" fill="#f2f2f2" text-anchor="middle" textLength="23.1" lengthAdjust="spacingAndGlyphs">-6m</text>
<text x="2315.4" y="539.5" font-size="13" fill="#f2f2f2" text-anchor="middle" textLength="23.1" lengthAdjust="spacingAndGlyphs">-4m</text>
<text x="2410.1" y="539.5" font-size="13" fill="#f2f2f2" text-anchor="middle" textLength="23.1" lengthAdjust="spacingAndGlyphs">-2m</text>
<g clip-path="url(#ya31)">
<text x="1934" y="526.9" font-size="13" fill="#f2f2f2" text-anchor="end">-480</text>
<text x="1934" y="493.1" font-size="13" fill="#f2f2f2" text-anchor="end">-470</text>
<text x="1934" y="459.4" font-size="13" fill="#f2f2f2" text-anchor="end">-460</text>
<text x="1934" y="425.6" font-size="13" fill="#f2f2f2" text-anchor="end">-450</text>
<text x="1934" y="391.8" font-size="13" fill="#f2f2f2" text-anchor="end">-440</text>
<text x="1934" y="358" font-size="13" fill="#f2f2f2" text-anchor="end">-430</text>
</g>
<text x="2202" y="320.6" font-size="12" fill="#f2f2f2" text-anchor="middle" textLength="263" lengthAdjust="spacingAndGlyphs">H1:SUS-ZM3_M1_DAMP_P_INMON [s-trend]</text>
<text transform="translate(1881.4 427) rotate(-90)" font-size="13" fill="#f2f2f2" text-anchor="middle" textLength="40.6" lengthAdjust="spacingAndGlyphs">counts</text>
<g clip-path="url(#c02)">
<rect x="118" y="581" width="1" height="193" fill="#fff" fill-opacity="0.060000000000000005"/>
<rect x="141" y="581" width="1" height="193" fill="#fff" fill-opacity="0.060000000000000005"/>
<rect x="165" y="581" width="1" height="193" fill="#fff" fill-opacity="0.060000000000000005"/>
<rect x="189" y="581" width="1" height="193" fill="#fff" fill-opacity="0.1"/>
<rect x="212" y="581" width="1" height="193" fill="#fff" fill-opacity="0.060000000000000005"/>
<rect x="236" y="581" width="1" height="193" fill="#fff" fill-opacity="0.060000000000000005"/>
<rect x="260" y="581" width="1" height="193" fill="#fff" fill-opacity="0.060000000000000005"/>
<rect x="283" y="581" width="1" height="193" fill="#fff" fill-opacity="0.1"/>
<rect x="307" y="581" width="1" height="193" fill="#fff" fill-opacity="0.060000000000000005"/>
<rect x="331" y="581" width="1" height="193" fill="#fff" fill-opacity="0.060000000000000005"/>
<rect x="354" y="581" width="1" height="193" fill="#fff" fill-opacity="0.060000000000000005"/>
<rect x="378" y="581" width="1" height="193" fill="#fff" fill-opacity="0.1"/>
<rect x="402" y="581" width="1" height="193" fill="#fff" fill-opacity="0.060000000000000005"/>
<rect x="425" y="581" width="1" height="193" fill="#fff" fill-opacity="0.060000000000000005"/>
<rect x="449" y="581" width="1" height="193" fill="#fff" fill-opacity="0.060000000000000005"/>
<rect x="473" y="581" width="1" height="193" fill="#fff" fill-opacity="0.1"/>
<rect x="496" y="581" width="1" height="193" fill="#fff" fill-opacity="0.060000000000000005"/>
<rect x="520" y="581" width="1" height="193" fill="#fff" fill-opacity="0.060000000000000005"/>
<rect x="544" y="581" width="1" height="193" fill="#fff" fill-opacity="0.060000000000000005"/>
<rect x="567" y="581" width="1" height="193" fill="#fff" fill-opacity="0.1"/>
<rect x="591" y="581" width="1" height="193" fill="#fff" fill-opacity="0.060000000000000005"/>
<rect x="615" y="581" width="1" height="193" fill="#fff" fill-opacity="0.060000000000000005"/>
<rect x="98" y="748" width="524" height="1" fill="#fff" fill-opacity="0.065"/>
<rect x="98" y="686" width="524" height="1" fill="#fff" fill-opacity="0.065"/>
<rect x="98" y="625" width="524" height="1" fill="#fff" fill-opacity="0.065"/>
<rect x="98" y="717" width="524" height="1" fill="#fff" fill-opacity="0.05"/>
<rect x="98" y="656" width="524" height="1" fill="#fff" fill-opacity="0.05"/>
<rect x="98" y="594" width="524" height="1" fill="#fff" fill-opacity="0.05"/>
<g shape-rendering="crispEdges" fill="none" stroke-linejoin="miter">
<path transform="translate(97.5 0) scale(0.78900 1)" vector-effect="non-scaling-stroke" d="M0 596h68l1-1 1 1h1l1-1 1 1h1l1-1 1 1h1l1-1h1l1 1h2l1-1 1 1h7l1-1h1l1 1h2l1-1h6l1 1h2l1-1h2l1 1 1-1h2l1 1h1l1-1 1 1 1-1h21l1 1 1-1h86l1 1 1-1h18l1 1 1-1h61l1 1 1-1h4l1 1 1-1h1l1 1 1-1h12l1 1 1-1h4l1 1 1-1h18l1 1 1-1h1l1 1 1-1h4l1 1 1-1h6l1 1 1-1h3l1 1 1-1h5l1 1 1-1h1l1 1 1-1h2l1 1 1-1h1l1 1 1-1h5l1 1h4l1-1h5l1 1 1-1h3l1 1 1-1h4l1 1 1-1h2l1 1 1-1h10l1 1 1-1h1l1 1h1l1-1h3l1 1h1l1-1h1l1 1 1-1 1 1 1-1h7l1 1 1-1 1 1h2l1-1h1l1 1 1-1h1l1 1 1-1 1 1 1-1 1 1h2l1-1h3l1 1 1-1 1 1 1-1h3l1 1 1-1h4l1 1 1-1h1l1 1 1-1h1l1 1 1-1 1 1 1-1 1 1h1l1-1h1l1 1h1l1-1h1l1 1h3l1-1h1l1 1 1-1h3l1 1 1-1 1 1 1-1h3l1 1h1l1-1 1 1h3l1-1 1 1 1-1 1 1h1l1-1h1l1 1h1l1-1 1 1 1-1 1 1 1-1h1l1 1 1-1h2l1 1h6l1-1h2l1 1h3l1-1h1l1 1 1-1 1 1h4l1-1 1 1h5l1-1h1l1 1h3l1 9 1 32 1 32 1 38 1 38 1 14 1-9 1-8 1-4 1-24 1-27 1-27 1-24 1-18 1-18 1 1 1 3 1 5 1 9 1 9h1l1 2h5l1-1h2l1 1 1-1h2l1 6 1 9 1 7h2l1-1 1 1h26" stroke="#8a8b1c" stroke-width="2" stroke-dasharray="10 2"/>
<path transform="translate(97.5 0) scale(0.78900 1)" vector-effect="non-scaling-stroke" d="M0 595h18l1-1 1 1h18l1-1 1 1 1-1 1 1 1-1 1 1h5l1-1 1 1h7l1-1 1 1 1-1 1 1h6l1-1 1 1h2l1-1 1 1h2l1-1 1 1h1l1-1h4l1 1 1-1h3l1 1h1l1-1h2l1 1 1-1h58l1-1 1 1h15l1-1 1 1h58l1-1 1 1h5l1-1 1 1h10l1-1 1 1h8l1-1 1 1h22l1-1 1 1h65l1-1 1 1h19l1-1 1 1h139l1 1h1l1-1h14l1 1 1-1h1l1 1h1l1-1h3l1 1 1-1h4l1 1 1-1 1 1 1-1 1 1 1-1h5l1 1h1l1-1h2l1 1 1-1h3l1 1 1-1h10l1 1h1l1-1h2l1 1 1-1h14l1 10 1 31 1 33 1 32 1 32 1 15 1-4 1-3 1-3 1-25 1-26 1-27 1-24 1-18 1-17 1-1 1 3 1 6 1 9 1 8 1 1 1 2h1l1-1h10l1 6 1 9 1 7 1-1h2l1 1 1-1h1l1 1 1-1h1l1 1 1-1h1l1 1 1-1h1l1 1h9l1-1 1 1h3" stroke="#8a8b1c" stroke-width="2" stroke-dasharray="10 2"/>
<path transform="translate(97.5 0) scale(0.78900 1)" vector-effect="non-scaling-stroke" d="M0 596l1-1 1 1h1l1-1 1 1h1l1-1 1 1h2l1-1h1l1 1h1l1-1h2l1 1 1-1 1 1h5l1-1h24l1 1h1l1-1h2l1 1 1-1h8l1 1 1-1h4l1 1 1-1h46l1-1 1 1h4l1-1 1 1h9l1-1h4l1 1h3l1-1h1l1 1h2l1-1h2l1 1h3l1-1 1 1h3l1-1h2l1 1h1l1-1 1 1 1-1h5l1 1 1-1 1 1h1l1-1h3l1 1 1-1h1l1 1h1l1-1h2l1 1h3l1-1h2l1 1 1-1 1 1h2l1-1h7l1 1h3l1-1h2l1 1 1-1h1l1 1 1-1 1 1 1-1h1l1 1h4l1-1h2l1 1h1l1-1h3l1 1h1l1-1h2l1 1 1-1 1 1h1l1-1h18l1 1h1l1-1 1 1h1l1-1 1 1h8l1-1h3l1 1h1l1-1h3l1 1 1-1h5l1 1h2l1-1 1 1h13l1-1h2l1 1h10l1-1 1 1h3l1-1h2l1 1h3l1-1 1 1 1-1 1 1h5l1-1h1l1 1h4l1-1h1l1 1h1l1-1h4l1 1h5l1-1 1 1h27l1-1 1 1h9l1-1 1 1 1-1 1 1h10l1-1 1 1h11l1-1 1 1h21l1-1h2l1 1h22l1-1 1 1h14l1 1 1-1h11l1-1 1 1h9l1-1 1 1h26l1-1 1 1h5l1-1 1 1h6l1-1 1 1h23l1 10 1 32 1 32 1 32 1 32 1 14 1-3 1-3 1-4 1-24 1-26 1-27 1-24 1-18 1-18h1l1 3 1 6 1 8 1 9 1 1 1 1h11l1-1 1 7 1 9 1 6h6l1 1 1-1h9l1 1 1-1 1 1 1-1h2l1 1h1l1-1h3l1 1" stroke="#bcbd22" stroke-width="4"/>
</g>
<line x1="326.5" y1="581" x2="326.5" y2="774" stroke="#fff" stroke-width="2.2" stroke-dasharray="10 2" stroke-dashoffset="7.4"/>
<line x1="460.6" y1="581" x2="460.6" y2="774" stroke="#fff" stroke-width="2.2" stroke-dasharray="10 2" stroke-dashoffset="7.4"/>
<rect x="326.5" y="748.5" width="155" height="26" fill="rgba(0,0,0,0.67)"/>
<text x="330.7" y="766.3" font-size="13" fill="#f2f2f2" text-anchor="start" textLength="146.5" lengthAdjust="spacingAndGlyphs">T1=-7m,5s,774ms,784µs</text>
<rect x="298.6" y="748.5" width="164.5" height="26" fill="rgba(0,0,0,0.67)"/>
<text x="301.6" y="766.3" font-size="13" fill="#f2f2f2" text-anchor="start" textLength="153.5" lengthAdjust="spacingAndGlyphs">T2=-4m,15s,709ms,292µs</text>
<rect x="459.5" y="748.5" width="2.2" height="26" fill="#c4c4c4"/>
<rect x="316.1" y="581" width="155" height="49.9" fill="rgba(0,0,0,0.67)"/>
<text x="320.6" y="610.7" font-size="13" fill="#f2f2f2" text-anchor="start" textLength="22.1" lengthAdjust="spacingAndGlyphs">ΔT=</text>
<text x="345.9" y="600.7" font-size="13" fill="#f2f2f2" text-anchor="start" textLength="120.2" lengthAdjust="spacingAndGlyphs">2m,50s,65ms,492µs</text>
<text x="346.1" y="620.8" font-size="13" fill="#f2f2f2" text-anchor="start" textLength="88.6" lengthAdjust="spacingAndGlyphs">0.00588009 Hz</text>
</g>
<rect x="97" y="581" width="1" height="194" fill="#969696"/>
<rect x="97" y="774" width="525" height="1" fill="#969696"/>
<text x="189.4" y="790.5" font-size="13" fill="#f2f2f2" text-anchor="middle" textLength="30.6" lengthAdjust="spacingAndGlyphs">-10m</text>
<text x="284.1" y="790.5" font-size="13" fill="#f2f2f2" text-anchor="middle" textLength="23.1" lengthAdjust="spacingAndGlyphs">-8m</text>
<text x="378.8" y="790.5" font-size="13" fill="#f2f2f2" text-anchor="middle" textLength="23.1" lengthAdjust="spacingAndGlyphs">-6m</text>
<text x="473.4" y="790.5" font-size="13" fill="#f2f2f2" text-anchor="middle" textLength="23.1" lengthAdjust="spacingAndGlyphs">-4m</text>
<text x="568.1" y="790.5" font-size="13" fill="#f2f2f2" text-anchor="middle" textLength="23.1" lengthAdjust="spacingAndGlyphs">-2m</text>
<g clip-path="url(#ya02)">
<text x="92" y="753.3" font-size="13" fill="#f2f2f2" text-anchor="end">-466</text>
<text x="92" y="722.6" font-size="13" fill="#f2f2f2" text-anchor="end">-465</text>
<text x="92" y="691.9" font-size="13" fill="#f2f2f2" text-anchor="end">-464</text>
<text x="92" y="661.3" font-size="13" fill="#f2f2f2" text-anchor="end">-463</text>
<text x="92" y="630.6" font-size="13" fill="#f2f2f2" text-anchor="end">-462</text>
<text x="92" y="599.9" font-size="13" fill="#f2f2f2" text-anchor="end">-461</text>
</g>
<text x="360" y="570.8" font-size="12" fill="#f2f2f2" text-anchor="middle" textLength="262" lengthAdjust="spacingAndGlyphs">H1:SUS-ZM3_M1_DAMP_Y_INMON [s-trend]</text>
<text transform="translate(39.4 678) rotate(-90)" font-size="13" fill="#f2f2f2" text-anchor="middle" textLength="40.6" lengthAdjust="spacingAndGlyphs">counts</text>
<g clip-path="url(#c12)">
<rect x="723" y="581" width="1" height="193" fill="#fff" fill-opacity="0.060000000000000005"/>
<rect x="748" y="581" width="1" height="193" fill="#fff" fill-opacity="0.060000000000000005"/>
<rect x="773" y="581" width="1" height="193" fill="#fff" fill-opacity="0.060000000000000005"/>
<rect x="798" y="581" width="1" height="193" fill="#fff" fill-opacity="0.1"/>
<rect x="823" y="581" width="1" height="193" fill="#fff" fill-opacity="0.060000000000000005"/>
<rect x="848" y="581" width="1" height="193" fill="#fff" fill-opacity="0.060000000000000005"/>
<rect x="873" y="581" width="1" height="193" fill="#fff" fill-opacity="0.060000000000000005"/>
<rect x="898" y="581" width="1" height="193" fill="#fff" fill-opacity="0.1"/>
<rect x="923" y="581" width="1" height="193" fill="#fff" fill-opacity="0.060000000000000005"/>
<rect x="948" y="581" width="1" height="193" fill="#fff" fill-opacity="0.060000000000000005"/>
<rect x="973" y="581" width="1" height="193" fill="#fff" fill-opacity="0.060000000000000005"/>
<rect x="999" y="581" width="1" height="193" fill="#fff" fill-opacity="0.1"/>
<rect x="1024" y="581" width="1" height="193" fill="#fff" fill-opacity="0.060000000000000005"/>
<rect x="1049" y="581" width="1" height="193" fill="#fff" fill-opacity="0.060000000000000005"/>
<rect x="1074" y="581" width="1" height="193" fill="#fff" fill-opacity="0.060000000000000005"/>
<rect x="1099" y="581" width="1" height="193" fill="#fff" fill-opacity="0.1"/>
<rect x="1124" y="581" width="1" height="193" fill="#fff" fill-opacity="0.060000000000000005"/>
<rect x="1149" y="581" width="1" height="193" fill="#fff" fill-opacity="0.060000000000000005"/>
<rect x="1174" y="581" width="1" height="193" fill="#fff" fill-opacity="0.060000000000000005"/>
<rect x="1199" y="581" width="1" height="193" fill="#fff" fill-opacity="0.1"/>
<rect x="1224" y="581" width="1" height="193" fill="#fff" fill-opacity="0.060000000000000005"/>
<rect x="1249" y="581" width="1" height="193" fill="#fff" fill-opacity="0.060000000000000005"/>
<rect x="702" y="749" width="555" height="1" fill="#fff" fill-opacity="0.1"/>
<rect x="702" y="589" width="555" height="1" fill="#fff" fill-opacity="0.1"/>
<rect x="702" y="669" width="555" height="1" fill="#fff" fill-opacity="0.065"/>
<rect x="702" y="765" width="555" height="1" fill="#fff" fill-opacity="0.05"/>
<rect x="702" y="733" width="555" height="1" fill="#fff" fill-opacity="0.05"/>
<rect x="702" y="717" width="555" height="1" fill="#fff" fill-opacity="0.05"/>
<rect x="702" y="701" width="555" height="1" fill="#fff" fill-opacity="0.05"/>
<rect x="702" y="685" width="555" height="1" fill="#fff" fill-opacity="0.05"/>
<rect x="702" y="653" width="555" height="1" fill="#fff" fill-opacity="0.05"/>
<rect x="702" y="637" width="555" height="1" fill="#fff" fill-opacity="0.05"/>
<rect x="702" y="621" width="555" height="1" fill="#fff" fill-opacity="0.05"/>
<rect x="702" y="605" width="555" height="1" fill="#fff" fill-opacity="0.05"/>
<g shape-rendering="crispEdges" fill="none" stroke-linejoin="miter">
<path transform="translate(701.5 0) scale(0.83559 1)" vector-effect="non-scaling-stroke" d="M0 614h214l1 3 1 4 1 4 1 4 1 5 1 4 1 4 1 5 1 4 1 4 1 4h4l1 1h1l1 6 1 9 1 10 1 9 1 9 1 9 1 8 1 1 1 2 1 1 1 2 1 1 1 1 1 2 1 1 1 2 1 1h1l1 1h2l1 1 1 4 1 5 1 2h2l1 1 1 2 1 2 1 1 1 2 1 2 1 2 1 2h132l1-7 1-8 1-6 1-4 1-5 1-4 1-5 1-4 1-5 1-4 1-4 1-5 1-4 1-5 1-4 1-5 1-4 1-4 1-5 1-4 1-5 1-4 1-4 1-4 1-3 1-4 1-3 1-4 1-3h1l1-1h1l1-2 1-2 1-3 1-3 1-2 1-3 1-3 1-2 1-3h8l1-1h6l1-1 1-2 1-1 1-2 1-1 1-2 1-1h205" stroke="#17bdd0" stroke-width="4"/>
</g>
<line x1="944" y1="581" x2="944" y2="774" stroke="#fff" stroke-width="2.2" stroke-dasharray="10 2" stroke-dashoffset="7.4"/>
<line x1="1086.1" y1="581" x2="1086.1" y2="774" stroke="#fff" stroke-width="2.2" stroke-dasharray="10 2" stroke-dashoffset="7.4"/>
<rect x="944" y="748.5" width="155" height="26" fill="rgba(0,0,0,0.67)"/>
<text x="948.2" y="766.3" font-size="13" fill="#f2f2f2" text-anchor="start" textLength="146.5" lengthAdjust="spacingAndGlyphs">T1=-7m,5s,774ms,784µs</text>
<rect x="924.1" y="748.5" width="164.5" height="26" fill="rgba(0,0,0,0.67)"/>
<text x="927.1" y="766.3" font-size="13" fill="#f2f2f2" text-anchor="start" textLength="153.5" lengthAdjust="spacingAndGlyphs">T2=-4m,15s,709ms,292µs</text>
<rect x="1085" y="748.5" width="2.2" height="26" fill="#c4c4c4"/>
<rect x="937.5" y="581" width="155" height="49.9" fill="rgba(0,0,0,0.67)"/>
<text x="942" y="610.7" font-size="13" fill="#f2f2f2" text-anchor="start" textLength="22.1" lengthAdjust="spacingAndGlyphs">ΔT=</text>
<text x="967.3" y="600.7" font-size="13" fill="#f2f2f2" text-anchor="start" textLength="120.2" lengthAdjust="spacingAndGlyphs">2m,50s,65ms,492µs</text>
<text x="967.5" y="620.8" font-size="13" fill="#f2f2f2" text-anchor="start" textLength="88.6" lengthAdjust="spacingAndGlyphs">0.00588009 Hz</text>
<line x1="702" y1="612.5" x2="1257" y2="612.5" stroke="#fff" stroke-opacity="1" stroke-width="2.2" stroke-dasharray="10 2" stroke-dashoffset="9"/>
<line x1="702" y1="761" x2="1257" y2="761" stroke="#fff" stroke-opacity="1" stroke-width="2.2" stroke-dasharray="10 2" stroke-dashoffset="9"/>
<rect x="701.5" y="611" width="82.5" height="26" fill="rgba(0,0,0,0.67)"/>
<text x="706" y="630.9" font-size="13" fill="#f2f2f2" text-anchor="start" textLength="73.6" lengthAdjust="spacingAndGlyphs">Y2=-1028.62</text>
<rect x="701.5" y="736.5" width="82.5" height="26" fill="rgba(0,0,0,0.67)"/>
<text x="706" y="752.6" font-size="13" fill="#f2f2f2" text-anchor="start" textLength="73.6" lengthAdjust="spacingAndGlyphs">Y1=-1214.09</text>
<line x1="702" y1="612.5" x2="784" y2="612.5" stroke="#fff" stroke-opacity="0.6" stroke-width="2.2" stroke-dasharray="10 2" stroke-dashoffset="9"/>
<line x1="702" y1="761" x2="784" y2="761" stroke="#fff" stroke-opacity="0.6" stroke-width="2.2" stroke-dasharray="10 2" stroke-dashoffset="9"/>
<rect x="1176.5" y="673.7" width="80.5" height="26" fill="rgba(0,0,0,0.67)"/>
<text x="1181" y="691.1" font-size="13" fill="#f2f2f2" text-anchor="start" textLength="70.5" lengthAdjust="spacingAndGlyphs">ΔY=185.469</text>
</g>
<rect x="701" y="581" width="1" height="194" fill="#969696"/>
<rect x="701" y="774" width="556" height="1" fill="#969696"/>
<text x="798.8" y="790.5" font-size="13" fill="#f2f2f2" text-anchor="middle" textLength="30.6" lengthAdjust="spacingAndGlyphs">-10m</text>
<text x="899.1" y="790.5" font-size="13" fill="#f2f2f2" text-anchor="middle" textLength="23.1" lengthAdjust="spacingAndGlyphs">-8m</text>
<text x="999.4" y="790.5" font-size="13" fill="#f2f2f2" text-anchor="middle" textLength="23.1" lengthAdjust="spacingAndGlyphs">-6m</text>
<text x="1099.6" y="790.5" font-size="13" fill="#f2f2f2" text-anchor="middle" textLength="23.1" lengthAdjust="spacingAndGlyphs">-4m</text>
<text x="1199.9" y="790.5" font-size="13" fill="#f2f2f2" text-anchor="middle" textLength="23.1" lengthAdjust="spacingAndGlyphs">-2m</text>
<g clip-path="url(#ya12)">
<text x="696" y="754.8" font-size="13" fill="#f2f2f2" text-anchor="end">-1200</text>
<text x="696" y="674.8" font-size="13" fill="#f2f2f2" text-anchor="end">-1100</text>
<text x="696" y="594.7" font-size="13" fill="#f2f2f2" text-anchor="end">-1000</text>
</g>
<text x="979.5" y="570.8" font-size="12" fill="#f2f2f2" text-anchor="middle" textLength="259" lengthAdjust="spacingAndGlyphs">H1:SUS-FC1_M1_DAMP_P_INMON [s-trend]</text>
<text transform="translate(643.4 678) rotate(-90)" font-size="13" fill="#f2f2f2" text-anchor="middle" textLength="40.6" lengthAdjust="spacingAndGlyphs">counts</text>
<g clip-path="url(#c22)">
<rect x="1356" y="581" width="1" height="193" fill="#fff" fill-opacity="0.060000000000000005"/>
<rect x="1379" y="581" width="1" height="193" fill="#fff" fill-opacity="0.060000000000000005"/>
<rect x="1403" y="581" width="1" height="193" fill="#fff" fill-opacity="0.060000000000000005"/>
<rect x="1427" y="581" width="1" height="193" fill="#fff" fill-opacity="0.1"/>
<rect x="1450" y="581" width="1" height="193" fill="#fff" fill-opacity="0.060000000000000005"/>
<rect x="1474" y="581" width="1" height="193" fill="#fff" fill-opacity="0.060000000000000005"/>
<rect x="1498" y="581" width="1" height="193" fill="#fff" fill-opacity="0.060000000000000005"/>
<rect x="1521" y="581" width="1" height="193" fill="#fff" fill-opacity="0.1"/>
<rect x="1545" y="581" width="1" height="193" fill="#fff" fill-opacity="0.060000000000000005"/>
<rect x="1569" y="581" width="1" height="193" fill="#fff" fill-opacity="0.060000000000000005"/>
<rect x="1592" y="581" width="1" height="193" fill="#fff" fill-opacity="0.060000000000000005"/>
<rect x="1616" y="581" width="1" height="193" fill="#fff" fill-opacity="0.1"/>
<rect x="1640" y="581" width="1" height="193" fill="#fff" fill-opacity="0.060000000000000005"/>
<rect x="1663" y="581" width="1" height="193" fill="#fff" fill-opacity="0.060000000000000005"/>
<rect x="1687" y="581" width="1" height="193" fill="#fff" fill-opacity="0.060000000000000005"/>
<rect x="1711" y="581" width="1" height="193" fill="#fff" fill-opacity="0.1"/>
<rect x="1734" y="581" width="1" height="193" fill="#fff" fill-opacity="0.060000000000000005"/>
<rect x="1758" y="581" width="1" height="193" fill="#fff" fill-opacity="0.060000000000000005"/>
<rect x="1782" y="581" width="1" height="193" fill="#fff" fill-opacity="0.060000000000000005"/>
<rect x="1805" y="581" width="1" height="193" fill="#fff" fill-opacity="0.1"/>
<rect x="1829" y="581" width="1" height="193" fill="#fff" fill-opacity="0.060000000000000005"/>
<rect x="1853" y="581" width="1" height="193" fill="#fff" fill-opacity="0.060000000000000005"/>
<rect x="1336" y="759" width="524" height="1" fill="#fff" fill-opacity="0.1"/>
<rect x="1336" y="671" width="524" height="1" fill="#fff" fill-opacity="0.1"/>
<rect x="1336" y="583" width="524" height="1" fill="#fff" fill-opacity="0.1"/>
<rect x="1336" y="715" width="524" height="1" fill="#fff" fill-opacity="0.065"/>
<rect x="1336" y="627" width="524" height="1" fill="#fff" fill-opacity="0.065"/>
<g shape-rendering="crispEdges" fill="none" stroke-linejoin="miter">
<path transform="translate(1335.5 0) scale(0.78900 1)" vector-effect="non-scaling-stroke" d="M0 739h2l1 1 1-1h3l1 1 1-1h2l1 1 1-1h2l1 1 1 1 1-2h2l1 1 1-1h2l1 1 1-1h1l1 1 1 1 1-2 1 1 1-1h4l1 1h3l1-1h1l1 1h1l1-1 1 2 1-1h1l1-1 1 1 1-1 1 2h1l1-1 1 1 1-1h3l1-1 1 2 1-1h4l1-1h1l1 1 1-1h1l1 1h2l1 1 1-2h1l1 1h4l1-1 1 1h6l1 1h1l1-1h1l1 1 1-1h1l1 1 1-1h1l1 1h1l1-1 1 2 1-2 1 1 1-1 1 1 1-1h2l1 1h1l1-1 1 1 1-1h4l1 1 1-1h1l1 1h1l1-1h5l1 1 1-1h4l1 2 1-1 1-1h1l1 1 1-1h3l1 1 1-1h4l1-1 1 1h1l1 1 1-1h2l1 1h1l1-1 1-1 1 1 1-1 1 1 1 1 1-1h1l1-1 1 1 1-1h3l1 1h2l1-1 1 1h2l1-1h1l1 1 1-1h1l1 1 1-1h2l1 1 1-1h1l1 1h1l1-1h1l1 1 1-1h2l1 1 1 1 1-2 1 1 1-1h1l1 1 1-1h1l1-1 1 1h1l1-1 1-4 1-4 1-4 1-3 1-3 1-3 1-5 1-3 1-4 1-2 1-3 1-3 1-1h1l1-1h1l1-7 1-10 1-10 1-10 1-10 1-7 1-1 1-2 1-1 1-1 1-2 1-1h1l1-1 1-3h1l1-1h1l1-1h1l1-2 1-2 1-1 1-2 1-2 1-2 1-2 1-1 1-3 1-2 1-2 1-2 1-2 1-1h3l1-1 1 1h1l1 1 1-2h1l1 1h1l1-1h2l1 1h1l1-1 1 1 1 1 1-2 1 1 1-1 1 1 1-1h4l1 1 1-1h1l1 1h1l1-1 1 1 1-1 1 1 1-1 1 1h3l1-1h1l1 1 1-1 1 1h1l1-1 1 1 1-1 1 2 1-1 1-1 1 1h1l1-1 1 1 1-1 1 1h1l1 1 1-1 1 1h1l1-1h11l1 1 1-1h7l1 1h2l1-1 1 1h2l1-1 1 1h1l1-1 1 2 1-1 1-1 1 2 1-2h3l1 1h1l1-1h1l1 1 1-1 1 1 1 1 1-2 1 1 1-1 1 1 1-1h1l1 2 1-2 1 1 1 1 1-1h2l1 1 1-1h1l1-1 1 1 1 1h1l1-1h1l1 2 1 2 1 4 1 3 1 3 1 3 1 3 1 3 1 4 1 7 1 8 1 8 1 6 1 8 1 7 1 4 1 5 1 5 1 5 1 4 1 5 1 4 1 6 1 4 1 3 1 1 1 1 1 2 1 1h1l1 1 1 2h1l1 2 1 4 1 3 1 4 1 3 1 3h1l1 2h3l1-1h7l1 1 1-1h1l1 3 1 2 1 1 1 3 1 3h2l1-1 1 1h2l1 1 1-1 1 2 1-2 1-1 1 1h4l1-1 1 1h4l1 1 1-1h2l1 1 1-1h2l1 1 1-1h6l1-1 1 1h4l1-1h1l1 2 1-1 1-1h1l1 2h1l1-1 1 1h1l1-2 1 1 1-1h1l1 1 1-1 1 2 1-1 1-1 1 1h1l1-1 1 1h4l1 1 1-1 1-1 1 2 1-1h1l1-1 1 1 1 2 1-1 1-1h1l1-1 1 1h1l1 1 1-1 1-1h1l1 1h2l1-1h1l1 2h1l1-1h1l1-1 1 2 1-2 1 2 1-1h2l1-1 1 1 1-1 1 1h2l1 1 1-2h1l1 2 1-1 1-1 1 1h1l1-1h1l1 1 1-1h3l1 1 1-1h1l1 1h2l1-1h2l1 2 1-1 1-1h1l1 1 1-1 1 1 1-1h3l1 2 1-2h1l1 2 1-2 1 1 1-1h1l1 1h1l1-1h4l1 1 1-1h3l1 1 1-1h1l1 1 1-1h4l1-1h1l1 1h2l1 1h1l1-1 1-1 1 1h1l1-1 1 1h1l1-1 1 1 1-1h1l1 1h1l1-1 1 1h3l1-1 1 1 1-1h1" stroke="#8c1c20" stroke-width="2" stroke-dasharray="10 2"/>
<path transform="translate(1335.5 0) scale(0.78900 1)" vector-effect="non-scaling-stroke" d="M0 735l1 2h3l1-1 1 1h1l1-1 1 1 1-1 1 1h1l1-1 1-1 1 2h1l1-1 1 1 1-2 1 2h2l1-2 1 2h5l1-1h1l1 1h5l1-1 1 1h2l1-1 1 1h1l1-1 1 2 1-2 1 1h4l1 1 1-1h1l1-1 1 2h1l1-1h4l1 1 1-1h3l1 1 1-1 1 1 1-1 1-1h1l1 1 1 1 1-1 1 1 1-1h1l1 1h2l1-1h1l1 1h2l1-1h1l1 1h1l1-1h3l1 1h2l1-1 1 1h1l1-1 1 1 1-2 1 2h5l1-1 1 1h2l1-1 1 1 1-1 1 1 1-1 1 1h2l1-1h1l1-1 1 1 1 1 1-1 1 1h1l1-1 1 1h2l1-1h1l1 1h1l1-2 1-1 1 3h1l1-1 1 1 1-1 1 1h1l1-1h2l1 1 1-2 1 1h4l1-1 1 1h1l1 1 1-1h2l1-1 1 1h1l1-2 1 3 1-1 1-1 1 1h7l1-1 1 1h1l1-1h1l1 1h3l1-1 1-1h1l1 2 1-1h1l1 1 1-1 1 1h6l1-1 1 1 1-2 1 1h2l1 1 1-2 1 1 1 1 1-2 1-4 1-4 1-4 1-2 1-4 1-5 1-3 1-3 1-3 1-3 1-4 1-2 1-1h1l1-1h1l1-7 1-9 1-11 1-9 1-10 1-8h1l1-1 1-4 1 1 1-2h1l1-3h1l1-2 1-1 1-2h1l1 1 1-2h1l1-2 1-2 1-2 1-1 1-3 1-1 1-2 1-4h1l1-3 1-1 1-3 1 1 1-1h2l1-1 1-3 1 3h2l1-1 1-1 1 2h1l1-1 1 1h6l1-1h1l1 1h2l1-1 1 1 1-1 1 1h2l1-1 1 1h4l1 1 1-1 1 1 1-1 1-1 1 1h5l1-1 1 1h1l1-1 1 1h3l1 1 1-1 1 1h1l1-1 1 1 1-1 1 1 1-1h1l1-1 1 2h1l1-1h2l1 1 1-1 1 1h1l1-1 1 1h2l1-1h2l1 1h1l1-1 1-1 1 1h1l1 1h1l1-1 1 1 1-1h1l1 1h2l1-1 1 1h1l1-1 1 1 1-1 1 1h1l1 1 1-1h4l1-1 1 1h4l1-1 1 1h1l1 1 1-1h1l1 1 1-1h1l1-1 1 1 1-1h1l1 1 1 1 1-1h1l1 2 1 3 1 3 1 3 1 2 1 5 1 2 1 3 1 5 1 5 1 9 1 8 1 7 1 8 1 7 1 5 1 4 1 5 1 5 1 4 1 4 1 5 1 5 1 4 1 3 1 1 1 2h1l1 2 1 1h1l1 1 1-1 1 5 1 4 1 3 1 3 1 3 1 4h4l1-1 1 1h1l1 1 1-4 1 3 1 1h4l1 1 1 1 1 2 1 2 1 3 1 2h2l1 1 1-2 1 1 1-2 1 2h1l1 1 1-2 1 1 1-1 1 2 1-1h1l1-1 1 1 1-1 1 2h1l1-2 1 1 1 1h1l1-1h4l1 1 1-1 1-1 1 1 1 1 1-1h1l1 1 1-1h1l1 1h1l1-1 1 1 1-1 1 1 1-1h3l1 1 1-1h1l1 1 1-1h1l1 1 1-1h4l1-1h1l1 1 1-1 1 1 1 1 1-2h1l1 1 1 1 1-1 1-1 1 2 1-1h2l1 1 1-2 1 2 1-1 1-2 1 2h1l1 1 1-3 1 1 1 1h1l1 1 1-1 1 1h3l1-1h7l1-1 1 1 1-1 1 1h2l1 1h1l1-1h6l1-1 1 1 1-1 1 1 1-1 1 1h3l1 1 1-1h6l1-1h1l1 1h1l1-2 1 2h2l1-1 1-1 1 2h4l1-1 1 1 1-2 1 2 1-1 1 1h2l1-1 1 1h1l1-1h1l1 1 1-1 1 1 1-1h1l1 1 1-2 1 2 1-2 1 2h1l1-1 1 1 1-1 1 1h2l1-1h1l1 1 1-2 1 1 1-1 1 1h3l1 1 1-2h3l1 1h3l1 1 1-1 1 1 1-2 1 2 1-1 1-1" stroke="#8c1c20" stroke-width="2" stroke-dasharray="10 2"/>
<path transform="translate(1335.5 0) scale(0.78900 1)" vector-effect="non-scaling-stroke" d="M0 739l1-1h1l1-1 1 1h9l1 1 1-1 1-1 1 2 1-2 1 1 1 1 1-1h2l1 1h1l1-1h2l1 1 1-1 1 1 1-1h2l1-1 1 2h1l1-1h1l1 1 1-1 1 1 1-1 1 1h2l1 1 1-1 1-1h2l1 1 1-2 1 1h1l1-1 1 1h2l1 1h1l1-1h1l1-1 1 1h1l1 1 1 1 1-2h5l1 1 1-1h2l1 1 1-1 1 1 1-1h1l1 1 1-1 1-1 1 1h1l1-1 1 2 1-1h1l1 1h1l1-1 1 2 1-1 1-1h3l1 1h1l1 1h2l1-1 1 1 1-1 1-1 1 1h1l1 1h1l1-2 1 1h4l1-1 1 1 1-1 1 1h3l1-1 1 1 1 1 1-1 1-1 1 1h2l1-1h1l1 1 1-1 1 1 1-1h2l1 1 1-1h1l1-1 1 2h1l1 1 1-1h2l1-1h2l1 1h2l1-1 1 1 1 1h1l1-2h1l1-1 1 1 1-1h1l1 1h2l1 1 1-1 1-1 1 1h2l1-1h1l1 1h1l1 1 1-2 1 1h1l1 1 1-1h1l1 1 1-2h3l1-1 1 1h1l1 1h2l1 1h1l1-2 1 2 1-1 1-1 1 2 1-1 1-1h4l1 1 1-2 1-4 1-3 1-4 1-3 1-3 1-3 1-4 1-5 1-3 1-3 1-4h1l1-2h2l1-2 1-7 1-9 1-10 1-9 1-10 1-7 1-2 1-3h1l1-1 1-1 1-2 1-1 1-1 1-1 1-2 1-1h2l1-1h1l1-3 1-2 1-1 1-2 1-2 1-3h1l1-3 1-2 1-2 1-1 1-3 1-1h3l1-2h1l1 1h5l1 1 1-1 1-1h2l1 1 1 1h1l1-1 1-1h2l1 2 1-1 1 2 1-1 1-1h4l1 1h1l1 1 1-1 1-1 1 1h2l1-1 1-1 1 1 1 1 1-1 1 1h1l1-2 1 1 1 1 1-1h1l1 1 1-1h3l1 1 1-1h1l1 1 1-1h4l1 1h6l1-1h1l1 1 1-1h1l1 1h1l1-1 1 1h1l1-1 1 1h2l1 1h1l1-1h1l1-1 1 1h1l1-1 1 1h2l1-1 1 1 1 1h1l1-1h1l1 1 1-1h2l1 1h5l1-1h2l1 1h3l1 1 1-2h1l1 1 1-1 1 1h2l1-1h2l1 1 1-1 1 1h1l1 5 1 3 1 3 1 3 1 3 1 3 1 4 1 3 1 8 1 7 1 7 1 7 1 8 1 6 1 6 1 4 1 5 1 4 1 5 1 5 1 5 1 4 1 4 1 3 1 2 1 1 1 2h1l1 2h1l1 1 1-1 1 4 1 4 1 3 1 3 1 3 1 3 1 1h1l1 1h4l1 1 1-1h1l1-1 1 1h1l1-1h1l1 1 1 2 1 2 1 3 1 3 1 3 1-1 1-2h1l1 2 1-1 1-1 1 1 1 1 1-1h2l1 1 1-1 1 1 1-1h1l1 1 1-2h1l1 1h2l1 1h4l1-1 1 1h2l1-1h8l1 1h1l1 1 1-2h2l1 1 1-1h1l1 1 1-1h2l1 2 1-1h2l1 1 1-2h8l1 1 1-1h1l1 1 1 1 1-1h1l1-1h3l1 1h1l1-1 1 1 1-1 1-1 1 1 1 1 1-2 1 1h2l1 1 1 1 1-1 1-1 1 1h8l1-1h1l1-1 1 1h3l1 1 1 1 1-2 1 1 1-1h2l1-1 1 1 1 1 1-1h2l1 1h5l1-1h1l1-1 1 1 1-1h1l1 1 1 1 1-1h4l1-2 1 2h5l1 2 1-1 1-1 1-1 1 1 1-1h1l1 1 1-1 1 1 1-1 1 1 1 1 1-1 1-1 1 1h1l1-1h2l1 1h1l1-1h2l1 1 1 1 1-1h3l1-1h1l1-1 1 2h1l1-1h1l1 1h1l1-1 1-1 1 1h1l1 1h1l1-1h3l1 1h1l1-2h2l1 1h1" stroke="#cf2a2e" stroke-width="4"/>
</g>
<line x1="1564.5" y1="581" x2="1564.5" y2="774" stroke="#fff" stroke-width="2.2" stroke-dasharray="10 2" stroke-dashoffset="7.4"/>
<line x1="1698.6" y1="581" x2="1698.6" y2="774" stroke="#fff" stroke-width="2.2" stroke-dasharray="10 2" stroke-dashoffset="7.4"/>
<rect x="1564.5" y="748.5" width="155" height="26" fill="rgba(0,0,0,0.67)"/>
<text x="1568.7" y="766.3" font-size="13" fill="#f2f2f2" text-anchor="start" textLength="146.5" lengthAdjust="spacingAndGlyphs">T1=-7m,5s,774ms,784µs</text>
<rect x="1536.6" y="748.5" width="164.5" height="26" fill="rgba(0,0,0,0.67)"/>
<text x="1539.6" y="766.3" font-size="13" fill="#f2f2f2" text-anchor="start" textLength="153.5" lengthAdjust="spacingAndGlyphs">T2=-4m,15s,709ms,292µs</text>
<rect x="1697.5" y="748.5" width="2.2" height="26" fill="#c4c4c4"/>
<rect x="1554.1" y="581" width="155" height="49.9" fill="rgba(0,0,0,0.67)"/>
<text x="1558.6" y="610.7" font-size="13" fill="#f2f2f2" text-anchor="start" textLength="22.1" lengthAdjust="spacingAndGlyphs">ΔT=</text>
<text x="1583.9" y="600.7" font-size="13" fill="#f2f2f2" text-anchor="start" textLength="120.2" lengthAdjust="spacingAndGlyphs">2m,50s,65ms,492µs</text>
<text x="1584.1" y="620.8" font-size="13" fill="#f2f2f2" text-anchor="start" textLength="88.6" lengthAdjust="spacingAndGlyphs">0.00588009 Hz</text>
</g>
<rect x="1335" y="581" width="1" height="194" fill="#969696"/>
<rect x="1335" y="774" width="525" height="1" fill="#969696"/>
<text x="1427.4" y="790.5" font-size="13" fill="#f2f2f2" text-anchor="middle" textLength="30.6" lengthAdjust="spacingAndGlyphs">-10m</text>
<text x="1522.1" y="790.5" font-size="13" fill="#f2f2f2" text-anchor="middle" textLength="23.1" lengthAdjust="spacingAndGlyphs">-8m</text>
<text x="1616.8" y="790.5" font-size="13" fill="#f2f2f2" text-anchor="middle" textLength="23.1" lengthAdjust="spacingAndGlyphs">-6m</text>
<text x="1711.4" y="790.5" font-size="13" fill="#f2f2f2" text-anchor="middle" textLength="23.1" lengthAdjust="spacingAndGlyphs">-4m</text>
<text x="1806.1" y="790.5" font-size="13" fill="#f2f2f2" text-anchor="middle" textLength="23.1" lengthAdjust="spacingAndGlyphs">-2m</text>
<g clip-path="url(#ya22)">
<text x="1330" y="764.6" font-size="13" fill="#f2f2f2" text-anchor="end">-66</text>
<text x="1330" y="720.5" font-size="13" fill="#f2f2f2" text-anchor="end">-65</text>
<text x="1330" y="676.5" font-size="13" fill="#f2f2f2" text-anchor="end">-64</text>
<text x="1330" y="632.5" font-size="13" fill="#f2f2f2" text-anchor="end">-63</text>
<text x="1330" y="588.5" font-size="13" fill="#f2f2f2" text-anchor="end">-62</text>
</g>
<text x="1598" y="570.8" font-size="12" fill="#f2f2f2" text-anchor="middle" textLength="258" lengthAdjust="spacingAndGlyphs">H1:SUS-FC1_M1_DAMP_Y_INMON [s-trend]</text>
<text transform="translate(1277.4 678) rotate(-90)" font-size="13" fill="#f2f2f2" text-anchor="middle" textLength="40.6" lengthAdjust="spacingAndGlyphs">counts</text>
<g clip-path="url(#c32)">
<rect x="1960" y="581" width="1" height="193" fill="#fff" fill-opacity="0.060000000000000005"/>
<rect x="1983" y="581" width="1" height="193" fill="#fff" fill-opacity="0.060000000000000005"/>
<rect x="2007" y="581" width="1" height="193" fill="#fff" fill-opacity="0.060000000000000005"/>
<rect x="2031" y="581" width="1" height="193" fill="#fff" fill-opacity="0.1"/>
<rect x="2054" y="581" width="1" height="193" fill="#fff" fill-opacity="0.060000000000000005"/>
<rect x="2078" y="581" width="1" height="193" fill="#fff" fill-opacity="0.060000000000000005"/>
<rect x="2102" y="581" width="1" height="193" fill="#fff" fill-opacity="0.060000000000000005"/>
<rect x="2125" y="581" width="1" height="193" fill="#fff" fill-opacity="0.1"/>
<rect x="2149" y="581" width="1" height="193" fill="#fff" fill-opacity="0.060000000000000005"/>
<rect x="2173" y="581" width="1" height="193" fill="#fff" fill-opacity="0.060000000000000005"/>
<rect x="2196" y="581" width="1" height="193" fill="#fff" fill-opacity="0.060000000000000005"/>
<rect x="2220" y="581" width="1" height="193" fill="#fff" fill-opacity="0.1"/>
<rect x="2244" y="581" width="1" height="193" fill="#fff" fill-opacity="0.060000000000000005"/>
<rect x="2267" y="581" width="1" height="193" fill="#fff" fill-opacity="0.060000000000000005"/>
<rect x="2291" y="581" width="1" height="193" fill="#fff" fill-opacity="0.060000000000000005"/>
<rect x="2315" y="581" width="1" height="193" fill="#fff" fill-opacity="0.1"/>
<rect x="2338" y="581" width="1" height="193" fill="#fff" fill-opacity="0.060000000000000005"/>
<rect x="2362" y="581" width="1" height="193" fill="#fff" fill-opacity="0.060000000000000005"/>
<rect x="2386" y="581" width="1" height="193" fill="#fff" fill-opacity="0.060000000000000005"/>
<rect x="2409" y="581" width="1" height="193" fill="#fff" fill-opacity="0.1"/>
<rect x="2433" y="581" width="1" height="193" fill="#fff" fill-opacity="0.060000000000000005"/>
<rect x="2457" y="581" width="1" height="193" fill="#fff" fill-opacity="0.060000000000000005"/>
<rect x="1940" y="589" width="524" height="1" fill="#fff" fill-opacity="0.1"/>
<rect x="1940" y="731" width="524" height="1" fill="#fff" fill-opacity="0.065"/>
<rect x="1940" y="760" width="524" height="1" fill="#fff" fill-opacity="0.05"/>
<rect x="1940" y="703" width="524" height="1" fill="#fff" fill-opacity="0.05"/>
<rect x="1940" y="674" width="524" height="1" fill="#fff" fill-opacity="0.05"/>
<rect x="1940" y="646" width="524" height="1" fill="#fff" fill-opacity="0.05"/>
<rect x="1940" y="618" width="524" height="1" fill="#fff" fill-opacity="0.05"/>
<g shape-rendering="crispEdges" fill="none" stroke-linejoin="miter">
<path transform="translate(1939.5 0) scale(0.78900 1)" vector-effect="non-scaling-stroke" d="M0 731l1-1 1 6 1-5 1-20 1 20 1 16 1-23 1-19 1 22 1-15 1 2 1 24 1-31 1 2 1-1 1 15 1 11 1-15 1 16 1 1 1-20 1-8 1 19 1 6 1-4 1-22 1 15 1-10 1 11 1 37 1-33 1 2 1 17 1-32 1 23 1-42 1 4 1 31 1-47 1 42 1-39 1 26 1-21 1 13 1 34 1 5 1-6 1-31 1 14 1-23 1 9 1 14 1 12 1-5 1-3 1 3 1 15 1-27 1 10 1-2 1-6 1-2 1-12 1 43 1-26 1 6 1-18 1 9 1 21 1-5 1-16 1 27 1-18 1-22 1-1 1 16 1-34 1 28 1-11 1-15 1 30 1-29 1 30 1-24 1 22 1 26 1-25 1-24 1 56 1-7 1-42 1-2 1 28 1 38 1-49 1 4 1-8 1 14 1-22 1-3 1 1 1 13 1-15 1 35 1-23 1 10 1-20 1-4 1 32 1-31 1-10 1 40 1-4 1-9 1 28 1-32 1 24 1-18 1 20 1-13 1-18 1-4 1-10 1 37 1-36 1 9 1-1 1 9 1 13 1 3 1-18 1 4 1 10 1-14 1 11 1-25 1 23 1-21 1-8 1 1 1 35 1-16 1-18 1 55 1-52 1 8 1 2 1-17 1 24 1 4 1 6 1-8 1 1 1 20 1-27 1-14 1 5 1 29 1-16 1 13 1 3 1-4 1-20 1 5 1 14 1-7 1-5 1 14 1-30 1 31h1l1-5 1-28 1 38 1-29 1 50 1-25 1-24 1-13 1 51 1-36 1-23 1 37 1-24 1 35 1-28 1 11 1-21 1 21 1-16 1-8 1 21 1-41 1 22 1 17 1 18 1-28 1 2 1 38 1-19 1 27 1-19 1-23 1 23 1-25 1 11 1 4 1-1 1-18 1 35 1-24 1-5 1 7 1-5 1-11 1 8 1 3 1-18 1 1 1-1 1 17 1-10 1-15 1-4 1 53 1-43 1 17 1-8 1 30 1-5 1-37 1 49 1-19 1 20 1-3 1-18 1-6 1 40 1-3 1-13 1-13 1-12 1 24 1-43 1 31 1-7 1-10 1 13 1-3 1 9 1-26 1 14 1 22 1 11 1-24 1 3 1-5 1-10 1 28 1-4 1-5 1-20 1-1 1 6 1-16 1 30h1l1 16 1-46 1 20 1-19 1-4 1 33 1-15 1 18 1-17 1-11 1 11 1 18 1-16 1 6 1 7 1-17 1-12 1 19 1 6 1-16 1 29 1-35 1 32 1-19 1 18 1-23 1 11 1-7 1 7 1 20 1-2 1-39 1-7 1 36 1-37 1-3 1 21 1-9 1 7 1-3 1-7 1 17 1-18 1 14 1 5 1-32 1 19 1 9 1-26 1 24 1-27 1 3 1 8 1 17 1 6 1-30 1 64 1-32 1-14 1-14 1 29 1-17 1-9 1 13 1-5h1l1-10 1 39 1-32 1 3 1 5 1 11 1-5 1 13 1-32 1 30 1 6 1-27 1 7 1-19 1 16 1 6 1-21 1 21 1-39 1 39 1 17 1-19 1-27 1 36 1-34 1-11 1 26 1 40 1-31 1-11 1 33 1-40 1-3 1 15 1 14 1 7 1 1 1-1 1-7 1-28 1 1 1 12 1 24 1-39 1 2 1 41 1-8 1-31 1 4 1 42 1 6 1-43 1 7 1-6 1-9 1 22 1 1 1 14 1-19 1-29 1 13 1 6 1-4 1 18 1-43 1 9 1-5 1 72 1-33h1l1-37 1 8 1-9 1 5 1-8 1 49 1 1 1-44 1-3 1 41 1-37 1 4 1 35 1 6 1-16 1-28 1 41 1-13 1 3 1 8 1-35 1 31 1-34 1 34 1-24 1-10 1 28 1-5 1 7 1 7 1 12 1-46 1-1 1 15 1-2 1-9 1 1 1-6 1 2 1 30 1-22 1-4 1 9 1-8 1 32 1-37 1-8 1 12 1 2 1-4 1 13 1-14 1 12 1-6h1l1 1 1-11 1 4 1 6 1-18 1 25 1 1 1-31 1 10 1 2 1 26 1-16 1 14 1-31 1 7 1 21 1 8 1-30 1 34 1-46 1 23 1 4 1 18 1-24 1 6 1 9 1-15 1 4 1-21 1 13 1-14 1 32 1-12 1 22 1-11 1-6 1 18 1-17 1-22 1 16 1 12 1 13 1-5 1-14 1-10 1 13 1-18 1 4 1-13 1 16 1 6 1-16 1 36 1-12 1-1 1-11 1-3 1 4 1-15 1 15 1 18 1-20 1 3 1 11 1-2 1 2 1-28 1 12 1-2 1 27 1-6 1-5 1-11 1 8 1 16 1-9 1-12 1-8 1 5 1 16 1-19 1 5 1-4 1 13 1-18 1-3 1 24 1-6 1 9 1-21 1-13 1 33 1 3 1-6 1-14 1-14 1 14 1 19 1-32 1-3 1 15 1-15 1 24 1-23 1 2 1 5 1-13 1 36 1-40 1 33 1-5 1 2 1-3 1-5 1 21 1-43 1 25 1 1 1-30 1 3 1 18 1-12 1 23 1-8h1l1-5 1 8 1-9 1-12 1 17 1 2 1-14 1 13 1 15 1-33 1-3 1 11 1 4 1-14 1 30 1-26 1-3 1-9 1 45 1-41 1 20 1 10 1 2 1-44 1 11 1 28 1-22 1 10 1-15 1 39 1-9 1 14 1-57 1 26 1 20 1-3 1-22 1-4 1 26 1 2 1-2 1-19 1 14 1-15 1 27 1-37 1 20 1 8 1 9 1-24 1-13 1 1 1 10 1-4 1 22 1-14 1-21 1 15 1-3 1 3 1 21 1-22 1 24 1-26 1 31 1-22 1 6 1 4 1 20 1-10 1-20 1 10 1-13 1 14 1-1 1-8 1-18 1 26 1-7 1 34 1-20 1 1 1-27" stroke="#0b3260" stroke-width="3" stroke-dasharray="10 2"/>
<path transform="translate(1939.5 0) scale(0.78900 1)" vector-effect="non-scaling-stroke" d="M0 706l1-3 1 1 1-5 1-39 1 24 1 3 1-25 1 4 1 36 1-24 1-9 1 16 1-15 1-18 1 24 1 1 1 9 1-5 1-22 1 41 1-26 1 1 1 12 1 1 1 4 1-21 1-4 1 4 1 28 1-14 1 8 1-2 1 14 1-45 1 16 1-17 1-17 1 41 1-36 1 51 1-67 1 36 1-9 1 9 1 25 1-5 1 6 1-42 1 20 1-16 1 9 1 21 1 3 1-28 1 17 1-7 1 11 1-21 1 28 1-19 1-3 1 9 1-9 1 23 1-28 1 28 1-13 1 8 1 3 1 8 1-27 1 2 1 3 1-5 1-20 1 35 1-44 1 27 1 3 1-12 1 16 1-41 1 44 1-28 1 19 1 30 1-15 1-27 1 31 1 3 1-41 1 18 1 11 1 20 1-17 1-17 1-21 1 43 1-39 1 11 1 12 1-11 1 9 1 23 1-24 1 6 1-7 1-24 1 37 1-11 1-11 1 33 1 4 1-31 1 35 1-45 1 42 1-44 1 32 1-5 1-6 1-8 1-25 1 44 1-25 1 9 1 7 1 6 1-11 1 15 1-15 1 14 1-25 1-11 1 40 1-31 1 24 1-26h1l1-10 1 36 1-24 1-17 1 47 1-42 1-15 1 38 1-21 1 19 1 13 1-9 1-14 1 23 1 10 1-17 1-24 1-6 1 47 1-34 1 42 1-16 1 17 1-39 1 16 1-7 1 11 1-10 1 16 1-40 1 35 1 3 1-16 1-13 1 40 1-36 1 27 1-2 1-25 1-8 1 38 1-25 1-19 1 46 1-26 1 13 1-24 1 15 1-20 1 20 1-12 1-6 1 21 1-34 1 9 1-4 1 51 1-36h1l1 12 1 14 1-24 1 33 1-43 1 48 1-41 1 26 1 9 1-6 1-34 1 34 1-56 1 22 1 18 1-3 1-13 1 6 1-4 1-2 1 8 1-11 1 22 1-9 1-25 1 11 1 14 1-32 1 35 1-9 1 16 1-3 1-19 1 22 1-18 1 30 1-14 1-6 1-10 1 40 1-14h1l1-12 1-9 1 31 1-41 1 21 1-15 1 7 1 8 1 8 1 9 1-44 1 39 1-5 1 10 1-12 1 11 1-14 1-8 1 27 1-3h1l1-16 1-23 1 32 1-22 1 25 1-3 1 6 1-50 1 37 1-17 1-19 1 24 1-6 1 11 1-7 1-10 1 16 1 20 1-10 1-6 1 1 1-6 1-28 1 35 1-2 1-15 1 33 1-25 1 18 1-2 1 15 1-17 1 10 1-22 1 10 1-5 1 6 1-35 1 14 1 34 1-35 1-2 1 19 1-24 1 2 1 1 1 2 1-2 1 4 1 20 1-4 1-21 1-17 1 36 1-32 1 34 1-36 1-2 1 3 1 37 1-16 1-9 1 39 1-1 1-27 1-3 1-1h1l1 2 1 3 1-19 1 15 1 5 1 10 1-3 1-8 1 11 1-17 1 24 1-14 1-27 1 32 1-5 1-25 1 12 1 10 1-8 1 9 1-32 1 38 1-33 1 41 1 1 1-15 1-23 1 32 1-33 1 4 1-4 1 33 1 7 1-19 1 16 1-16 1-7 1 3 1 8 1 2 1 6 1-20 1 17 1-21 1-4 1 10 1 34 1-40 1-8 1 34 1-4 1-24 1 3 1 34 1-22 1-2 1 5 1-3 1-17 1 29 1 8 1-18 1 7 1-29 1 16 1-5 1-10 1 19 1-17 1-6 1-8 1 23 1 1 1 2 1-22 1 23 1-13 1-9 1-14 1 45 1 6 1-25 1-21 1 55 1-49 1 20 1 14 1 13 1-12 1-17 1 33 1-14 1-18 1 24 1-37 1 41 1-36 1 34 1-39 1-20 1 60 1-4 1-10 1-12 1 17 1-32 1-1 1 12 1-23 1 17 1-24 1 24 1 2 1 18 1 3 1-16h1l1-18 1 39 1-27 1-20 1 8 1 5 1 7h1l1-5 1 3 1 13 1-2 1 4 1-23 1 5 1 1 1 5 1-6 1 15 1-28 1 14 1-12 1 33 1 1 1-4 1-25 1 20 1-6 1 24 1-48 1 21 1-6 1-7 1 23 1 18 1-20 1-3 1 18 1-25 1 21 1-33 1 18 1-29 1 46 1-41 1 35 1-4 1 1 1-11 1-1 1-4 1-6 1 24 1 11 1-17 1-11 1 9 1-4 1-1 1-11 1 9 1 9 1 2 1-30 1 25 1 5 1 6 1-33 1 24 1 4 1-19 1 19 1-14 1-18 1 3 1 44 1-22 1 13 1-11 1-6 1 3 1 21 1 8 1-14 1-17 1 5 1-2 1 3 1 4 1 1 1-15 1 28 1-13 1-15 1 21 1-23 1 9 1-3 1 7 1-19 1 23 1-13 1-7 1 26 1 5h1l1-14 1-13 1-16 1 35 1-28 1-9 1 33 1-6 1 8 1-16 1-11 1 11 1-7 1 9 1-13 1 25 1-6 1 8 1-13 1-8 1 30 1-40 1-6 1 30 1-17 1-8 1 22 1-9 1 6 1 12 1-26h1l1 27 1-18 1-17 1 23 1-2 1-21 1 31 1 3 1-32 1-12 1 14 1 7 1-6 1 11 1-17 1 2 1-18 1 34 1-8 1 19 1-12 1-1 1-31 1 21 1 8 1-11 1 8 1-25 1 37 1-4 1-18 1-2 1 25 1-13 1-2 1 1 1-4 1 21 1 7 1-23 1-8 1 25 1-24 1 28 1-38 1 21 1 12 1-1 1-28 1-6 1 12 1 3 1 4 1 23 1-17 1-38 1 19 1-14 1 9 1 31 1-23 1 5 1-8 1 38 1-48 1 35 1 15h1l1-14 1-12 1 20 1-27 1 15 1-5 1 5 1-8 1 15 1-20 1 29 1-2 1-3 1-35" stroke="#0b3260" stroke-width="3" stroke-dasharray="10 2"/>
<path transform="translate(1939.5 0) scale(0.78900 1)" vector-effect="non-scaling-stroke" d="M0 717l1-3 1 6 1-7 1-18 1 17 1-2 1-17 1-1 1 23 1-19 1 1 1 5 1-11 1 2 1 3 1 15 1 2 1-13 1 3 1 16 1-17 1-8 1 17 1-5 1 1 1-12 1 7 1-7 1 16 1-1h1l1 3 1 5 1-35 1 31 1-30 1-8 1 31 1-46 1 51 1-49 1 20 1-5 1 7 1 25 1-4 1 6 1-30 1 13 1-15 1 12 1 16 1-1 1-20 1 12 1-8 1 20 1-11h1l1-4 1 3 1-3 1-10 1 19 1-15 1 11 1-10 1 9 1 16 1-6 1-27 1 34 1-22 1-7 1-18 1 25 1-33 1 31 1-9 1-12 1 30 1-40 1 31 1-21 1 32 1 7 1-7 1-30 1 43 1-7 1-24 1-8 1 28 1 3 1-17 1 3 1-15 1 17 1-17h1l1 4 1-7 1 7 1 23 1-9 1 6 1-16 1-17 1 36 1-28 1-11 1 41 1 2 1-37 1 39 1-39 1 34 1-17 1 14 1 1 1-23 1 7 1-9 1 20 1-20 1-1 1 7 1 11 1 1 1 1 1-13 1 13 1-13 1-9 1 20 1-27 1 28 1-25 1 1 1-5 1 27 1-19 1-8 1 28 1-18 1-13 1 16 1-15 1 24 1-2 1 6 1-19 1 20 1 2 1-16 1-10 1-3 1 35 1-28 1 30 1-2 1 4 1-25 1 3 1-3 1 8h1l1 14 1-31 1 25 1-1 1-4 1-19 1 30 1-27 1 23 1-5 1-26 1 2 1 31 1-16 1-24 1 40 1-23 1 11 1-6 1 1 1-18 1 18 1-5 1-8 1 11 1-34 1 19 1-3 1 38 1-34 1 4 1 33 1-10 1-7 1 14 1-29 1 33 1-37 1 24 1 7 1-6 1-22 1 20 1-31 1 9 1 10 1 6 1-25 1 11 1 14 1-18 1 3 1-5 1 13 1-8 1-11 1-1 1 27 1-22 1 10 1-6 1 26 1 2 1-34 1 38 1-9 1 16 1-4 1-26 1-8 1 39 1-7 1-6 1-17 1 5 1 26 1-42 1 18 1-20 1 6 1 14 1 8 1 8 1-30 1 19 1 12 1-2 1-4 1 2 1-6 1-20 1 33 1-7 1-2 1-14 1-5 1 14 1-19 1 26 1-4 1 1 1-22 1 17 1-19 1 1 1 23 1-20 1 16 1-12 1-10 1 14 1 18 1-12 1-6 1 10 1-20 1 2 1 15 1 11 1-24 1 29 1-31 1 18 1-2 1 14 1-20 1 13 1-11 1-3 1 7 1 10 1-36 1 4 1 31 1-33h1l1 19 1-20 1 15 1-15 1 10 1-13h1l1 22 1 7 1-30 1 10 1 12 1-21 1 15 1-17 1 2 1 4 1 14 1-8 1-7 1 31 1-4 1-16 1-9 1 13 1-7 1-9 1 11 1-8 1-2 1 4 1 22 1-15 1-6 1 10 1-15 1 21 1 6 1-37 1 39 1-10 1-18h1l1 2 1 6 1 16 1-36 1 20 1-23 1 35 1-2 1-11 1-26 1 38 1-22 1-11 1-1 1 32h1l1-17 1 18 1-18 1-1 1-1 1 18 1-1 1 8 1-14 1 14 1-24 1-11 1 12 1 27 1-36 1 4 1 35 1-3 1-27 1-2 1 30 1-5 1-24 1 14 1-9 1-8 1 23 1 6 1-2 1-5 1-30 1 15 1-4 1-16 1 24 1-24 1 6 1-8 1 31 1 1 1-2 1-29 1 15 1-11 1 1 1-6 1 26 1 15 1-33 1-4 1 37 1-39 1 13 1 28 1-5 1-1 1-28 1 32 1-7 1-7 1 12 1-29 1 28 1-31 1 31 1-17 1-19 1 33 1 1 1-2 1 1 1-5 1-22 1 2 1 15 1-13h1l1-5 1 6 1-7 1 22 1-3 1-15 1 18 1-18 1 19 1-16 1-5 1 3 1-4 1 6 1 9 1-10 1 8 1-2 1 1 1-5 1-13 1 3 1 5 1-4 1-7 1 22 1-21 1 3 1-6 1 21 1 5 1 5 1-27 1 12 1 14 1 1 1-32 1 34 1-34 1 9 1 20 1 7 1-17 1 2 1 16 1-13 1 5 1-22 1 13 1-17 1 30 1-17 1 16 1-11 1 11 1 2 1-12 1-13 1 6 1 6 1 20 1-5 1-20 1 5 1-1 1-6 1-4 1-1 1 16h1l1-18 1 21 1-7 1 1 1-11 1 2 1 14 1-18 1 15h1l1-6 1-10 1 24 1-1 1-4 1-15h1l1-3 1 28 1 3 1-3 1-19 1 11h1l1-1 1-11 1 5 1-4 1 17 1-11 1-3 1 4 1-13 1 8 1-8 1 10 1 7 1-1 1-14 1-4 1 22 1 1 1-3 1-13 1-9 1-2 1 23 1-22 1-1 1 11 1-7 1 17 1-24 1 2 1 6 1-10 1 18 1-18 1 16 1 1 1 4 1-9 1-8 1 24 1-34 1 2 1 26 1-25h1l1 20 1-18 1 26 1-5 1-17 1 2 1 14 1-14 1-19 1 29 1-2 1-22 1 27 1 3 1-31 1 10 1 3 1-7 1-4 1 26 1-22 1-3 1-5 1 31 1-23 1 16 1-1 1-9 1-18 1 4 1 18 1-19 1 22 1-24 1 33 1-1 1-8 1-26 1 24 1 14 1-14 1-12 1-4 1 25 1 7 1-18 1-16 1 26 1-24 1 33 1-38 1 20 1 4 1 11 1-22 1-10 1 1 1-1 1 7 1 20 1-12 1-16 1 2 1 6 1 2 1 13 1-11 1 20 1-28 1 29 1-25 1 15 1 8 1 3 1-15 1-9 1 15 1-7 1 11 1-20 1 10 1-13 1 19 1-7 1 16 1-5h1l1-15" stroke="#1565c0" stroke-width="4"/>
</g>
<line x1="2168.5" y1="581" x2="2168.5" y2="774" stroke="#fff" stroke-width="2.2" stroke-dasharray="10 2" stroke-dashoffset="7.4"/>
<line x1="2302.6" y1="581" x2="2302.6" y2="774" stroke="#fff" stroke-width="2.2" stroke-dasharray="10 2" stroke-dashoffset="7.4"/>
<rect x="2168.5" y="748.5" width="155" height="26" fill="rgba(0,0,0,0.67)"/>
<text x="2172.7" y="766.3" font-size="13" fill="#f2f2f2" text-anchor="start" textLength="146.5" lengthAdjust="spacingAndGlyphs">T1=-7m,5s,774ms,784µs</text>
<rect x="2140.6" y="748.5" width="164.5" height="26" fill="rgba(0,0,0,0.67)"/>
<text x="2143.6" y="766.3" font-size="13" fill="#f2f2f2" text-anchor="start" textLength="153.5" lengthAdjust="spacingAndGlyphs">T2=-4m,15s,709ms,292µs</text>
<rect x="2301.5" y="748.5" width="2.2" height="26" fill="#c4c4c4"/>
<rect x="2158.1" y="581" width="155" height="49.9" fill="rgba(0,0,0,0.67)"/>
<text x="2162.6" y="610.7" font-size="13" fill="#f2f2f2" text-anchor="start" textLength="22.1" lengthAdjust="spacingAndGlyphs">ΔT=</text>
<text x="2187.9" y="600.7" font-size="13" fill="#f2f2f2" text-anchor="start" textLength="120.2" lengthAdjust="spacingAndGlyphs">2m,50s,65ms,492µs</text>
<text x="2188.1" y="620.8" font-size="13" fill="#f2f2f2" text-anchor="start" textLength="88.6" lengthAdjust="spacingAndGlyphs">0.00588009 Hz</text>
</g>
<rect x="1939" y="581" width="1" height="194" fill="#969696"/>
<rect x="1939" y="774" width="525" height="1" fill="#969696"/>
<text x="2031.4" y="790.5" font-size="13" fill="#f2f2f2" text-anchor="middle" textLength="30.6" lengthAdjust="spacingAndGlyphs">-10m</text>
<text x="2126.1" y="790.5" font-size="13" fill="#f2f2f2" text-anchor="middle" textLength="23.1" lengthAdjust="spacingAndGlyphs">-8m</text>
<text x="2220.8" y="790.5" font-size="13" fill="#f2f2f2" text-anchor="middle" textLength="23.1" lengthAdjust="spacingAndGlyphs">-6m</text>
<text x="2315.4" y="790.5" font-size="13" fill="#f2f2f2" text-anchor="middle" textLength="23.1" lengthAdjust="spacingAndGlyphs">-4m</text>
<text x="2410.1" y="790.5" font-size="13" fill="#f2f2f2" text-anchor="middle" textLength="23.1" lengthAdjust="spacingAndGlyphs">-2m</text>
<g clip-path="url(#ya32)">
<text x="1934" y="765.3" font-size="13" fill="#f2f2f2" text-anchor="end">1666.8</text>
<text x="1934" y="736.9" font-size="13" fill="#f2f2f2" text-anchor="end">1667</text>
<text x="1934" y="708.5" font-size="13" fill="#f2f2f2" text-anchor="end">1667.2</text>
<text x="1934" y="680" font-size="13" fill="#f2f2f2" text-anchor="end">1667.4</text>
<text x="1934" y="651.6" font-size="13" fill="#f2f2f2" text-anchor="end">1667.6</text>
<text x="1934" y="623.1" font-size="13" fill="#f2f2f2" text-anchor="end">1667.8</text>
<text x="1934" y="594.7" font-size="13" fill="#f2f2f2" text-anchor="end">1668</text>
</g>
<text x="2202" y="570.8" font-size="12" fill="#f2f2f2" text-anchor="middle" textLength="259" lengthAdjust="spacingAndGlyphs">H1:SUS-FC2_M1_DAMP_P_INMON [s-trend]</text>
<text transform="translate(1881.4 678) rotate(-90)" font-size="13" fill="#f2f2f2" text-anchor="middle" textLength="40.6" lengthAdjust="spacingAndGlyphs">counts</text>
<g clip-path="url(#c03)">
<rect x="118" y="831" width="1" height="193" fill="#fff" fill-opacity="0.060000000000000005"/>
<rect x="141" y="831" width="1" height="193" fill="#fff" fill-opacity="0.060000000000000005"/>
<rect x="165" y="831" width="1" height="193" fill="#fff" fill-opacity="0.060000000000000005"/>
<rect x="189" y="831" width="1" height="193" fill="#fff" fill-opacity="0.1"/>
<rect x="212" y="831" width="1" height="193" fill="#fff" fill-opacity="0.060000000000000005"/>
<rect x="236" y="831" width="1" height="193" fill="#fff" fill-opacity="0.060000000000000005"/>
<rect x="260" y="831" width="1" height="193" fill="#fff" fill-opacity="0.060000000000000005"/>
<rect x="283" y="831" width="1" height="193" fill="#fff" fill-opacity="0.1"/>
<rect x="307" y="831" width="1" height="193" fill="#fff" fill-opacity="0.060000000000000005"/>
<rect x="331" y="831" width="1" height="193" fill="#fff" fill-opacity="0.060000000000000005"/>
<rect x="354" y="831" width="1" height="193" fill="#fff" fill-opacity="0.060000000000000005"/>
<rect x="378" y="831" width="1" height="193" fill="#fff" fill-opacity="0.1"/>
<rect x="402" y="831" width="1" height="193" fill="#fff" fill-opacity="0.060000000000000005"/>
<rect x="425" y="831" width="1" height="193" fill="#fff" fill-opacity="0.060000000000000005"/>
<rect x="449" y="831" width="1" height="193" fill="#fff" fill-opacity="0.060000000000000005"/>
<rect x="473" y="831" width="1" height="193" fill="#fff" fill-opacity="0.1"/>
<rect x="496" y="831" width="1" height="193" fill="#fff" fill-opacity="0.060000000000000005"/>
<rect x="520" y="831" width="1" height="193" fill="#fff" fill-opacity="0.060000000000000005"/>
<rect x="544" y="831" width="1" height="193" fill="#fff" fill-opacity="0.060000000000000005"/>
<rect x="567" y="831" width="1" height="193" fill="#fff" fill-opacity="0.1"/>
<rect x="591" y="831" width="1" height="193" fill="#fff" fill-opacity="0.060000000000000005"/>
<rect x="615" y="831" width="1" height="193" fill="#fff" fill-opacity="0.060000000000000005"/>
<rect x="98" y="1020" width="524" height="1" fill="#fff" fill-opacity="0.1"/>
<rect x="98" y="878" width="524" height="1" fill="#fff" fill-opacity="0.1"/>
<rect x="98" y="949" width="524" height="1" fill="#fff" fill-opacity="0.065"/>
<rect x="98" y="1006" width="524" height="1" fill="#fff" fill-opacity="0.05"/>
<rect x="98" y="991" width="524" height="1" fill="#fff" fill-opacity="0.05"/>
<rect x="98" y="977" width="524" height="1" fill="#fff" fill-opacity="0.05"/>
<rect x="98" y="963" width="524" height="1" fill="#fff" fill-opacity="0.05"/>
<rect x="98" y="935" width="524" height="1" fill="#fff" fill-opacity="0.05"/>
<rect x="98" y="920" width="524" height="1" fill="#fff" fill-opacity="0.05"/>
<rect x="98" y="906" width="524" height="1" fill="#fff" fill-opacity="0.05"/>
<rect x="98" y="892" width="524" height="1" fill="#fff" fill-opacity="0.05"/>
<rect x="98" y="864" width="524" height="1" fill="#fff" fill-opacity="0.05"/>
<rect x="98" y="849" width="524" height="1" fill="#fff" fill-opacity="0.05"/>
<rect x="98" y="835" width="524" height="1" fill="#fff" fill-opacity="0.05"/>
<g shape-rendering="crispEdges" fill="none" stroke-linejoin="miter">
<path transform="translate(97.5 0) scale(0.78900 1)" vector-effect="non-scaling-stroke" d="M0 965l1-24 1-2 1 30 1-5 1-26 1 30 1-5 1-25 1 3 1-3 1 1 1 17 1-15h1l1 1 1-16 1 27 1-14 1 35 1-20 1-5 1 19 1-19 1 29 1-13 1 7 1-20 1 15 1-13 1 5 1-19 1-6 1 34 1-6 1-24 1 5 1-3 1 23 1 11 1-32 1 23 1-12 1 1h1l1-10 1 7 1-4 1-17 1 5 1 26 1-26 1-3 1 12 1 18 1-5 1 5 1 2 1-6 1-12 1 13 1-22 1 15 1 1 1-1 1 1 1 8 1 11 1 5 1-30 1 6h1l1 7 1-25 1 33 1-8 1-10 1-14 1 12 1-1 1 6 1-10 1 1 1 26 1-16 1-8 1 15 1 17 1-35 1 15 1-5 1-3 1-22 1 14 1 17 1-29 1 42 1-27 1 15 1-32 1 27 1-9 1 1 1 11 1-2 1-13 1 8 1-7 1 30 1 7 1-23 1 14 1-37 1 18 1 3 1-13 1 13 1 6 1 20 1-27 1 3 1-6 1 35 1-11 1-16 1 14 1-28 1 19 1-23 1 20 1 4 1 5 1-1 1-10 1 10 1-21 1 17 1-21 1-14 1 5 1 11 1-4h1l1 22 1-2 1-8 1 19 1-9 1 7 1-3 1-17 1-12 1 11 1 20 1-27 1 15 1 13 1-7 1-8 1-6 1 15 1 17 1 18 1-42 1 6 1-4 1-24 1 30 1-29 1 12 1 5 1 7 1-23 1 4 1 23 1 9 1-17 1-18 1 3 1 4 1 19 1-3 1-21 1 36 1-28 1 18 1-17 1-3 1-11 1 11 1-3 1 8 1-2 1-5h1l1-14 1 13 1 4 1-8 1-14 1 15 1 15 1-9 1 12 1-24 1 29 1-23 1 5 1 5 1-3 1 16 1-28 1 31 1-19 1 16 1-2 1 12 1-34 1-6 1-2 1-1 1 32 1-19 1-4 1-4 1 2 1 4 1 15 1 13 1-9 1-6 1 6 1-12 1-9 1 22 1-11 1 15 1 2 1 5 1-2 1-31 1 3 1 21 1-6 1-19 1 8 1 3 1-9 1-5 1 15 1-3 1 2 1-1 1 13 1-19 1 25 1 9 1-12 1-18 1 6 1 12 1-20 1 23 1-29 1 9 1-4 1 1 1-8 1 12 1 24 1-31 1 14 1-6 1-8 1 3 1 25 1-32 1 2 1-8h1l1-1 1-2 1 22 1 13 1 9 1-27 1 17h1l1-5 1-16 1 20 1-5 1 9 1 2 1-22 1 33 1-34 1 27 1 8 1-14 1 20 1-15 1-7 1-11 1 10 1-11 1 12 1-7 1 11 1-18 1-2 1 5 1 13 1 1 1-6 1-8 1 3 1 14 1 2 1-7 1-15 1 19 1-26 1 3 1 15 1 14 1-32 1 24 1-22 1 26 1 4 1-8 1 1 1-3 1 16 1-16 1 25 1-30 1 12 1-6 1 7 1-5 1-3 1-5 1 3 1 34 1-40 1-2 1 25 1-16 1 8 1-15 1 8 1 6 1-23 1 16 1 10 1 18 1-23 1-5 1-7 1 3 1 13 1-3 1 14 1-14 1 24 1-38 1 24 1 2 1 2 1-4 1 3 1 6 1-7h1l1-3 1 15 1-20 1 22 1-12 1-14 1 12 1-4 1-16 1 21 1-5 1-19 1-2 1 13 1-11 1 27 1-4 1-18 1 15 1-1 1 3 1-6 1-24 1 36 1-35 1 6 1 4 1-5 1-3 1 17 1-6 1-16 1 26 1-13 1-5h1l1 8 1 2 1-7 1-1 1 4 1-1 1 27 1-20 1-14 1 11 1 4 1 14 1-14 1 7 1-20 1-1 1-7 1 28 1-21 1-4 1 1 1 9 1-10 1 14 1-8 1 13 1-2 1-6 1-11 1 38 1-7 1-10 1 9 1-14 1-11 1 20 1 1 1-25 1 14 1 3 1 5 1-2 1-5 1-21 1-2 1 3 1 15 1-12 1 31 1-34 1 8 1 32 1-3 1-23 1 7 1 3 1-9 1 16 1-7 1 11 1-29 1 7 1-8 1 34 1-17 1 7 1-9 1 6 1 4 1-19 1-7 1 21 1 2 1 1 1-2 1 10 1-17 1 1 1 7 1-25 1 9 1 15 1-12 1 26 1-16 1 1 1-2 1-8 1 22 1-21 1 7 1-3 1-9 1 6h1l1 11 1 17 1-25 1 20 1-34 1 31 1-23h1l1-4 1 20 1-18 1 26 1-15 1-19 1 35 1-18 1 8 1-2 1 13 1-16 1 18 1 7 1-2 1-27 1 29 1-5 1-13 1 14 1-30 1 26 1-27 1 24 1-24 1 4 1 19 1-1 1 4 1-6 1-2 1-20 1-2 1 36 1-5 1-31 1-4 1-2 1 16 1 18 1-2 1-8 1-6 1 3 1 5 1 14 1-4 1 12 1-14 1-18 1-8 1 23 1-16 1 9 1-18 1 32 1-21 1 18 1-5 1 9 1-1 1 5 1-19 1-2 1 21 1-19 1-7 1-4 1 17 1-6 1 5 1 12 1-17 1-22 1-1 1 21 1-13 1 19 1-16 1-11 1 12 1 18 1-20 1 23 1-30 1 8 1-13 1 16 1 13 1-31 1 11 1 1 1 18 1-9 1-25 1 7 1-5 1-5 1 18 1 1 1-1 1 4 1-11 1 6 1 13 1-18 1 29 1 2 1-17 1 7 1 13 1-31h1l1 25 1 3 1-7 1-7 1 14 1-28 1 30 1-2 1 6 1-40 1 5 1 1 1 23 1-22 1 19 1-23 1 31 1-22 1-7 1 4 1-4 1 8 1 13 1-28 1 9 1 25 1-17 1-10 1 18 1-7h1l1 22 1-25 1 16 1-4 1-29 1 11h1l1-6" stroke="#7b4666" stroke-width="3" stroke-dasharray="10 2"/>
<path transform="translate(97.5 0) scale(0.78900 1)" vector-effect="non-scaling-stroke" d="M0 872l1 14 1-9 1-1 1 15 1-9 1-19 1 25 1-2 1 4 1-1 1 1 1 5 1-16 1-8 1 24 1-29 1 22 1 3 1-17 1 20 1 7 1-25 1 11 1 19 1-25 1-7 1 21 1-23 1 6 1 21 1-27 1 16 1-14 1-7 1 14 1 11 1-9 1 22 1-2 1-9 1 12 1-13 1-3 1 6 1-14 1 14h1l1-6 1-4 1-6 1 8 1-1 1-7 1 15 1-1 1-16 1 15 1 7 1-16 1-11 1 17 1 2 1-3 1-16 1 25 1 5 1-30 1 21 1-17 1 10 1 7 1 1 1-28 1 28 1-23 1 20 1 2 1-19 1 14 1-1 1 22 1-17 1-10 1 19 1-5 1-3 1-2 1-4 1 22 1-20 1 10 1-10 1 16 1-13 1 3 1-19 1 30 1-4 1-14 1-2h1l1 17 1-20 1 23 1-25 1 18 1 2 1-29 1 14 1-11 1 32 1-3 1-2 1-25 1 18 1-39 1 22 1 22 1 2 1-6 1-20 1-1 1 22 1-20 1 18 1-24 1 11 1 5 1 6 1-4 1-1 1-12 1 22 1-23 1-1 1 16 1 7 1-6 1-27 1 10 1-6 1 24 1-14 1 18 1-25h1l1 23 1-21 1 26 1-7 1-1 1-2 1-6 1 8 1 17 1-14 1 9 1-22 1 9 1 19 1-11 1-9 1-8 1 15 1-7 1 15 1-26 1 19 1 4 1-12 1-4 1-7 1 18 1-7 1 16 1-18 1 5 1 5 1-11 1-11 1 19 1-16 1 3 1 7 1-13 1 22 1-14 1 11 1-9 1 16 1-15 1 4 1-21 1 20 1-2 1-13 1 21 1-1 1 4 1 3 1-2 1-5 1 8 1-25 1 1 1 14 1-2 1-9 1-9 1 5 1 1 1 11 1-14 1 15 1 1 1-4 1-8 1 16 1 5 1-21 1-12 1-7 1 8 1 23 1-3 1-29 1 9 1 14 1-14 1 3 1-10 1 11 1-12 1 15 1-11 1 13 1 11 1-12 1 3 1 6 1-6h1l1 19 1-36 1 27 1 6 1-11 1 19 1-31 1 6 1 5 1 20 1-2h1l1-5 1-6 1-9 1 14 1-31 1 29 1-14 1-14 1 2 1 18 1 15 1-8 1-17 1-6 1 12 1-9 1-3 1 2 1 5 1 23 1 8 1-51 1 26 1 17 1-11 1-16 1 37 1-30 1-6 1 25 1-21 1 23 1-20 1 7 1 11 1 9 1-17 1 17 1-25 1 2 1 8 1 16 1-22 1-3 1 6 1 1 1 24 1-20 1 19 1-10 1-1 1-18 1 11 1-12 1 31 1-7 1-15 1-9 1 22 1 14 1-19 1-3 1-3 1 13 1-6 1 5 1 3 1-16 1-8 1 12 1 5 1 5 1-13 1-2 1 10 1-6 1 4 1-8 1 10 1 11 1-15 1 14 1-4 1 2 1-10 1 18 1-10 1 5 1-1 1 12 1-14 1-1 1 3 1-8 1-8h1l1 2 1 3 1-8 1-4 1 9 1 15 1-15 1 13 1 2 1-30 1 28 1 8 1-34 1-4 1 11 1 25 1-20 1-13 1 20 1 2 1 8 1-17 1-5 1-2 1 8 1-1 1 9 1-14 1 26 1-17 1 6 1 2 1 6 1-29 1 15 1 16 1-7 1-11 1 8 1-14 1 29 1-33 1-8 1 6 1 25 1-5 1 6 1-1 1-32 1 26 1 3 1-23 1 21 1-27 1 39 1-31 1 21 1-4 1 5 1-10 1 8 1 7 1-14 1-13 1 9 1 6h1l1-14 1-12 1 35 1-26 1 28 1-13 1 15 1-22 1 13 1-17 1-2 1 23 1-3 1-2 1-25 1 26 1-19 1 20 1-8 1 21 1-4 1-20 1 1 1 17 1-2 1-18 1-1 1 1 1 22 1-11 1-11 1 17 1 19 1-5 1-32 1 13 1-8 1 25 1-15 1 9 1-28 1 28h1l1-10 1 9 1-15 1 13 1 12 1-17 1 21 1-17 1-16 1-2 1 4 1-5 1-10 1 14 1 15 1 1 1-5 1 19 1-2 1-34 1 21 1-20 1 28h1l1-26 1 12h1l1-17 1 24 1 9 1-11 1-14 1 14 1 17 1-24 1 10 1-13 1 23 1 2 1-24 1 18 1-14 1-3 1 21 1-6 1-1 1-34 1 12 1-3 1 20 1-15 1-8 1 14 1 14 1-34 1 2 1 27 1-11 1 11 1-3 1-24 1 26 1-24 1 29 1-3 1-9 1 17 1-28 1-4 1 26 1-9 1-9 1 2 1-1 1 14 1-16 1 7 1 15 1-8 1-9 1 19 1-43 1 27 1-5 1 1 1 7 1 6 1 8 1-26 1 18 1 4 1 8 1-6 1-22 1 29 1-26 1 25 1-10 1 2 1 4 1-12 1 13 1-23h1l1 28 1-32 1-1 1 19 1-17 1 10 1-19 1 18 1 7 1 10 1-8 1-8 1 18 1-20 1 16 1-26 1-2 1 9 1-11 1-3 1 3 1 20 1 8 1-19 1 20 1-9 1-7 1 24 1-14 1 4 1-31 1-3 1 17 1 2 1 6 1-16 1 9 1 13 1-6 1-24 1 3 1 12 1-6 1 20 1-1h1l1-20 1 2 1 29 1-12 1-11 1-6 1 28 1-7 1-24 1 24 1 10 1-31 1-2 1-1 1-2 1 3 1 5 1 9 1-6 1-10 1 13 1-16 1 11 1 9 1-7 1 11 1-3 1 6 1-21 1 7 1 3 1-25 1 16 1-3 1-12 1 33 1-16 1 2 1-1 1 5 1-1 1-4 1-7 1 18h1l1 4 1-24 1 7 1 14 1-24h1l1 1 1 4 1-35 1-3 1 31" stroke="#7b4666" stroke-width="3" stroke-dasharray="10 2"/>
<path transform="translate(97.5 0) scale(0.78900 1)" vector-effect="non-scaling-stroke" d="M0 905l1-2 1 15 1-5 1 5 1-17 1 7 1 8 1 3 1-15 1 18 1-6 1 2 1 8 1 2 1-14 1 3 1-8 1 7 1 6 1 6 1-10 1 1 1-4 1-1 1 14h1l1 2 1-21 1 21 1-5 1-15 1 10 1-7 1 8 1-6 1-1 1 34 1-21 1 2 1-13 1-4 1 14 1 1 1-7 1-6 1 17 1-8 1-15 1 10 1 12 1-9 1-2 1 4 1 3 1-18 1 6 1 9 1-9 1-2 1 10 1-21 1 19 1 8 1-4 1-2h2l1 7 1-10 1-5 1 8 1 3 1-15 1 6 1 4 1-1 1-1 1 11 1-17 1 17 1-13 1 15 1-11 1-1 1-1 1-3 1-1 1 19 1-11 1-2 1 11 1-3 1-14 1 1 1 4 1-2 1 5 1 6 1-4 1 5 1-2 1 6 1-13 1 13 1-1 1-6 1 3 1-9 1 3 1 11 1-19 1 16 1-9 1 5 1-8h1l1 3 1 7 1 2 1 1 1-3 1-11 1-17 1 20 1-1 1-7 1 9 1-7 1 12 1-20 1 17 1-12 1 16 1-7 1-5 1-1 1 2 1 8 1-16 1 5 1-3 1 32 1-31 1 12h1l1-13 1 10 1 3 1 10 1-11 1-7 1 10 1-12 1-2 1 10 1-5 1 3 1 1 1 12 1-1 1-9 1-4 1 18 1-19 1 8 1-10 1 14 1-16 1 2 1 1 1 5 1-2 1-1 1 12 1-15 1 17 1-3 1-19 1 20 1-1 1-17 1-4 1 1 1 4 1-5 1 13 1-17 1 14 1-5 1 4 1 3 1-11 1 3 1 9 1-18 1 12 1-2 1-4 1 1 1 9 1 3 1-9h1l1-7 1 5 1-3 1 17 1-3 1-13 1 1 1 10 1-13 1 19 1-19 1 12 1-1 1 5 1 2 1-17 1 10 1 1 1-15 1 18 1-18 1-6 1 19 1-14 1 17 1-9 1-3 1 14 1 1 1-6 1-2 1-8 1 9 1 4 1 2 1-14 1 16 1-11 1 5 1 11 1 1 1-16 1 17 1-4 1-12h1l1 11 1-11 1 6 1-1 1 8 1-10 1-11 1 14 1 5 1-5 1-8 1-2 1 11 1-10 1 1 1-5 1 20 1-14 1 11 1-1 1 2 1 3 1-7 1 8 1-11 1-9h1l1 3 1 13 1-3 1-2 1-12 1 5 1 9 1-6 1-8 1 17 1 3 1-15 1 1 1-1 1 6 1 1 1 13 1-4 1 9h1l1-23 1 2 1 17 1-5 1-8 1 5h1l1-3 1 10 1-2 1-11 1 2 1 12 1-12 1 19 1-20 1 15 1-12 1 5 1 1 1 5 1 5 1-17 1 3 1 7 1 1 1-7 1-7 1 9 1 7 1-6 1-3 1-4 1 6 1-4 1 18 1-16 1 11 1 1 1-7h1l1 3 1-7 1-2 1 9h1l1-7 1 7 1 3 1 4 1-1h1l1-15 1 3 1 1 1-4 1 7 1 1 1-1 1-6h1l1 4 1-3 1 16 1-20 1 18 1 1 1-4 1-10 1 14 1-19 1 2 1-3 1 5 1 13 1 2 1-15 1 15 1-27 1 18 1 2 1-2 1-5 1-2 1 6 1 3 1 7 1-18 1 20 1-19 1 8 1-9 1 16 1-13 1 14 1-11 1-6 1 1 1 11 1-7 1 12 1-4 1-16 1 17 1-15 1 14 1-14 1 8 1-8 1 1 1 15 1-9 1-7 1 1 1 11 1-10 1 13 1-10 1 8 1-10 1 8 1-7 1 7 1 2 1-4 1 7 1 3h1l1-16 1 7 1-5 1-6 1 7 1 5 1-7 1 3 1 24 1-33 1 6 1-7 1 14 1 1 1-9h1l1-2 1 4 1-1 1-1 1 3h1l1-2 1 13 1-13 1 9 1-10 1-11 1 6 1 4 1-2 1 11 1-4 1-2 1 12 1 4 1-16 1 19 1-6 1 8 1-18 1 10 1-8h2l1-1 1 19 1-25h1l1 9 1-5 1 14 1-7 1-4 1 17 1-7 1 5 1-10 1-7 1-3 1 3 1 1 1 17 1-7 1-12 1 10 1 3 1 3 1-6 1-8h1l1 6 1 13 1-20 1 2 1 14 1 10 1-23 1 3 1-5 1 7 1 7 1-6 1-7 1 10 1 5 1-18 1 15h1l1-9 1-7 1 11 1-4 1-11 1 7 1 11h1l1-17 1 2 1 18 1-2h1l1-5 1-5 1-7 1 12 1-10 1 16 1-4 1-15 1 17h1l1-8 1 5 1-2 1 10 1-6 1 9 1-2 1-9h1l1 5 1-32 1 24 1-1 1-8 1 12 1-9 1 11 1 2 1-6 1-2 1 11 1-17 1 18 1-10 1 8 1-14 1 5 1-5 1 4 1 16 1-8 1 2 1-10 1 14 1-18 1 17 1-16 1 13 1 9 1-16 1-1 1-4 1 1 1 7 1-7 1-1 1 8 1-10 1 14 1-18 1 16h1l1 2h1l1-10 1 13 1-18 1 8 1 16 1 5 1-28 1 1 1 2 1 1 1-2 1 6 1-4 1-4 1 1 1-4 1 17 1 3 1-8 1-17 1 17 1-1 1-7 1 3 1-6 1-7 1-2 1 6 1 1 1-2 1 12 1-7 1 3 1 12 1-14 1-10 1 17 1-14 1 9 1-6h1l1 3 1 5 1 3 1 4 1-1 1-12 1-3h2l1-2 1 7 1-9 1 8 1-9 1 2 1 2 1 9 1 3 1 3 1-12 1-4 1 2 1 16 1-6 1-12 1 16 1-7h1l1-11 1 10 1-2 1-12 1 13 1-13 1 16" stroke="#ff96d2" stroke-width="4"/>
</g>
<line x1="326.5" y1="831" x2="326.5" y2="1024" stroke="#fff" stroke-width="2.2" stroke-dasharray="10 2" stroke-dashoffset="7.4"/>
<line x1="460.6" y1="831" x2="460.6" y2="1024" stroke="#fff" stroke-width="2.2" stroke-dasharray="10 2" stroke-dashoffset="7.4"/>
<rect x="326.5" y="999.5" width="155" height="26" fill="rgba(0,0,0,0.67)"/>
<text x="330.7" y="1017.3" font-size="13" fill="#f2f2f2" text-anchor="start" textLength="146.5" lengthAdjust="spacingAndGlyphs">T1=-7m,5s,774ms,784µs</text>
<rect x="298.6" y="999.5" width="164.5" height="26" fill="rgba(0,0,0,0.67)"/>
<text x="301.6" y="1017.3" font-size="13" fill="#f2f2f2" text-anchor="start" textLength="153.5" lengthAdjust="spacingAndGlyphs">T2=-4m,15s,709ms,292µs</text>
<rect x="459.5" y="999.5" width="2.2" height="26" fill="#c4c4c4"/>
<rect x="316.1" y="831" width="155" height="50.9" fill="rgba(0,0,0,0.67)"/>
<text x="320.6" y="861.7" font-size="13" fill="#f2f2f2" text-anchor="start" textLength="22.1" lengthAdjust="spacingAndGlyphs">ΔT=</text>
<text x="345.9" y="851.7" font-size="13" fill="#f2f2f2" text-anchor="start" textLength="120.2" lengthAdjust="spacingAndGlyphs">2m,50s,65ms,492µs</text>
<text x="346.1" y="871.8" font-size="13" fill="#f2f2f2" text-anchor="start" textLength="88.6" lengthAdjust="spacingAndGlyphs">0.00588009 Hz</text>
</g>
<rect x="97" y="831" width="1" height="194" fill="#969696"/>
<rect x="97" y="1024" width="525" height="1" fill="#969696"/>
<text x="189.4" y="1040.5" font-size="13" fill="#f2f2f2" text-anchor="middle" textLength="30.6" lengthAdjust="spacingAndGlyphs">-10m</text>
<text x="284.1" y="1040.5" font-size="13" fill="#f2f2f2" text-anchor="middle" textLength="23.1" lengthAdjust="spacingAndGlyphs">-8m</text>
<text x="378.8" y="1040.5" font-size="13" fill="#f2f2f2" text-anchor="middle" textLength="23.1" lengthAdjust="spacingAndGlyphs">-6m</text>
<text x="473.4" y="1040.5" font-size="13" fill="#f2f2f2" text-anchor="middle" textLength="23.1" lengthAdjust="spacingAndGlyphs">-4m</text>
<text x="568.1" y="1040.5" font-size="13" fill="#f2f2f2" text-anchor="middle" textLength="23.1" lengthAdjust="spacingAndGlyphs">-2m</text>
<g clip-path="url(#ya03)">
<text x="92" y="1025.4" font-size="13" fill="#f2f2f2" text-anchor="end">105.4</text>
<text x="92" y="954.4" font-size="13" fill="#f2f2f2" text-anchor="end">105.5</text>
<text x="92" y="883.4" font-size="13" fill="#f2f2f2" text-anchor="end">105.6</text>
</g>
<text x="360" y="821.6" font-size="12" fill="#f2f2f2" text-anchor="middle" textLength="258" lengthAdjust="spacingAndGlyphs">H1:SUS-FC2_M1_DAMP_Y_INMON [s-trend]</text>
<text transform="translate(39.4 928) rotate(-90)" font-size="13" fill="#f2f2f2" text-anchor="middle" textLength="40.6" lengthAdjust="spacingAndGlyphs">counts</text>
<g clip-path="url(#c13)">
<rect x="723" y="831" width="1" height="193" fill="#fff" fill-opacity="0.060000000000000005"/>
<rect x="748" y="831" width="1" height="193" fill="#fff" fill-opacity="0.060000000000000005"/>
<rect x="773" y="831" width="1" height="193" fill="#fff" fill-opacity="0.060000000000000005"/>
<rect x="798" y="831" width="1" height="193" fill="#fff" fill-opacity="0.1"/>
<rect x="823" y="831" width="1" height="193" fill="#fff" fill-opacity="0.060000000000000005"/>
<rect x="848" y="831" width="1" height="193" fill="#fff" fill-opacity="0.060000000000000005"/>
<rect x="873" y="831" width="1" height="193" fill="#fff" fill-opacity="0.060000000000000005"/>
<rect x="898" y="831" width="1" height="193" fill="#fff" fill-opacity="0.1"/>
<rect x="923" y="831" width="1" height="193" fill="#fff" fill-opacity="0.060000000000000005"/>
<rect x="948" y="831" width="1" height="193" fill="#fff" fill-opacity="0.060000000000000005"/>
<rect x="973" y="831" width="1" height="193" fill="#fff" fill-opacity="0.060000000000000005"/>
<rect x="999" y="831" width="1" height="193" fill="#fff" fill-opacity="0.1"/>
<rect x="1024" y="831" width="1" height="193" fill="#fff" fill-opacity="0.060000000000000005"/>
<rect x="1049" y="831" width="1" height="193" fill="#fff" fill-opacity="0.060000000000000005"/>
<rect x="1074" y="831" width="1" height="193" fill="#fff" fill-opacity="0.060000000000000005"/>
<rect x="1099" y="831" width="1" height="193" fill="#fff" fill-opacity="0.1"/>
<rect x="1124" y="831" width="1" height="193" fill="#fff" fill-opacity="0.060000000000000005"/>
<rect x="1149" y="831" width="1" height="193" fill="#fff" fill-opacity="0.060000000000000005"/>
<rect x="1174" y="831" width="1" height="193" fill="#fff" fill-opacity="0.060000000000000005"/>
<rect x="1199" y="831" width="1" height="193" fill="#fff" fill-opacity="0.1"/>
<rect x="1224" y="831" width="1" height="193" fill="#fff" fill-opacity="0.060000000000000005"/>
<rect x="1249" y="831" width="1" height="193" fill="#fff" fill-opacity="0.060000000000000005"/>
<rect x="702" y="991" width="555" height="1" fill="#fff" fill-opacity="0.1"/>
<rect x="702" y="860" width="555" height="1" fill="#fff" fill-opacity="0.065"/>
<rect x="702" y="1017" width="555" height="1" fill="#fff" fill-opacity="0.05"/>
<rect x="702" y="965" width="555" height="1" fill="#fff" fill-opacity="0.05"/>
<rect x="702" y="939" width="555" height="1" fill="#fff" fill-opacity="0.05"/>
<rect x="702" y="913" width="555" height="1" fill="#fff" fill-opacity="0.05"/>
<rect x="702" y="886" width="555" height="1" fill="#fff" fill-opacity="0.05"/>
<rect x="702" y="834" width="555" height="1" fill="#fff" fill-opacity="0.05"/>
<g shape-rendering="crispEdges" fill="none" stroke-linejoin="miter">
<path transform="translate(701.5 0) scale(0.83559 1)" vector-effect="non-scaling-stroke" d="M0 977l1-33 1 19 1 16 1-9 1 1 1-4 1 16 1-17 1-15 1-6h1l1 39 1 1 1-17 1-20 1 30 1 6 1-43 1 40 1 3 1-41h1l1 36 1-20 1-9 1-2 1 22 1 12 1-20 1 12 1-9 1-1 1-6 1-5 1 8 1-8 1 15h1l1 6 1-2 1-1 1-30 1 16 1 13 1-12 1-7 1 24 1-30 1 4 1-2 1 10 1 4 1 8 1-27 1 19 1-9 1 20 1 8 1-39 1 14 1-8 1 22 1-3 1-13 1 14 1-1 1-24 1 22 1-18 1 27 1-8 1-9 1 27 1-32 1-2 1-5 1-2 1 32 1-24 1 8 1-2 1-11 1 21 1 5 1 15 1-12 1-26 1 40 1-44 1 32 1-22 1 1 1 25 1-19 1 10 1-20 1-7 1 23 1-23 1 38 1 10 1-40 1 31 1-30 1 29 1-28 1 12 1 26 1-22 1 13h1l1-33 1 2 1 15 1-5 1-10 1-7 1 26 1-8 1 5 1-17 1 6 1-12 1 16 1-14 1 25 1-3 1 1 1-6 1-4 1 16 1-7 1 8 1-32 1 14 1 13 1 18 1-1 1-47 1 10 1-8 1 28 1-23 1 8 1 34 1-31 1 29 1-11 1-34 1 24 1-24 1 7 1 15 1-18 1 23 1-3 1-27 1 43 1-7 1-25 1 39 1-8 1 9 1-31 1 14 1 10 1-3 1-33 1 28 1-26 1 11 1 7 1-17 1 25 1-27 1 11 1-4 1 34 1-8 1-1 1-22 1 15 1-20 1 14 1-12 1 22 1-37 1 18 1 19 1-29 1-9 1 22 1-21 1 32 1-23 1 32 1-12 1-26 1 8 1 16 1 4 1 2 1-23 1 15 1-8 1-7 1 18 1-6 1-22 1 26 1 9 1-18 1-13 1 35 1-33 1 44 1-34 1-7 1 4 1 10 1 15 1-38 1 27 1-1 1 29 1-34 1-12 1 26 1 2 1-33 1-3 1 3 1-4 1 24 1 9 1-20 1 23 1-26 1 38 1-29 1-3 1-17 1 30 1 14 1-10 1-23 1 38 1-35 1-9 1 7h1l1 21 1 5 1-24 1 21 1 2 1-11 1 12 1-2 1-24 1 12 1 18 1 1 1-41 1 1 1 8 1 22 1-10 1 12 1-32 1 25 1-11 1 24 1-14 1-24 1 9 1 12 1-5 1 2 1 9 1-4 1-19 1 2 1 12 1 2 1 6 1-21 1 31 1-9 1 3 1-29 1 34 1-35 1 27 1-17 1-6 1 20 1 7 1-17 1 22 1-31 1 36 1-17 1 22 1-29 1-14 1 12 1-15 1 5 1 30 1-32 1 6 1-5 1-5 1 14 1-5 1 4 1 25 1-41 1 24 1-16 1 8 1 25 1-16 1-20 1 4 1-2 1 10 1 18 1 16 1-3 1-11 1-35 1 25 1-13 1 19 1 9 1-16 1-24 1 1 1 13 1-1 1-6 1-7 1 18 1-19 1 26 1-25 1 9 1-4 1 30 1-4 1-25 1 11 1-4 1 23 1 5 1 4 1-4 1-4 1-20 1-17 1 26 1-3 1 5 1-12 1 8 1-6 1 15 1-12 1-22 1 11 1 16 1 19 1-6 1-43 1 10 1 2 1 24 1 1 1-3 1-11 1-11 1 11 1-11 1 30 1-30 1 4 1 23 1-4 1 3 1-25 1-6 1 19 1-23 1 38 1-12 1-18 1 11 1-6 1 25 1-6 1-30 1 31 1-4 1 6 1-38 1 29 1-17 1 9 1-3 1-5 1-6 1-7 1 35 1-25 1-2 1 42 1-31 1-3 1 25 1 2 1-16 1-1 1 14 1-18 1 21 1-33 1-3 1 35 1-27 1-2 1-2 1 31 1 8 1-1 1-47 1 27 1 8 1-4 1 1 1-22h1l1 34 1 6 1-11h1l1-5 1-3 1 16 1-7 1-36 1 9 1-5 1 40 1 11 1-30 1-14 1 9 1 1 1 6 1-2 1-17 1-2h1l1 15 1-19 1-3 1-1 1 38 1-6 1-16 1-3 1 11 1-5 1-13 1 1 1 12 1-15 1 48 1-38 1 15 1 8 1 9 1-42 1 9 1-9h1l1-5 1 35 1-9 1 6 1-26 1 16 1 3 1-12 1-5 1 2 1 21 1 8 1 2 1-4 1-12 1-19 1 35 1-43 1 24 1 20 1-29 1 4 1 28 1-20 1-16 1-10 1-2 1 30 1 2 1-29 1-2 1 26 1-18 1 14 1-22 1 1 1 16 1-11 1 4 1 10 1 2 1-5 1-3 1-9 1-4 1-1 1 33 1 1 1-22 1 26 1-6 1-12 1 19 1 9 1-11 1 6 1-26 1-12 1 3 1 25 1 9 1-8 1-13 1-13 1 10 1 11 1-25 1 16 1 5 1-20 1 34 1-3 1-35 1 39 1-42 1 5 1 11 1 9 1 12 1-6 1-26 1 34 1-2 1 9 1-30 1 29 1-33 1 15 1-7 1-3 1-10 1 44 1-13 1 2 1-6 1-13 1 9 1-9 1-9 1 16 1 14 1-11 1-9 1 17 1-31 1-1 1 23 1 2 1-19 1 12 1-19 1 39 1-38 1 25 1 17 1-30 1-6 1 36 1-34 1-1 1 20 1 23 1-7 1-30 1 17 1-13 1 9 1 11 1-36 1 31 1-18 1 5 1-8 1 23 1-27 1 25 1-9 1-26 1 10 1 11 1-9 1-10 1 20 1-8 1 4 1-16 1 30 1-14 1 2 1-7 1 35 1-31 1-11 1-3 1 9 1-4 1-2 1 33 1-4 1-5 1-23 1-1 1 30 1-4 1-19 1-1 1 8 1 5 1 16 1-23 1-15 1 5 1 10 1 26 1-3 1-23 1 18 1-28" stroke="#175019" stroke-width="3" stroke-dasharray="10 2"/>
<path transform="translate(701.5 0) scale(0.83559 1)" vector-effect="non-scaling-stroke" d="M0 908l1-8 1-5 1 5h1l1 7 1-1 1-2 1 3 1-23 1 17 1 4 1-1 1-6 1 7 1-10 1 11 1-12 1-6 1 12 1-20 1 24 1-5 1-4 1 4 1 8 1-20 1-6 1 13 1 13 1-21 1 10 1-3 1 12 1-23h1l1 19 1-14 1 13 1-4 1-6 1 7 1-12 1 4 1 9 1-7 1 4 1-8 1 12 1-3 1-17 1 8 1 1 1 7 1 2 1 6 1-7 1-1 1-14 1 2 1 21 1-27 1 8 1 4 1 2 1 11 1-21 1 8 1 15 1-19 1 15 1-21 1 25 1-8 1-7 1 6 1-10 1 8 1 13 1-28 1 5 1 3 1 22 1-28 1 10 1 15h1l1-4 1-17 1 12 1-8 1 14 1-2 1-8 1-3 1-6 1 1 1 5 1-4 1 5 1 6 1 5 1-9 1 6 1 2 1 4 1-11 1 8h1l1-2 1-9h1l1 8 1-21 1 30 1 3 1-18 1 10 1-1 1-6 1 3 1-18 1 7 1 2 1 6 1-5 1 1h1l1-8 1 8 1 3 1-2 1-5 1 12h1l1-17 1 3 1 2 1 15 1-14 1 15h1l1-7 1-14 1 13 1-2 1 1 1 8 1-13 1 12 1-7 1-2 1 4 1-8 1-3 1-11 1 30 1 2 1-28 1 1 1 20 1 3 1-7 1 7 1-10 1 5 1-12 1-3 1-3 1 5 1 18 1-8 1 2 1 9 1-3 1-8 1-13 1 24 1-19 1 2h1l1 15 1-8 1 4 1-15 1 12 1 4 1 3 1 1 1-26 1 14 1 5 1 3 1 4 1-25 1 7 1 2 1-1 1-2 1 1 1 16 1-5 1-9 1 15 1-5 1 3 1 5 1 2 1-3 1-16 1 8h1l1-11 1-2 1 19 1-14 1 6 1-6 1-1 1 15 1-17 1-5 1 10 1 10 1-7 1 1 1 5 1-13 1 2 1 10 1-6 1-3h1l1-2 1 14 1 2 1-7 1-4 1 14 1-20 1 7 1 6 1-22 1 25 1-8 1-6 1-9 1 15 1-8 1 10 1-12 1 10 1 10 1-30 1 12 1 19 1-5 1-4 1-16 1 11 1-7 1 10 1-5 1-1h1l1 14 1-15h1l1 8 1-17 1 11 1-11 1 26 1 1 1-8h1l1 3 1-3 1-4 1 4 1 6 1-4 1-5 1-8 1-2 1 19 1-7 1-3 1-6 1 1 1 10h1l1-9 1-4 1 7 1-1 1-10 1 10 1-15 1 8 1 13 1-7 1 6 1 5 1-13 1 6 1 1 1-11 1 10 1-6 1-11 1 13 1-2 1 6 1-1 1 11 1-20 1 11 1 10 1-6 1 1 1-5 1 5 1 1 1-12 1 13 1-2 1-6 1-12 1 14 1-5 1-5 1 15 1-25 1 5 1 16 1 2 1 7 1-8 1-10 1 16 1-8 1 2 1-11 1 14 1-4 1-3 1 1 1-13 1 3 1 7 1 5 1-8 1 1 1 3 1-3 1-19 1 19 1-4 1 8 1-9 1 17 1-13 1-9 1 5 1 18 1-12 1 14 1-9 1-3 1 2 1 9h1l1 1 1-15 1 7 1-13 1 1 1 1 1-1 1 8 1 7 1-13 1 11 1 2 1-4 1 8 1-12 1-10 1 21 1-14 1-1 1-2h1l1 7 1-7 1 7 1 8 1-16 1 16 1 3 1-5 1-14 1 10 1-10 1 14 1-12 1 17 1-4 1-7 1 8 1-1 1-12 1-3 1 14 1-11 1-12 1 26 1-11 1-14 1 7 1 5 1-6 1 8 1 9 1-9 1-8 1 18 1-18 1 9 1 2 1-5 1-2 1 2 1 11 1-16 1 12 1-10 1 11h1l1 9h1l1-22 1 19 1-22 1-11 1 27 1-8 1 8 1-15 1 13 1 2 1-6 1 18 1-19 1 16 1-12 1-9 1 1 1 13 1-13 1-1 1 13 1 8 1-24 1 15 1-11 1-7 1 16 1-10 1 5 1-2 1-1 1 10 1-13 1 10 1 7 1-11 1 9 1-2 1-7 1 2 1 3 1-8 1 15 1-23 1 24 1-13 1-8 1 11 1-6 1-8 1 16 1-10 1-10 1 14 1 2 1 1 1-7h1l1-8 1 25 1-4 1 4 1-4 1-14 1 17 1-9 1-8 1 12 1-7 1 6 1-16 1 12 1-13 1 23 1-16 1 5 1 4 1 11 1-14 1-8 1 15 1-14 1 1 1 9 1 2 1-7 1 8 1-26 1 18 1-5 1 16 1-21 1 17 1 5 1-11 1 3 1-8 1 9 1-9 1-2 1 20 1-5 1-8 1-5 1 7 1-10 1 9 1-8 1 15 1-5 1-4 1 12 1 2 1-2 1 1 1-6 1-14 1 2h1l1 4 1 15 1-6 1-13 1 4 1 12 1-4 1-1 1 1 1 2 1 7 1-17 1-8 1 3 1 6 1 15 1-22 1 20 1-2h1l1-5 1-4 1 7 1 6 1-8 1 7 1-2 1-5 1 5 1 2 1-17 1 2 1 15 1-16 1 4 1 8h1l1-12 1 1 1 12 1-21 1 19 1-5 1 8 1 3 1-3 1-10 1 11 1-4 1-12 1 20 1-4 1-20 1 5 1 13 1-9 1 3 1 3 1-4 1 7 1-18 1 19 1-5 1 4h1l1 3 1-21 1 19 1 6 1-19 1 18 1-5 1-11 1-3 1 18 1-13 1 14 1-9 1 6 1 3 1-18 1 12 1-15 1 13 1-1 1-9 1 8 1 7 1-12 1 6 1 3 1-1 1-5 1 5 1-13 1 13 1-10 1 12h1l1 5 1-9 1-7 1 11 1-3 1 1 1-25" stroke="#175019" stroke-width="3" stroke-dasharray="10 2"/>
<path transform="translate(701.5 0) scale(0.83559 1)" vector-effect="non-scaling-stroke" d="M0 926l1-4 1 4 1 1 1-7 1 1 1 4 1-2 1 2h1l1-1 1 5 1 2 1-4 1-9 1 2 1 5 1 8 1-12 1 5 1-1 1 1 1-1 1 2 1-5h1l1 5 1-3 1-2 1-3h1l1 3 1 7 1-2 1-1 1-1h3l1-4 1 3 1-4 1 3 1 1h2l1 4 1-3 1 2h1l1-2 1-3 1 4 1 1 1 3 1-6 1 1h1l1 3 1-5h1l1 1 1 5 1-3 1 1 1 4h1l1-6 1 3 1 3 1-4 1-3 1-2 1 7 1-2 1-3 1 2 1-1 1 5h1l1-10 1 3 1 2h1l1 2 1 1 1 3 1-3 1-2 1-1 1 1 1-1 1-1 1-1 1-4 1 3 1 4h1l1 3 1-1 1-1 1-5 1 3 1-1 1 4 1-1 1 3 1-5 1-4 1 1 1 4 1 2 1-5 1 2 1-7 1 11h1l1-3 1 1 1-5 1 4 1 1 1 2 1-6 1-2 1 3 1 10 1-13 1 5 1 1 1-6 1 1 1 4 1-4 1 5 1 2 1-2 1-3 1 4 1 4 1-11 1 2 1 7 1-3 1-2 1-1 1 4 1-1 1-2 1 4 1-6 1 2 1 1 1-3 1 5 1 2 1-10h1l1 5 1 5 1-5 1 6 1-1 1-4 1 8 1-5 1-1 1-7 1 5 1-3 1 3 1 1h1l1-3 1-1 1 2 1-1 1 4 1-3 1 4 1-5 1 3 1-2 1-1 1 1 1 1 1-1 1-1 1-1 1 4 1-3 1 3h1l1-3h1l1 1h1l1 2 1-6 1 5 1-4 1 4 1 1h1l1-7 1 5h1l1-4 1 2 1 3 1 1 1-4 1 9 1-6h1l1-1h1l1 2 1 2 1-6 1-2 1 5h1l1-1 1 3 1-1h1l1-3 1 1 1 3 1 3 1-5 1-2 1 9 1-4 1-4 1-3h1l1 3 1-3 1 6 1-6 1-2 1 2 1 6 1 7 1-12 1 2 1 2 1-1 1-2 1 7 1-6 1-2h2l1 8 1-3 1-5 1 2 1-4 1 2 1 3 1-5h1l1-2 1 2 1 7 1-2 1 4 1 1 1-9 1 2 1 2h1l1-7 1 1h2l1 4 1 5 1 2 1-8 1-2 1 3 1 1h1l1 1 1-2 1 4 1-6 1 5 1-3 1 3 1-2 1-2 1 1 1-1 1 1 1-1 1 5 1 2 1-5 1 2 1 2 1-7 1 3 1 5 1-3 1-3 1-3 1-2 1 5 1 4 1 2 1-3 1-7 1 5 1-3 1-2 1 9 1-2 1-1h1l1-1 1 2h1l1-3h1l1 1 1 5 1-5h1l1-2 1 1 1 1 1 1 1-1 1-3 1 4 1 5 1-5 1 4 1-2 1-1 1-3 1-5 1 5 1 2 1-2 1 4 1-3 1 2 1-9 1 8 1 1 1-4 1 6 1-2 1 1 1 6 1-4 1-3 1 1 1 6h1l1-7 1-3 1 2 1-6 1 9 1-8 1 4 1-3 1 6 1 3 1-5 1-1 1 9 1-3 1-5 1 3 1-1 1-3 1-5 1 4 1 2 1 9 1-8h1l1-3 1-2 1 1h1l1-4 1 6 1 2 1-7 1 6 1-3 1 3 1-6 1 3h1l1 2 1-1 1 3 1 1 1 2 1-4 1-1 1-6 1 7 1-8 1 4 1 10 1-5 1 2 1-7 1-2 1 2 1 2 1 4 1-1 1-2 1-2 1 7 1-7 1 4 1-3 1 1h1l1 2 1-2h1l1 3 1 3 1-1 1-7 1-5 1 5 1 3 1-10 1 7 1 4 1-2 1-1 1 3 1 3 1-7 1-2 1 3 1 1 1-2 1 3 1 1 1 4 1-7 1-3 1 1 1 5 1-4 1 2h1l1 1 1-3 1-1 1-2 1 3 1 8 1-8 1-1 1-1 1 7 1-1 1-2 1 1 1-2 1 3h1l1-2 1-3 1 5 1-5 1 1 1 1 1 1 1-2 1 3 1-2h1l1 1 1-2 1 5 1-3h1l1 1 1-6 1 1 1 2 1-1h1l1 4 1 4 1-1 1-4 1 1 1-1 1 3h1l1-2 1-1 1-7 1 6 1 1 1 3h1l1-5 1 6 1-5 1 4 1-6 1 8 1 1h1l1-5 1-1h1l1 3 1 3 1-8 1-1 1-2 1-1 1 1 1 7 1-2 1 4 1-8 1 7 1 1 1 1 1-6 1-7 1 4 1-2 1 2 1 2 1 6 1-7 1-1 1 4 1-2 1 2h1l1 4 1-8h1l1 3 1 3h1l1-2 1-2 1 5 1 3 1-4 1-5 1 6 1-1 1-2 1 2 1-3 1 3h4l1 3 1-5 1 3 1-6 1 5 1-4 1 1 1 1 1 3 1 2 1-3 1-4 1 1 1-2 1 3 1 3 1-1 1-4 1 6h1l1-1 1-1 1 2 1-7 1 2 1-3 1 7 1-3 1 1 1-1 1 2h1l1-1 1-3 1 4 1-1 1 2 1-4 1 2 1 3 1-3 1 1 1-6 1 3 1 2 1 2 1-1 1-2 1 7 1-5 1-10 1 6 1 1 1 2 1-2 1-1 1 12 1-7 1-4 1-1 1 1 1 1 1 3 1-4 1 6 1-7 1-3 1 8 1 5 1-4 1 1 1 2h1l1-12 1 2 1 2 1 2 1 1 1 1h2l1-5 1 10 1-4 1-4 1-1 1 1 1 1 1-3 1-2" stroke="#2da135" stroke-width="4"/>
</g>
<line x1="944" y1="831" x2="944" y2="1024" stroke="#fff" stroke-width="2.2" stroke-dasharray="10 2" stroke-dashoffset="7.4"/>
<line x1="1086.1" y1="831" x2="1086.1" y2="1024" stroke="#fff" stroke-width="2.2" stroke-dasharray="10 2" stroke-dashoffset="7.4"/>
<rect x="944" y="999.5" width="155" height="26" fill="rgba(0,0,0,0.67)"/>
<text x="948.2" y="1017.3" font-size="13" fill="#f2f2f2" text-anchor="start" textLength="146.5" lengthAdjust="spacingAndGlyphs">T1=-7m,5s,774ms,784µs</text>
<rect x="924.1" y="999.5" width="164.5" height="26" fill="rgba(0,0,0,0.67)"/>
<text x="927.1" y="1017.3" font-size="13" fill="#f2f2f2" text-anchor="start" textLength="153.5" lengthAdjust="spacingAndGlyphs">T2=-4m,15s,709ms,292µs</text>
<rect x="1085" y="999.5" width="2.2" height="26" fill="#c4c4c4"/>
<rect x="937.5" y="831" width="155" height="50.9" fill="rgba(0,0,0,0.67)"/>
<text x="942" y="861.7" font-size="13" fill="#f2f2f2" text-anchor="start" textLength="22.1" lengthAdjust="spacingAndGlyphs">ΔT=</text>
<text x="967.3" y="851.7" font-size="13" fill="#f2f2f2" text-anchor="start" textLength="120.2" lengthAdjust="spacingAndGlyphs">2m,50s,65ms,492µs</text>
<text x="967.5" y="871.8" font-size="13" fill="#f2f2f2" text-anchor="start" textLength="88.6" lengthAdjust="spacingAndGlyphs">0.00588009 Hz</text>
</g>
<rect x="701" y="831" width="1" height="194" fill="#969696"/>
<rect x="701" y="1024" width="556" height="1" fill="#969696"/>
<text x="798.8" y="1040.5" font-size="13" fill="#f2f2f2" text-anchor="middle" textLength="30.6" lengthAdjust="spacingAndGlyphs">-10m</text>
<text x="899.1" y="1040.5" font-size="13" fill="#f2f2f2" text-anchor="middle" textLength="23.1" lengthAdjust="spacingAndGlyphs">-8m</text>
<text x="999.4" y="1040.5" font-size="13" fill="#f2f2f2" text-anchor="middle" textLength="23.1" lengthAdjust="spacingAndGlyphs">-6m</text>
<text x="1099.6" y="1040.5" font-size="13" fill="#f2f2f2" text-anchor="middle" textLength="23.1" lengthAdjust="spacingAndGlyphs">-4m</text>
<text x="1199.9" y="1040.5" font-size="13" fill="#f2f2f2" text-anchor="middle" textLength="23.1" lengthAdjust="spacingAndGlyphs">-2m</text>
<g clip-path="url(#ya13)">
<text x="696" y="1023" font-size="13" fill="#f2f2f2" text-anchor="end">4.78</text>
<text x="696" y="996.8" font-size="13" fill="#f2f2f2" text-anchor="end">4.8</text>
<text x="696" y="970.6" font-size="13" fill="#f2f2f2" text-anchor="end">4.82</text>
<text x="696" y="944.4" font-size="13" fill="#f2f2f2" text-anchor="end">4.84</text>
<text x="696" y="918.2" font-size="13" fill="#f2f2f2" text-anchor="end">4.86</text>
<text x="696" y="892" font-size="13" fill="#f2f2f2" text-anchor="end">4.88</text>
<text x="696" y="865.8" font-size="13" fill="#f2f2f2" text-anchor="end">4.9</text>
<text x="696" y="839.6" font-size="13" fill="#f2f2f2" text-anchor="end">4.92</text>
</g>
<text x="979.5" y="821.6" font-size="12" fill="#f2f2f2" text-anchor="middle" textLength="293" lengthAdjust="spacingAndGlyphs">H1:AWC-ZM2_PSAMS_STRAIN_VOLTAGE [s-trend]</text>
<text transform="translate(642.4 928) rotate(-90)" font-size="13" fill="#f2f2f2" text-anchor="middle">V</text>
<g clip-path="url(#c23)">
<rect x="1356" y="831" width="1" height="193" fill="#fff" fill-opacity="0.060000000000000005"/>
<rect x="1379" y="831" width="1" height="193" fill="#fff" fill-opacity="0.060000000000000005"/>
<rect x="1403" y="831" width="1" height="193" fill="#fff" fill-opacity="0.060000000000000005"/>
<rect x="1427" y="831" width="1" height="193" fill="#fff" fill-opacity="0.1"/>
<rect x="1450" y="831" width="1" height="193" fill="#fff" fill-opacity="0.060000000000000005"/>
<rect x="1474" y="831" width="1" height="193" fill="#fff" fill-opacity="0.060000000000000005"/>
<rect x="1498" y="831" width="1" height="193" fill="#fff" fill-opacity="0.060000000000000005"/>
<rect x="1521" y="831" width="1" height="193" fill="#fff" fill-opacity="0.1"/>
<rect x="1545" y="831" width="1" height="193" fill="#fff" fill-opacity="0.060000000000000005"/>
<rect x="1569" y="831" width="1" height="193" fill="#fff" fill-opacity="0.060000000000000005"/>
<rect x="1592" y="831" width="1" height="193" fill="#fff" fill-opacity="0.060000000000000005"/>
<rect x="1616" y="831" width="1" height="193" fill="#fff" fill-opacity="0.1"/>
<rect x="1640" y="831" width="1" height="193" fill="#fff" fill-opacity="0.060000000000000005"/>
<rect x="1663" y="831" width="1" height="193" fill="#fff" fill-opacity="0.060000000000000005"/>
<rect x="1687" y="831" width="1" height="193" fill="#fff" fill-opacity="0.060000000000000005"/>
<rect x="1711" y="831" width="1" height="193" fill="#fff" fill-opacity="0.1"/>
<rect x="1734" y="831" width="1" height="193" fill="#fff" fill-opacity="0.060000000000000005"/>
<rect x="1758" y="831" width="1" height="193" fill="#fff" fill-opacity="0.060000000000000005"/>
<rect x="1782" y="831" width="1" height="193" fill="#fff" fill-opacity="0.060000000000000005"/>
<rect x="1805" y="831" width="1" height="193" fill="#fff" fill-opacity="0.1"/>
<rect x="1829" y="831" width="1" height="193" fill="#fff" fill-opacity="0.060000000000000005"/>
<rect x="1853" y="831" width="1" height="193" fill="#fff" fill-opacity="0.060000000000000005"/>
<rect x="1336" y="975" width="524" height="1" fill="#fff" fill-opacity="0.1"/>
<rect x="1336" y="892" width="524" height="1" fill="#fff" fill-opacity="0.1"/>
<rect x="1336" y="1016" width="524" height="1" fill="#fff" fill-opacity="0.065"/>
<rect x="1336" y="934" width="524" height="1" fill="#fff" fill-opacity="0.065"/>
<rect x="1336" y="851" width="524" height="1" fill="#fff" fill-opacity="0.065"/>
<g shape-rendering="crispEdges" fill="none" stroke-linejoin="miter">
<path transform="translate(1335.5 0) scale(0.78900 1)" vector-effect="non-scaling-stroke" d="M0 964l1-56 1 78 1-25 1-59 1 5 1 36 1 22 1 10 1-33 1-13 1 35 1-8 1-37 1 23 1-40 1 23 1 19 1 5 1-23 1-5 1 20 1-29 1 30 1 19 1-4 1 2 1-26 1-21 1 28 1 24 1 21 1-47 1 53 1-23 1-44 1 18 1-17 1 55 1-27 1 23 1-62 1 10 1 10 1 7 1-4 1 48 1-70 1 44 1-22 1-11 1 40 1-22 1-28 1 41 1-22 1-1 1-8 1 39 1-29h1l1 2 1 39 1-53 1 54 1-39 1-8 1-3 1 32 1 32 1-58 1 3 1-22 1 34 1-26h1l1 60 1-25 1 4 1-8 1 28 1-45 1-4 1 57 1-74 1 38 1-48 1 45h1l1-26 1 34 1-40 1 24 1-11 1 19 1-9 1-16 1 28 1 12 1-8 1-18 1 7 1-20 1-9 1-4 1-2h1l1 7 1 34 1-52 1 13h1l1 25 1 25 1-28 1-3 1-21 1 43 1 7 1-18 1 14 1-59 1 85 1-62 1 34 1-39 1 36 1-11 1-6 1-15 1 55 1-20 1-12 1 16 1-11 1 28 1-15 1-53 1 17 1 43 1 11 1-7 1 4 1 3 1-26 1-34 1-3 1-2 1 12 1 48 1-58 1 50 1-29 1 27 1 14 1-42 1-4 1 47 1-56 1 27 1 25 1-24 1 3 1 29 1-43 1 29 1-46 1 20 1 12 1 8 1 1 1-50 1 24 1-11 1-5 1 28 1-12 1-31 1 8 1 27 1-27 1 44 1-17 1-23 1-14 1 37 1 26 1-34 1-6 1 21 1-32 1-6 1 43 1 7 1-43 1 34 1-23 1 19 1 14 1-28 1 10 1-31 1-4 1 44 1-33 1 46 1 3 1-44 1 31 1 6 1-4 1 5 1-55 1 14 1-5 1 8 1 16 1-11 1 13 1-29 1 21 1-14 1 31h1l1-3 1 1 1-32 1 8 1 33 1-21 1 32 1-16 1-7 1-22 1 47 1-46 1-18 1 3 1-2 1 14 1 65 1-60 1-8 1-11 1 6 1-2 1 33 1-18 1 49 1 12 1-31h1l1 26 1-46 1 5 1 6 1 32 1-21 1-4 1 20 1-20 1-10 1 25 1-43 1 16 1-32 1-1 1 67 1 2 1-7 1-38 1 9 1-41 1 72 1-31 1 43 1-69 1 7 1 73 1-28 1-53 1 76 1-51 1-10 1 2 1-17 1 62 1-45 1 17 1-17 1 36 1 8 1-52 1 30 1 8 1-26 1-6 1 39 1-32 1 28 1-24 1-19 1 6 1 27 1-1 1-44 1 71 1-26 1 16 1-13 1-39 1-2 1 16 1 9 1-6 1 24 1-58 1 56 1-38 1 50 1-40 1 43 1-48 1 42 1-23 1-23 1 3 1 59 1-25 1-58 1 58 1 5 1-6 1-28 1-25 1 41 1 14 1-17 1 3 1-12 1-10 1-9 1 57 1-5 1-40 1-22 1 17 1-15 1 23 1-12 1 14 1-25 1 11 1 37 1-17 1 30 1-49 1 46 1 3 1-3 1-36 1 18 1-26 1 14 1 5 1-18 1 60 1-17 1 21 1-72 1 51 1-37 1 7 1 9 1-26 1 44 1-21 1-28 1 18 1-3 1 26 1-41 1-4 1 49 1-11 1-21 1 31 1-23 1 15 1-4 1-28 1 32 1 12 1 22 1-43 1-18 1-5 1 49 1-47 1 19 1-18 1 33 1-54 1 52 1-52 1 16 1 21 1 24 1-41 1 8 1-6 1 47 1-55 1 49 1-39 1 63 1-76 1 56 1-23 1-13 1 10 1 25 1-3 1 17 1-39 1-21 1 5 1-12 1 35 1 16 1-30 1 22 1-35 1 39 1 10 1-18 1-15 1 6 1 7 1-30 1-28 1 60 1-51h1l1 18 1-21 1 66 1 2 1-75 1 74 1-31 1-13 1-7 1-3 1 17 1 22 1-7 1 16 1 1 1 17 1-14 1-60 1 68 1-1 1-39 1-11 1 19 1 31 1-17 1 7 1-14 1-14 1 37 1 5 1-40 1 20 1 16 1-2 1-32 1 13 1 1 1-32 1 51 1-27 1 18 1-10 1-19 1 40 1-59 1 48 1 16 1-37 1-3 1 59 1-95 1 45 1-9 1-35 1 60 1-28 1-20 1 74 1-74 1 73 1-10 1-61 1 27 1-47 1 85 1-19 1-7 1 22 1 11 1-42 1 33 1-61 1 10 1-12 1 62 1-8 1-40 1-28 1 74 1-74 1 75 1-33 1 16 1-41 1 27 1-14 1-20 1 11 1 37 1-3 1 7 1-24 1-25 1 56 1-56 1-15 1 65 1-17 1 18 1-8 1-1 1 27 1-25 1-8 1 4 1-18 1 30 1-5 1-36 1 42 1-13 1 26 1-70 1 21 1 42 1-9 1-36 1-32 1 9 1 58 1-37 1-13 1 20 1-27 1 67 1-38 1-20 1-7 1 56 1 20 1-11 1-49 1-22 1 50 1-50 1 7 1-14 1 70 1-46 1-34 1-1 1 83 1 14 1-79 1 19 1 14 1-15 1 28 1-44 1 48 1-31 1 37 1 3 1-13 1 8 1-28 1 25 1-45 1 7 1 41 1-59 1 67 1-61 1 55 1-37 1 43 1 9 1-36 1-34 1 48 1 17 1-23h1l1-52 1 38 1-19 1 48 1-55 1 36 1-38 1 55 1-46 1 46 1-66 1 64 1-43 1 25 1-34 1 38 1-23 1-22 1 58 1 17 1-33 1 17 1-59 1 40 1 7 1-12 1-35 1 4 1 37 1-13 1 36 1-41 1-7 1 5 1 38 1-59 1 93 1-90 1 44 1-34 1 3 1 44 1-63 1 38 1 32 1-48 1-11 1 67 1 31 1-71" stroke="#371e5c" stroke-width="3" stroke-dasharray="10 2"/>
<path transform="translate(1335.5 0) scale(0.78900 1)" vector-effect="non-scaling-stroke" d="M0 928l1-47 1 75 1-25 1-58 1 1 1 31 1 40 1-22 1-22 1-5 1 33 1-8 1-72 1 43 1-21 1 9 1 25 1-16 1 9 1-26 1 36 1-23 1 23 1 11 1 11 1-16 1-12 1-19 1 34 1 20 1 6 1-32 1 31 1-5 1-40 1-19 1 17 1 56 1-64 1 43 1-38 1-3 1 20 1-7 1-1 1 41 1-49 1 14 1-9 1 2 1 36 1-22 1-26 1 42 1-16 1-20 1 11 1 22 1-26 1-9 1 6 1 46 1-48 1 58 1-70 1 18 1-5 1 24 1 9 1-32 1 9 1-29 1 40 1-38 1 2 1 52 1-24 1 18 1-12 1 17 1-24 1-24 1 47 1-41 1 24 1-30 1 19 1-12h1l1 29 1-37 1 29 1-3 1 18 1-25 1-19 1 29h1l1 6 1-28 1 3 1-4 1-8 1 4 1-9 1 5 1 13 1-5 1-30 1 30 1-19 1 20 1 25 1-5 1-10 1-24 1 49 1 5 1-33 1 17 1-58 1 79 1-51 1 27 1-19 1 29 1-17 1-10h1l1 52 1-20 1-23 1 21 1-32 1 49 1-30 1-24 1-5 1 47 1 16 1-3 1 5h1l1-32 1-20 1-27 1 25 1 7 1 34 1-50 1 43 1-34 1 27 1 2 1-21 1-4 1 39 1-42 1 27 1-10 1 13 1-31 1 6 1-19 1 25 1-22 1 37 1-2 1-5 1 14 1-36 1 23 1-18 1-12 1 29h1l1-37 1 9 1 18 1-36 1 56 1-21 1-10 1-42 1 62 1 24 1-51 1 11 1 21 1-50 1-1 1 54 1-1 1-41 1 38 1-12 1 22 1-12 1-3 1 1 1-46 1 22 1-3 1-19 1 67 1 8 1-57 1 26 1 16 1-16 1 11 1-37 1 14 1-7 1 7 1-14 1 6 1 17 1-32 1 30 1-12 1 18 1-19 1 18 1 14 1-38 1 13 1 24 1-19 1 9 1 2 1-6 1-15 1 42 1-41 1-23 1 6 1 1 1 22 1 53 1-55 1-12 1-8 1-6 1-7 1 52 1-25 1 36 1 24 1-49 1 8 1 2 1-24 1-7 1 36 1 23 1-9 1-22 1 19 1-6 1-14 1 18 1-28 1-11 1-6 1-14 1 85 1-20 1 10 1-41 1 1 1-32 1 70 1-31 1 45 1-61 1-17 1 87 1-19 1-84 1 90 1-50 1-14 1 13 1-6 1 29 1-19 1 2 1-21 1 54 1 5 1-48 1 25 1 13 1-31 1 2 1 30 1-24 1 23 1-36 1-1 1-17 1 45 1-5 1-33 1 51 1-4 1-8 1-1 1-33 1-8 1 21 1-12 1-12 1 47 1-49 1 54 1-72 1 79 1-36 1 29 1-50 1 54 1-75 1 4 1 28 1 54 1-17 1-70 1 53 1 29 1-32 1-19 1-43 1 58 1 3 1 1 1-4 1-20 1-7 1 7 1 46 1-1 1-54 1-10 1 16 1-31 1 19 1 13 1 6 1-36 1 37 1 38 1-28 1 24 1-26 1 34 1-1 1 3 1-42 1 6 1-7 1 21 1-4 1-22 1 53 1-22 1 17 1-56 1 32 1-18 1-8 1 1 1-12 1 47 1-21 1-31 1 14 1 16 1 11 1-32 1-18 1 54h1l1-13 1 6 1-16 1 32 1-12 1-36 1 48 1-18 1 5 1-13 1-23 1 12 1 32 1-37 1 31 1-38 1 36 1-39 1 35 1-50 1 18 1 6 1 30 1-26 1 13 1-24 1 61 1-45 1 22 1-41 1 48 1-41 1 62 1-40h1l1 20 1 15 1-38 1 45 1-59 1 5 1-7 1 2 1 23 1 26 1-32 1 33 1-48 1 37 1 11 1-27 1 6 1-25 1 22 1-20 1-26 1 61 1-68 1 20 1 8 1-19 1 59 1 1 1-65 1 59 1-47 1 21 1-11 1-19 1 11 1 51 1-6 1-5 1 8 1 20 1-18 1-44 1 61 1 3 1-62 1 9 1 6 1 38 1-12 1 8 1-14 1-28 1 48 1-12 1-27 1 23 1 18 1-15 1-30 1 17 1 12 1-53 1 68 1-18 1-15 1 11 1-25 1 41 1-63 1 57 1 20 1-61 1 14 1 51 1-95 1 69 1-36 1-18 1 63 1-31 1-42 1 71 1-57 1 61 1-7 1-60 1 16 1-26 1 82 1-11 1-9 1 1 1 22 1-27 1 20 1-59 1 16 1-2 1 52 1-17 1-44 1-20 1 62 1-45 1 42 1-31 1 43 1-66 1 49 1-7 1-44 1 28 1 33 1 6 1-15 1-10 1-24 1 40 1-35 1-21 1 46 1 4 1 16 1-9 1-1 1 27 1-23 1-5 1-9 1-7 1 10 1 19 1-34 1 40 1-16 1 11 1-70 1 38 1 11 1 21 1-35 1-40 1 16 1 48 1-47 1 5 1 11 1-27 1 76 1-65 1 12 1-15 1 60 1-1 1-14 1-35 1-34 1 68 1-66 1 29 1-12 1 63 1-35 1-47 1-4 1 88 1-10 1-53 1-19 1 26 1 10 1 21 1-41 1 61 1-56 1 62 1-30 1 10 1-13 1-2 1 22 1-47 1 12 1 26 1-44 1 66 1-76 1 19 1-6 1 49 1 18 1-36 1-30 1 34 1 33 1-44 1-5 1-31 1 32 1-14 1 60 1-72 1 27 1-15 1 35 1-32 1 26 1-45 1 68 1-50 1 17 1-59 1 58 1 1 1-52 1 74 1 20 1-34 1-9 1-51 1 23 1 29 1-16 1-9 1 6 1 30 1-23 1 33 1-41 1-10 1 14 1 30 1-60 1 78 1-68 1 55 1-36 1-2 1 38 1-61 1 14 1 55 1-60 1 1 1 54 1 28 1-68" stroke="#371e5c" stroke-width="3" stroke-dasharray="10 2"/>
<path transform="translate(1335.5 0) scale(0.78900 1)" vector-effect="non-scaling-stroke" d="M0 941l1-47 1 75 1-20 1-59 1-4 1 37 1 32 1-9 1-34 1-4 1 33h1l1-44 1 18 1-26 1 3 1 39 1-2 1-14 1-22 1 30 1-21 1 30 1-2 1 13 1 1 1-24 1-22 1 30 1 26 1-1 1-25 1 25 1-6 1-36h1l1-5 1 57 1-50 1 44 1-55 1-4 1 22 1 2 1-3 1 38 1-52 1 28 1-24h1l1 40 1-21 1-24 1 41 1-22 1-6 1-3 1 27 1-31 1 5 1-3 1 54 1-55 1 53 1-62 1 10 1 1 1 21 1 42 1-65 1 8 1-16 1 30 1-24 1 1 1 43 1-17 1 11 1-7 1 10 1-23 1-26 1 48 1-46 1 27 1-34 1 23h1l1-10 1 32 1-32 1 15 1-1 1 15 1-14 1-19 1 37 1-1 1-12 1-15 1 19 1-29 1 2 1-2 1-5 1-2 1 11 1 11 1-29 1 10 1 1 1 12 1 28 1-18 1-11 1-18 1 44 1 5 1-18 1 9 1-56 1 70 1-51 1 26 1-20 1 35 1-15 1-2 1-14 1 58 1-26 1-20 1 18 1-1 1 18 1-9 1-48 1 14 1 46 1 1 1-1 1 2 1 1 1-21 1-32 1-7 1 4 1 8 1 39 1-44 1 36 1-19 1 31 1 2 1-31 1-9 1 42 1-48 1 31 1 11 1-15 1-17 1 24 1-37 1 17 1-16 1 21h1l1 8 1 5 1-39 1 24 1-13 1-14 1 39 1-15 1-27h1l1 33 1-37 1 50 1-25 1-16 1-8 1 38 1 14 1-41 1 12 1 17 1-29 1-15 1 40 1 8 1-33 1 25 1-12 1 18 1-1 1-14 1 5 1-28h1l1 20 1-27 1 59 1 4 1-45 1 30 1-3 1-6 1 5 1-41 1 15 1-5 1 7 1-3 1 1 1 23 1-28 1 15 1-10 1 15 1-10 1 22 1-1 1-31 1 7 1 26 1-23 1 34 1-14h1l1-26 1 45 1-42 1-13 1 3 1-2 1 12 1 56 1-52 1-10 1-12 1-3 1 1 1 44 1-27 1 53 1 2 1-37 1 10 1-4 1-17 1 2 1 12 1 23 1-4 1-16 1 11 1-2 1-20 1 20 1-29 1 14 1-30 1 3 1 65 1-3 1-3 1-43 1 5 1-28 1 66 1-26 1 35 1-63 1-3 1 77 1-22 1-58 1 70 1-49 1-10 1 2 1-6 1 50 1-36 1 15 1-18 1 44h1l1-48 1 21 1 16 1-26 1-6 1 45 1-37 1 28 1-33 1-12 1-10 1 43 1-8 1-36 1 57 1-7h1l1-6 1-38h1l1 20 1-5 1-6 1 38 1-59 1 57 1-48 1 56 1-40 1 27 1-29 1 41 1-48 1-9 1 6 1 56 1-11 1-58 1 48 1 14 1-15 1-27 1-24 1 31 1 2 1 5 1 1 1-2 1-17 1-9 1 51 1-5 1-53 1-1 1 6 1-4 1 10 1 4 1 3 1-24 1 19 1 38 1-16 1 18 1-33 1 43 1-1 1-2 1-42 1 12 1-9 1 15 1-1 1-14 1 41 1-8 1 8 1-57 1 48 1-30 1-4 1-1 1-5 1 39 1-28 1-22 1 9 1 13 1 29 1-54 1-4 1 58 1-9 1-19 1 11 1-12 1 26 1-8 1-32 1 34 1-1 1 23 1-47 1 1 1-6 1 38 1-44 1 26 1-28 1 40 1-49 1 50 1-50 1 1 1 29 1 29 1-36 1 6 1-29 1 59 1-46 1 38 1-40 1 45 1-53 1 60 1-30 1-2 1 12 1 16 1-13 1 21 1-30 1-23 1 2 1-3 1 20 1 22 1-21 1 21 1-36 1 38 1 3 1-26 1 4 1 2 1 10 1-38 1-20 1 61 1-50h1l1 9 1-22 1 65 1 7 1-69 1 67 1-50 1 13 1-9 1-8 1 10 1 34 1-4 1 9 1-2 1 15 1-14 1-49 1 65 1 1 1-60 1 4 1 16 1 38 1-14 1 6 1-18 1-21 1 41 1 5 1-38 1 18 1 15 1-16 1-27 1 22 1 7 1-35 1 53 1-25 1-5 1 11 1-33 1 50 1-68 1 63 1 11 1-47 1 12 1 37 1-74 1 48 1-29 1-19 1 63 1-29 1-32 1 70 1-69 1 58 1 10 1-74 1 37 1-37 1 67 1-1 1-19 1 28 1-1 1-24 1 17 1-53 1 11 1-3 1 57 1-10 1-49 1-20 1 56 1-50 1 69 1-39 1 28 1-47 1 32 1-13 1-31 1 21 1 34h1l1-11 1-7 1-32 1 57 1-46 1-18 1 50 1-7 1 23 1-13 1 1 1 21 1-23 1-3 1 3 1-18 1 21 1 10 1-37 1 36 1-14 1 18 1-74 1 38 1 17 1 11 1-34 1-38 1 15 1 59 1-36 1-16 1 16 1-23 1 68 1-57 1 5 1-13 1 60 1 11 1-5 1-50 1-29 1 60 1-54 1 10 1-14 1 69 1-41 1-35h1l1 82 1 2 1-76 1 5 1 14 1 3 1 30 1-47 1 53 1-48 1 55 1-23 1 10 1-14 1-3 1 20 1-45 1 7 1 28 1-43 1 65 1-68 1 41 1-15 1 40 1 4 1-24 1-35 1 39 1 21 1-41 1 14 1-47 1 25 1-9 1 55 1-69 1 42 1-33 1 47 1-36 1 29 1-52 1 64 1-45 1 17 1-45 1 45 1-6 1-28 1 65 1 6 1-33 1 16 1-60 1 39 1 5 1-15 1-16 1 3 1 32 1-14 1 28 1-47 1 8 1 1 1 44 1-58 1 73 1-75 1 47 1-33h1l1 49 1-66 1 15 1 51 1-50 1-4 1 45 1 31 1-61" stroke="#6d3cb8" stroke-width="4"/>
</g>
<line x1="1564.5" y1="831" x2="1564.5" y2="1024" stroke="#fff" stroke-width="2.2" stroke-dasharray="10 2" stroke-dashoffset="7.4"/>
<line x1="1698.6" y1="831" x2="1698.6" y2="1024" stroke="#fff" stroke-width="2.2" stroke-dasharray="10 2" stroke-dashoffset="7.4"/>
<rect x="1564.5" y="999.5" width="155" height="26" fill="rgba(0,0,0,0.67)"/>
<text x="1568.7" y="1017.3" font-size="13" fill="#f2f2f2" text-anchor="start" textLength="146.5" lengthAdjust="spacingAndGlyphs">T1=-7m,5s,774ms,784µs</text>
<rect x="1536.6" y="999.5" width="164.5" height="26" fill="rgba(0,0,0,0.67)"/>
<text x="1539.6" y="1017.3" font-size="13" fill="#f2f2f2" text-anchor="start" textLength="153.5" lengthAdjust="spacingAndGlyphs">T2=-4m,15s,709ms,292µs</text>
<rect x="1697.5" y="999.5" width="2.2" height="26" fill="#c4c4c4"/>
<rect x="1554.1" y="831" width="155" height="50.9" fill="rgba(0,0,0,0.67)"/>
<text x="1558.6" y="861.7" font-size="13" fill="#f2f2f2" text-anchor="start" textLength="22.1" lengthAdjust="spacingAndGlyphs">ΔT=</text>
<text x="1583.9" y="851.7" font-size="13" fill="#f2f2f2" text-anchor="start" textLength="120.2" lengthAdjust="spacingAndGlyphs">2m,50s,65ms,492µs</text>
<text x="1584.1" y="871.8" font-size="13" fill="#f2f2f2" text-anchor="start" textLength="88.6" lengthAdjust="spacingAndGlyphs">0.00588009 Hz</text>
</g>
<rect x="1335" y="831" width="1" height="194" fill="#969696"/>
<rect x="1335" y="1024" width="525" height="1" fill="#969696"/>
<text x="1427.4" y="1040.5" font-size="13" fill="#f2f2f2" text-anchor="middle" textLength="30.6" lengthAdjust="spacingAndGlyphs">-10m</text>
<text x="1522.1" y="1040.5" font-size="13" fill="#f2f2f2" text-anchor="middle" textLength="23.1" lengthAdjust="spacingAndGlyphs">-8m</text>
<text x="1616.8" y="1040.5" font-size="13" fill="#f2f2f2" text-anchor="middle" textLength="23.1" lengthAdjust="spacingAndGlyphs">-6m</text>
<text x="1711.4" y="1040.5" font-size="13" fill="#f2f2f2" text-anchor="middle" textLength="23.1" lengthAdjust="spacingAndGlyphs">-4m</text>
<text x="1806.1" y="1040.5" font-size="13" fill="#f2f2f2" text-anchor="middle" textLength="23.1" lengthAdjust="spacingAndGlyphs">-2m</text>
<g clip-path="url(#ya23)">
<text x="1330" y="1021.7" font-size="13" fill="#f2f2f2" text-anchor="end">222.1</text>
<text x="1330" y="980.5" font-size="13" fill="#f2f2f2" text-anchor="end">222.2</text>
<text x="1330" y="939.3" font-size="13" fill="#f2f2f2" text-anchor="end">222.3</text>
<text x="1330" y="898.1" font-size="13" fill="#f2f2f2" text-anchor="end">222.4</text>
<text x="1330" y="856.9" font-size="13" fill="#f2f2f2" text-anchor="end">222.5</text>
</g>
<text x="1598" y="821.6" font-size="12" fill="#f2f2f2" text-anchor="middle" textLength="263" lengthAdjust="spacingAndGlyphs">H1:SUS-ZM1_M1_DAMP_P_INMON [s-trend]</text>
<text transform="translate(1277.4 928) rotate(-90)" font-size="13" fill="#f2f2f2" text-anchor="middle" textLength="40.6" lengthAdjust="spacingAndGlyphs">counts</text>
<g clip-path="url(#c33)">
<rect x="1960" y="831" width="1" height="193" fill="#fff" fill-opacity="0.060000000000000005"/>
<rect x="1983" y="831" width="1" height="193" fill="#fff" fill-opacity="0.060000000000000005"/>
<rect x="2007" y="831" width="1" height="193" fill="#fff" fill-opacity="0.060000000000000005"/>
<rect x="2031" y="831" width="1" height="193" fill="#fff" fill-opacity="0.1"/>
<rect x="2054" y="831" width="1" height="193" fill="#fff" fill-opacity="0.060000000000000005"/>
<rect x="2078" y="831" width="1" height="193" fill="#fff" fill-opacity="0.060000000000000005"/>
<rect x="2102" y="831" width="1" height="193" fill="#fff" fill-opacity="0.060000000000000005"/>
<rect x="2125" y="831" width="1" height="193" fill="#fff" fill-opacity="0.1"/>
<rect x="2149" y="831" width="1" height="193" fill="#fff" fill-opacity="0.060000000000000005"/>
<rect x="2173" y="831" width="1" height="193" fill="#fff" fill-opacity="0.060000000000000005"/>
<rect x="2196" y="831" width="1" height="193" fill="#fff" fill-opacity="0.060000000000000005"/>
<rect x="2220" y="831" width="1" height="193" fill="#fff" fill-opacity="0.1"/>
<rect x="2244" y="831" width="1" height="193" fill="#fff" fill-opacity="0.060000000000000005"/>
<rect x="2267" y="831" width="1" height="193" fill="#fff" fill-opacity="0.060000000000000005"/>
<rect x="2291" y="831" width="1" height="193" fill="#fff" fill-opacity="0.060000000000000005"/>
<rect x="2315" y="831" width="1" height="193" fill="#fff" fill-opacity="0.1"/>
<rect x="2338" y="831" width="1" height="193" fill="#fff" fill-opacity="0.060000000000000005"/>
<rect x="2362" y="831" width="1" height="193" fill="#fff" fill-opacity="0.060000000000000005"/>
<rect x="2386" y="831" width="1" height="193" fill="#fff" fill-opacity="0.060000000000000005"/>
<rect x="2409" y="831" width="1" height="193" fill="#fff" fill-opacity="0.1"/>
<rect x="2433" y="831" width="1" height="193" fill="#fff" fill-opacity="0.060000000000000005"/>
<rect x="2457" y="831" width="1" height="193" fill="#fff" fill-opacity="0.060000000000000005"/>
<rect x="1940" y="902" width="524" height="1" fill="#fff" fill-opacity="0.1"/>
<rect x="1940" y="990" width="524" height="1" fill="#fff" fill-opacity="0.065"/>
<rect x="1940" y="1007" width="524" height="1" fill="#fff" fill-opacity="0.05"/>
<rect x="1940" y="972" width="524" height="1" fill="#fff" fill-opacity="0.05"/>
<rect x="1940" y="955" width="524" height="1" fill="#fff" fill-opacity="0.05"/>
<rect x="1940" y="937" width="524" height="1" fill="#fff" fill-opacity="0.05"/>
<rect x="1940" y="920" width="524" height="1" fill="#fff" fill-opacity="0.05"/>
<rect x="1940" y="884" width="524" height="1" fill="#fff" fill-opacity="0.05"/>
<rect x="1940" y="867" width="524" height="1" fill="#fff" fill-opacity="0.05"/>
<rect x="1940" y="849" width="524" height="1" fill="#fff" fill-opacity="0.05"/>
<rect x="1940" y="832" width="524" height="1" fill="#fff" fill-opacity="0.05"/>
<g shape-rendering="crispEdges" fill="none" stroke-linejoin="miter">
<path transform="translate(1939.5 0) scale(0.78900 1)" vector-effect="non-scaling-stroke" d="M0 987l1-13 1 32 1-12 1-20 1 10 1-23 1 24 1 4 1-19 1 28 1-5 1-35 1 13 1-35 1 55 1-27h1l1-11 1 31 1-45 1-8 1 46 1-16 1-27 1 18 1 33 1-24 1-7 1 2 1-12 1 16 1 12 1 10 1-24 1 20 1-17 1-10 1 15 1 15 1-3 1-10 1 5 1-31 1 3 1 36 1 8 1-14 1-19 1 16 1 4 1 24 1-26 1-8 1 8 1-35 1 55 1-42 1 32 1-36h1l1 34 1-29 1 44 1-15 1-4h1l1-6 1 40 1-41 1 1 1-18 1 13 1 32 1-30 1 8 1-20 1-3 1 7 1 20 1-21 1-48 1 44 1-8 1 10 1-9 1 23 1-20 1 17 1-31 1 23 1 5 1 18 1-23 1 29 1-15 1-13 1 20 1 13 1-11h1l1-4 1-8 1-15 1 28 1 2 1-20 1 17 1-12 1 10 1-29 1 25 1 19 1-20 1 11 1 4 1-13 1 16 1-8 1-5 1 9 1-2 1-43 1 63 1-31 1-12 1-3 1-16 1 29 1-9 1 12 1-44 1 63 1-50h1l1 22 1-27 1 19 1-29 1 11 1 24 1-31 1 41 1-35 1-4 1 4 1 32 1-9 1-27 1 3 1 17 1 28 1-31 1-25 1 3 1 35 1 10 1-9 1 13 1-11 1-22 1-19 1 18 1 27 1 7 1-9h1l1-33 1 1 1 1 1 29 1-7 1 28 1-13 1-14 1-11 1 19 1 37 1-34 1-6 1 2 1-34 1-6 1 2 1-1 1-3 1 21 1-43 1 25 1 30 1-29 1 14 1-19 1 35 1-37 1 15 1 19 1-17h1l1 12 1-15 1 18 1-19 1 49 1-8 1-23 1 9 1-4 1-1 1-13 1 5 1 18 1-17 1-8 1 3 1 20 1-26 1 28 1 14 1-25 1-11 1-4 1 24 1-28 1 34 1-2 1 15 1-39 1 10 1 12 1-22 1 14 1 6 1-28 1 21 1 9 1 11 1-32 1 2 1 30 1-39 1 57 1-35 1 4 1-30 1 6 1 7 1-7 1 48 1-47 1-9 1 33 1-28 1 28 1-14 1 37 1-20 1-36 1 42 1-46 1 25 1-14 1 27 1-6 1-3 1-20 1 28 1-18 1 23 1-44 1 14 1 14 1-12 1-7 1-17 1 53 1-38 1 18 1 25 1-5 1-30 1-3 1 12 1 23 1 15 1-13 1-11 1 1 1 9 1-46 1 12 1 36 1-23 1 5 1 3 1 13 1-16 1 52 1-73 1 44 1 4 1-24 1-7 1 13 1 8 1-2 1-44 1 25 1 17 1-11 1-28 1 45 1-46 1 27 1-13 1-17 1 20 1-23 1 7 1 25 1-30 1 17 1 1 1-15 1 38 1-23 1 16 1-2 1 28 1-26 1-1 1-13 1-5 1 13 1-4 1 1 1 6 1-5 1-14 1 12 1-7 1-2 1 10 1-20 1 27 1-1 1-34 1 21 1 12 1-17 1 57 1-36 1 27 1-51 1 15 1 1 1 7 1-36 1 60 1-9 1-56 1 21 1 25 1 18 1-35 1 30 1-26 1-7 1 74 1-18 1-10 1 34 1-78h1l1 42 1-23 1 37 1-70 1 32 1-12 1-6 1 19 1 3 1-4 1-7 1-25 1 21 1 2 1-20 1 19 1 13 1-33 1 19 1 14 1 5 1-20 1-11 1-2 1 27 1-40 1 7 1 22 1-9 1-13 1-5 1 3 1 35 1-13 1-16 1 13 1 28 1-56 1 20 1 51 1-66 1 42 1-2 1 4 1 4 1-9 1 2 1-23 1 36 1-20 1 5 1-1 1-14 1 46 1-38 1-6 1 19 1-3 1-12 1-15 1 13 1-30 1 48 1-20 1-4 1-7 1-7 1-17 1 24 1 30 1-3 1-29 1 10 1 1 1 4 1-30 1 14 1 14 1-24 1 15 1-14 1-6 1 8 1 24 1-15 1-6 1-27 1 22 1 30 1-20 1-36 1 76 1-64 1 18 1-4 1-33 1 38 1 30 1-52 1 8 1 12 1 23 1-11 1-4 1-7 1 17 1 7 1-43 1 28 1 7 1-18 1-20 1 22 1-31 1 39 1-17 1-25 1 20 1-20 1 20 1 16 1 13 1-45 1 19 1-1 1 20 1 26 1-29 1-23 1 30 1-3 1-8 1 14 1-8 1 10 1-13 1 33 1-30 1 20 1 10 1-27 1 16 1 12 1 13 1-36 1-22 1 46 1-48 1 42 1-17 1 4 1-5 1 25 1-37 1-9 1 22 1 14 1-8 1 5 1-13 1 35 1-48 1-4 1-10 1 33 1-14 1 10 1-13 1-18 1 12 1 51 1-26 1 38 1-54 1-13 1 32h1l1-22 1-3 1-5 1-7 1 20 1 23 1 12 1-26 1 12 1-8 1 11 1-8 1-8 1-11 1 10 1 7 1 7 1-35 1 33 1-26 1 10 1 26 1-20 1 4 1 30 1-61 1 34 1 6 1-7 1-4 1-15 1-13 1 31 1-39 1 7h1l1 33 1 5 1 26 1-28 1 12 1-36 1 7 1 10 1-20 1 49 1-46 1 12 1 31 1-15 1 24 1-27 1-28 1 20 1 10 1 4 1 31 1-37 1-16 1 23 1 6 1-8 1 9 1 8 1-9 1 4 1 13 1-29 1-13 1 53 1-42 1 47 1-13 1 9 1-44 1 22 1 8 1-37 1 23 1-15 1 14 1-25 1 37 1-30 1 43 1-20 1 8 1-25 1 16 1-9 1-9 1 44 1-28 1-19 1 13 1 1 1-14 1-9 1 31 1-6 1-28 1 2 1 1 1 10 1 24 1-6h1l1 6 1-49 1 30 1-10 1 34 1-39 1 21 1 8 1 6" stroke="#0f1978" stroke-width="3" stroke-dasharray="10 2"/>
<path transform="translate(1939.5 0) scale(0.78900 1)" vector-effect="non-scaling-stroke" d="M0 933l1-33 1 11 1 21 1-13 1-9 1 9 1-7 1-2 1 7 1 18 1-12 1-33 1-15 1-8 1 37 1 15 1-50 1 43 1 2 1-79 1 48 1 8 1 16 1-24 1-14 1 9 1 39 1-20 1 16 1-56 1 41 1 2 1 21 1-11 1-16 1 15 1-26 1 35 1 1 1-8h1l1-10 1-30 1 15 1 39 1-6 1-50 1 24 1 5 1-11 1 39 1-9 1-11 1 25 1-53 1 44 1-36 1 27 1-29 1 3 1 20 1-16 1 39 1-3 1-8 1 2 1 8 1 6 1-40 1 9 1-8 1 15 1 14h1l1-3 1-16 1 2 1-17 1-2 1 22 1-48 1 26 1-16 1-7 1 4 1 9 1 13 1 10 1-31 1 28 1 18 1 8 1-25 1 24 1-6 1-14 1-30 1 54 1 3 1-14 1 6 1 7 1-22 1 15 1 7 1-39 1 29 1 4 1-6 1-17 1 10 1 24 1-22 1 24 1-24 1 16 1-6 1 9 1-17 1-7 1-8 1-24 1 45 1-5 1-42 1 17 1 6 1 11 1-1 1-7 1-32 1 36 1-13 1-6 1-5 1 20 1-3 1-13 1-3 1 7 1-9 1 42 1-39h1l1-14 1 46 1-6 1-22 1-8 1 3 1 30 1-1 1-32 1-13 1 44 1-30 1 34 1-28 1 18 1 1 1-31 1 7 1 36 1 15 1-15 1-3 1-24 1 4 1-23 1 46 1-15 1 10 1-22 1 22 1 5 1-2 1 16 1-16 1-2 1-23 1 3 1-36 1 35 1-18 1 6h1l1-47 1 58 1 14 1-17 1 17 1-27 1 18 1-30 1 14 1 7 1 8 1-28 1 45 1-38 1 30 1-18 1 25 1-12 1-12 1 8 1 6 1-3 1 1 1-10 1-2 1-1 1 15 1 5 1 4 1-18 1 24 1 9 1-23 1-22 1-10 1 38 1-38 1 61 1-30 1 12 1-3 1-15 1 27 1-15 1 5 1 5 1-34 1 20 1-6 1 34 1-50 1 16 1 35 1-43 1 48 1-49 1 47 1-59 1 19 1-15 1 12 1 23 1-27 1 11 1 5 1-52 1 77 1-27 1 12 1-16 1-9 1 13 1-34 1 41 1-12 1 14 1 10 1-36 1-1 1 41 1-45 1 15 1-11 1 7 1 3 1-33 1 12 1 3 1 6 1-2 1-4 1 41 1-6 1-26 1-6 1 1 1 38 1-19 1-13 1 35 1-3 1-7 1-11 1 3 1 21 1-47 1 33 1 11 1-2 1-34 1 38 1-31 1 30 1-14 1-9 1-31 1 31 1 4 1 6 1-29 1 24 1-18 1 22 1-9 1 27 1-37 1-13 1-1 1 18 1-9 1 8 1-14 1 29 1-12 1-6 1 5 1 7 1-22 1-3 1 29 1 3 1-24 1 8 1 15 1-7 1-43 1 40h1l1-11 1-29 1 53 1-12 1-4 1-14 1 24 1-5 1-25 1 30 1-8 1-7 1 12 1 7 1-8 1 26 1-22 1-20 1-18 1 13 1 7 1 5 1-10 1 37 1-9 1-23 1 3 1 14 1 7 1 6 1-7 1-2 1-7 1 39 1-6 1 3 1-9 1-33 1 7 1 47 1-41 1 16 1-25 1 18 1-40 1 28 1 18 1 3 1-28 1-35 1 26 1 25 1-10 1-10 1 7 1 9 1-10 1-21 1 17 1-41 1 47 1-41 1 22 1 28 1-84 1 55 1 20 1-11 1-34 1 30 1-10 1 38 1-6 1-19 1 3 1 8 1-24 1 31 1-5 1-29 1 24 1 22 1 2 1 12 1-52 1 30 1-16 1 16 1-27 1 42 1-44 1 21 1 26 1-26 1 5 1 15 1-30 1-2 1 4 1 10 1-49 1 66 1-44 1 4 1-17 1 25 1-25 1 36 1-2 1 16 1-24 1-23 1 18 1-13 1-5 1 34 1 8 1-47 1 22 1-7 1-11 1 20 1-26 1 35 1 2 1-40 1 40 1 2 1-19 1-26 1 34 1-15 1-14 1 33 1-26 1 20 1-4 1-35 1 17 1-2 1-11 1 10 1-10 1 44 1-29 1 42 1-35 1 29 1-16 1 6 1-27 1-42 1 30 1 36 1-40 1 14 1 20 1-16 1 9 1 16 1 1 1-37 1 23 1-26 1 50 1-14 1-5 1-2 1-6 1 25 1-34 1 39 1-13 1 23 1-24 1-20 1 27 1-3 1 15 1-11 1-4 1-7 1 37 1-22 1-28 1 46 1-64 1 12 1 21 1 15 1-30 1 42 1-25 1-25 1 6 1 37 1-9 1 1 1 3 1-14 1-6 1-2 1-15 1 43 1-31 1 24 1-39 1 13 1 13 1 23 1-17 1 23 1-56 1 24 1-11 1 7 1 1 1 6 1-27 1 23 1-21 1 46 1-10 1 11 1-7 1-23 1 22 1 16 1-14 1-15 1 3 1-5 1 4 1-32 1 40 1-18 1 15 1 15 1-12 1-26 1 35 1-33 1 29 1 3 1-39 1-4 1 20 1-9 1 21 1-53 1 17 1 19 1 20 1 9 1-5 1 11 1-22 1-11 1 13 1-2 1-20 1 24 1-4 1-12 1 42 1-49 1 43 1-17 1-18 1 27 1-17 1-11 1 40 1-14 1-12 1 26 1-45 1 38 1-29 1 25 1-16 1 27 1-6 1 7 1-50 1 61 1-23 1 29 1 10 1-17 1-23 1 16 1 16 1-44 1 40 1-27 1 25 1-22 1 29 1-22 1 17 1-23 1 5 1-5 1 1 1 14 1-23 1 4 1-3 1-10 1-6 1 41 1-18 1-29 1 33h1l1-26 1 18 1-21 1 13 1-2 1 34 1-18 1-12 1-6 1-11 1 28 1 6 1-22 1 11 1 20 1-27" stroke="#0f1978" stroke-width="3" stroke-dasharray="10 2"/>
<path transform="translate(1939.5 0) scale(0.78900 1)" vector-effect="non-scaling-stroke" d="M0 966l1-30 1 32 1-11 1-14 1 3 1-4 1 24 1-25 1 11 1 3 1-4 1-11 1 1 1-31 1 26 1 6 1-25 1 16 1 16 1-27 1-9 1 41 1-21 1-24 1 23 1 17 1-7 1-26 1 21 1-21 1 7 1 31 1-8 1-16 1 18 1-10 1-12 1 16 1 10 1-7 1-11 1 8 1-33 1 7 1 40 1-11 1-20 1 9 1 17 1-19 1 26 1-12 1-8 1 16 1-40 1 35 1-23 1 26 1-30 1-5 1 31 1-16 1 23 1 3 1-8 1 4 1-6 1 14 1-32 1-3h1l1 3 1 33 1-14 1-4 1-12 1-3 1 8 1 2 1-11 1-39 1 44 1-20 1 14 1-24 1 33 1-5 1 9 1-21 1 9 1 19 1 4 1-35 1 30 1 7 1-23 1-1 1 30 1-1 1 8 1-24 1 6 1-15 1 27 1 7 1-48 1 24 1 10 1 6 1-32 1 11 1 20 1-1 1 2 1 5 1-15 1-4 1 10 1-1 1 2 1-12 1-21 1 29 1-5 1-7 1-4 1-20 1 32 1-17 1-7 1-10 1 26 1-18 1-4 1 22 1-21 1 2 1-9 1-1 1 5 1-11 1 36 1-33 1 2 1-1 1 34 1-10 1-21 1-6 1 2 1 20h1l1-22 1-5 1 37 1 4 1-6 1-6 1 13 1-14 1-19 1 14 1 20 1 6 1-10 1 10 1-29h1l1-5 1 25 1-2 1-7 1-2 1 9 1-6 1 10 1 7 1-5 1-7 1-5 1-20 1-7 1 8 1-9 1-1 1 15 1-49 1 43 1 15 1-24 1 17 1-18 1 27 1-21 1 9 1-6 1 4 1-2 1 14 1-22 1 29 1-27 1 37h1l1-32 1 11 1 11 1-18 1 11 1-10 1 8 1-9 1 1 1 6 1 26 1-34 1 27 1 11 1-30 1-9 1 6 1 10 1-8 1 27 1-11 1 17 1-29 1 6 1 18 1-22 1 15 1 3 1-25 1 7 1 4 1 22 1-30 1-2 1 31 1-28 1 33 1-32 1 25 1-31 1-2 1-3 1 6 1 18 1-19 1-5 1 26 1-43 1 51 1-17 1 8 1-7 1-19 1 31 1-44 1 26 1-7 1 19h1l1-30 1 6 1 29 1-34 1 3 1-2h1l1 15 1-11 1-12h1l1 21 1-11 1 8 1 16 1 3 1-26 1 2 1 16 1 3 1 11 1-18 1 14 1-6 1 13 1-34 1 8 1 16 1-16 1 11 1 2 1 10 1-22 1 29 1-31 1 19 1 6 1-32 1-6 1 17 1 5 1 18 1-40 1 28 1-25 1 21 1-17 1 35 1-39 1-2 1 14 1-15 1 4 1-6 1 8 1 18 1-21 1 2 1 10 1-7 1-5 1 4 1 26 1-7 1 8 1-7 1 4 1-23 1 12 1-4 1-4 1-13 1 17 1 4 1-9 1 14 1-16 1 1 1 19 1-31 1 17 1 18 1-34 1 16 1 20 1-27 1 26 1-12 1-18 1-9 1 9 1 11 1 8 1-26 1 35 1-12 1-25h1l1 39 1-8h1l1 13 1-16 1-10 1 38 1-9 1 15h1l1-40 1 1 1 37 1-28 1 18 1-36 1 17 1-12 1-1 1 27 1 2 1-23 1-12 1-6 1 22 1-13 1-5 1 16 1 1 1-10 1-12 1 12 1-22 1 36 1-27 1-1 1 20 1-51 1 28 1 25 1-14 1-17 1 11 1 5 1 21 1-6 1-18 1 16 1 2 1-19 1 15 1 13 1-31 1 18 1 10 1 16 1 1 1-41 1 15 1-16 1 35 1-6 1 4 1-33 1 13 1 21 1-17h1l1 21 1-14 1-4 1-5 1 14 1-35 1 43 1-22 1-3 1-7 1-8 1-2 1 15 1 7 1 12 1-15 1 5 1 2 1 8 1-29 1 12 1 10 1-26 1 1 1 10 1-17 1 19 1-13 1 16 1-9 1-21 1 21 1 5 1-3 1-36 1 43 1-29 1-6 1 25 1-30 1 33 1-5 1-14 1-10 1 20 1-2 1 3 1 6 1-1 1-13 1 28 1-24 1 27 1-11 1-7 1-17 1-2 1-7 1 36 1-25 1-17 1 22 1-17 1 21 1 3 1 16 1-38 1 14 1-10 1 29 1 5 1-17 1-10 1 1 1 25 1-2 1 12 1-20 1 23 1-28 1 6 1 13 1 12 1-11 1-2 1-5h1l1 25 1-23 1-17 1 40 1-41 1 21 1-2 1 15 1-6 1 2 1-17 1-14 1 20 1 17 1 1 1-3 1-9 1 9 1-22 1-8 1-7 1 29 1-31 1 36 1-17 1-18 1 16 1 18h1l1 4 1-28 1-2 1 24 1-9 1-4 1-5 1-8 1-3 1-2 1 34 1 8 1-13 1-10 1 12 1-4 1 10 1-5 1-10 1 6h1l1-17 1-3 1 18 1-14 1 13 1 5 1-7 1-7 1 20 1-37 1 32 1 3 1-18 1-10 1 6 1-20 1 38 1-41 1 12 1-5 1 27 1 10 1 9 1-1 1-6 1-19 1-3 1 9 1-7 1 16 1-14 1 6 1 22 1-25 1 15 1 8 1-28 1 15 1-5 1 3 1 25 1-15 1-19 1 18 1-23 1 20 1-8 1 11 1-13 1 13 1 8 1-5 1-14 1 23 1-12 1 18 1 12 1-1 1-30 1 26 1-5 1-24 1 27 1-24 1 21 1-28 1 33 1-21 1 21 1-28 1 22 1-15 1 4 1 7 1-17 1 7h1l1-21 1 10 1 24 1-14 1-27 1 37 1-7 1-23 1 9 1-4 1 17 1 8 1 3 1-15 1 3 1-27 1 7 1 9 1 16 1-19 1 1 1 18 1-3" stroke="#1f33ee" stroke-width="4"/>
</g>
<line x1="2168.5" y1="831" x2="2168.5" y2="1024" stroke="#fff" stroke-width="2.2" stroke-dasharray="10 2" stroke-dashoffset="7.4"/>
<line x1="2302.6" y1="831" x2="2302.6" y2="1024" stroke="#fff" stroke-width="2.2" stroke-dasharray="10 2" stroke-dashoffset="7.4"/>
<rect x="2168.5" y="999.5" width="155" height="26" fill="rgba(0,0,0,0.67)"/>
<text x="2172.7" y="1017.3" font-size="13" fill="#f2f2f2" text-anchor="start" textLength="146.5" lengthAdjust="spacingAndGlyphs">T1=-7m,5s,774ms,784µs</text>
<rect x="2140.6" y="999.5" width="164.5" height="26" fill="rgba(0,0,0,0.67)"/>
<text x="2143.6" y="1017.3" font-size="13" fill="#f2f2f2" text-anchor="start" textLength="153.5" lengthAdjust="spacingAndGlyphs">T2=-4m,15s,709ms,292µs</text>
<rect x="2301.5" y="999.5" width="2.2" height="26" fill="#c4c4c4"/>
<rect x="2158.1" y="831" width="155" height="50.9" fill="rgba(0,0,0,0.67)"/>
<text x="2162.6" y="861.7" font-size="13" fill="#f2f2f2" text-anchor="start" textLength="22.1" lengthAdjust="spacingAndGlyphs">ΔT=</text>
<text x="2187.9" y="851.7" font-size="13" fill="#f2f2f2" text-anchor="start" textLength="120.2" lengthAdjust="spacingAndGlyphs">2m,50s,65ms,492µs</text>
<text x="2188.1" y="871.8" font-size="13" fill="#f2f2f2" text-anchor="start" textLength="88.6" lengthAdjust="spacingAndGlyphs">0.00588009 Hz</text>
</g>
<rect x="1939" y="831" width="1" height="194" fill="#969696"/>
<rect x="1939" y="1024" width="525" height="1" fill="#969696"/>
<text x="2031.4" y="1040.5" font-size="13" fill="#f2f2f2" text-anchor="middle" textLength="30.6" lengthAdjust="spacingAndGlyphs">-10m</text>
<text x="2126.1" y="1040.5" font-size="13" fill="#f2f2f2" text-anchor="middle" textLength="23.1" lengthAdjust="spacingAndGlyphs">-8m</text>
<text x="2220.8" y="1040.5" font-size="13" fill="#f2f2f2" text-anchor="middle" textLength="23.1" lengthAdjust="spacingAndGlyphs">-6m</text>
<text x="2315.4" y="1040.5" font-size="13" fill="#f2f2f2" text-anchor="middle" textLength="23.1" lengthAdjust="spacingAndGlyphs">-4m</text>
<text x="2410.1" y="1040.5" font-size="13" fill="#f2f2f2" text-anchor="middle" textLength="23.1" lengthAdjust="spacingAndGlyphs">-2m</text>
<g clip-path="url(#ya33)">
<text x="1934" y="995.3" font-size="13" fill="#f2f2f2" text-anchor="end">434.5</text>
<text x="1934" y="907.6" font-size="13" fill="#f2f2f2" text-anchor="end">434.6</text>
</g>
<text x="2202" y="821.6" font-size="12" fill="#f2f2f2" text-anchor="middle" textLength="263" lengthAdjust="spacingAndGlyphs">H1:SUS-ZM1_M1_DAMP_Y_INMON [s-trend]</text>
<text transform="translate(1881.4 928) rotate(-90)" font-size="13" fill="#f2f2f2" text-anchor="middle" textLength="40.6" lengthAdjust="spacingAndGlyphs">counts</text>
<g clip-path="url(#c04)">
<rect x="118" y="1082" width="1" height="193" fill="#fff" fill-opacity="0.060000000000000005"/>
<rect x="141" y="1082" width="1" height="193" fill="#fff" fill-opacity="0.060000000000000005"/>
<rect x="165" y="1082" width="1" height="193" fill="#fff" fill-opacity="0.060000000000000005"/>
<rect x="189" y="1082" width="1" height="193" fill="#fff" fill-opacity="0.1"/>
<rect x="212" y="1082" width="1" height="193" fill="#fff" fill-opacity="0.060000000000000005"/>
<rect x="236" y="1082" width="1" height="193" fill="#fff" fill-opacity="0.060000000000000005"/>
<rect x="260" y="1082" width="1" height="193" fill="#fff" fill-opacity="0.060000000000000005"/>
<rect x="283" y="1082" width="1" height="193" fill="#fff" fill-opacity="0.1"/>
<rect x="307" y="1082" width="1" height="193" fill="#fff" fill-opacity="0.060000000000000005"/>
<rect x="331" y="1082" width="1" height="193" fill="#fff" fill-opacity="0.060000000000000005"/>
<rect x="354" y="1082" width="1" height="193" fill="#fff" fill-opacity="0.060000000000000005"/>
<rect x="378" y="1082" width="1" height="193" fill="#fff" fill-opacity="0.1"/>
<rect x="402" y="1082" width="1" height="193" fill="#fff" fill-opacity="0.060000000000000005"/>
<rect x="425" y="1082" width="1" height="193" fill="#fff" fill-opacity="0.060000000000000005"/>
<rect x="449" y="1082" width="1" height="193" fill="#fff" fill-opacity="0.060000000000000005"/>
<rect x="473" y="1082" width="1" height="193" fill="#fff" fill-opacity="0.1"/>
<rect x="496" y="1082" width="1" height="193" fill="#fff" fill-opacity="0.060000000000000005"/>
<rect x="520" y="1082" width="1" height="193" fill="#fff" fill-opacity="0.060000000000000005"/>
<rect x="544" y="1082" width="1" height="193" fill="#fff" fill-opacity="0.060000000000000005"/>
<rect x="567" y="1082" width="1" height="193" fill="#fff" fill-opacity="0.1"/>
<rect x="591" y="1082" width="1" height="193" fill="#fff" fill-opacity="0.060000000000000005"/>
<rect x="615" y="1082" width="1" height="193" fill="#fff" fill-opacity="0.060000000000000005"/>
<rect x="98" y="1241" width="524" height="1" fill="#fff" fill-opacity="0.1"/>
<rect x="98" y="1102" width="524" height="1" fill="#fff" fill-opacity="0.1"/>
<rect x="98" y="1171" width="524" height="1" fill="#fff" fill-opacity="0.065"/>
<rect x="98" y="1269" width="524" height="1" fill="#fff" fill-opacity="0.05"/>
<rect x="98" y="1255" width="524" height="1" fill="#fff" fill-opacity="0.05"/>
<rect x="98" y="1227" width="524" height="1" fill="#fff" fill-opacity="0.05"/>
<rect x="98" y="1213" width="524" height="1" fill="#fff" fill-opacity="0.05"/>
<rect x="98" y="1199" width="524" height="1" fill="#fff" fill-opacity="0.05"/>
<rect x="98" y="1185" width="524" height="1" fill="#fff" fill-opacity="0.05"/>
<rect x="98" y="1157" width="524" height="1" fill="#fff" fill-opacity="0.05"/>
<rect x="98" y="1143" width="524" height="1" fill="#fff" fill-opacity="0.05"/>
<rect x="98" y="1129" width="524" height="1" fill="#fff" fill-opacity="0.05"/>
<rect x="98" y="1115" width="524" height="1" fill="#fff" fill-opacity="0.05"/>
<rect x="98" y="1088" width="524" height="1" fill="#fff" fill-opacity="0.05"/>
<g shape-rendering="crispEdges" fill="none" stroke-linejoin="miter">
<path transform="translate(97.5 0) scale(0.78900 1)" vector-effect="non-scaling-stroke" d="M0 1120h1l1-1h1l1 1h1l1-1h1l1 1h2l1-1h5l1 1 1-1h4l1 1 1-1h2l1 1 1-1h1l1 1 1-1h8l1 1 1-1h1l1 1 1-1 1 1 1-1h3l1 1h1l1-1 1 1 1-1h7l1 1 1-1 1 1h2l1-1h2l1 1h3l1-1 1 1 1-1h1l1 1h1l1-1h2l1 1 1-1 1 1 1-1h9l1 1 1-1h2l1 1 1-1h5l1 1 1-1h1l1 1h1l1-1 1 1h2l1-1h2l1 1 1-1h2l1 1 1-1h1l1 1 1-1h5l1 1 1-1 1 1h2l1-1h5l1 1 1-1h5l1 1 1-1h1l1 1h1l1-1 1 1h1l1-1 1 1h2l1-1h10l1 1h1l1-1 1 1 1-1h1l1 1 1-1 1 1 1-1h4l1 1h1l1-1 1 1 1-1h1l1 1h1l1-1h3l1 1 1-1h1l1 1 1-1 1 1h2l1-1h3l1 1h2l1 1 1 3 1 4 1 3 1 4 1 3 1 3 1 4 1 3 1 4 1 2h1l1 1h2l1 1h1l1 5 1 7 1 7 1 7 1 7 1 7 1 7 1 1 1 1 1 1 1 2 1 1 1 1 1 1 1 1 1 1 1 1h3l1 1 1 3 1 2 1 2 1 1 1 1h1l1 1 1 1 1 1 1 1 1 1 1 1 1 1 1 1 1 1 1 2h131l1-1 1-3 1-3 1-3 1-3 1-5 1-4 1-5 1-5 1-5 1-4 1-5 1-5 1-5 1-4 1-5 1-5 1-4 1-5 1-5 1-5 1-3 1-4 1-3 1-3 1-2 1-1h1l1-1h1l1-1 1-1 1-2 1-1 1-2 1-2 1-2 1-2 1-1 1-2h8l1-1h6l1-1 1-1 1-2 1-1 1-2 1-1h206" stroke="#8a3048" stroke-width="2" stroke-dasharray="10 2"/>
<path transform="translate(97.5 0) scale(0.78900 1)" vector-effect="non-scaling-stroke" d="M0 1118h20l1-1 1 1h192l1 2 1 3 1 4 1 3 1 4 1 3 1 4 1 3 1 3 1 4 1 2 1 1h2l1 1h2l1 5 1 7 1 7 1 7 1 8 1 7 1 6 1 1 1 1 1 2 1 1 1 1 1 1 1 1 1 1 1 1 1 1h2l1 1h1l1 3 1 2 1 2 1 1 1 1h1l1 1 1 1 1 1 1 1 1 1 1 1 1 1 1 2 1 1 1 1h131l1-1 1-3 1-3 1-3 1-3 1-4 1-5 1-5 1-5 1-4 1-5 1-5 1-5 1-4 1-5 1-5 1-5 1-4 1-5 1-5 1-4 1-4 1-4 1-3 1-3 1-2 1-1h2l1-1h1l1-2 1-1 1-2 1-2 1-2 1-2 1-1 1-2 1-2h11l1-1h4l1-2 1-2 1-1 1-2 1-1h206" stroke="#8a3048" stroke-width="2" stroke-dasharray="10 2"/>
<path transform="translate(97.5 0) scale(0.78900 1)" vector-effect="non-scaling-stroke" d="M0 1119l1-1 1 1 1-1 1 1h9l1-1 1 1h10l1-1 1 1h18l1-1h1l1 1h8l1-1h1l1 1 1-1 1 1h24l1-1 1 1h13l1-1 1 1h13l1-1 1 1h45l1-1 1 1h45l1-1 1 1h3l1 2 1 3 1 3 1 4 1 3 1 3 1 4 1 4 1 3 1 3 1 3h2l1 1h2l1 1 1 5 1 7 1 7 1 7 1 7 1 7 1 7 1 1 1 1 1 1 1 1 1 1 1 2 1 1 1 1 1 1h2l1 1h1l1 1 1 2 1 2 1 3 1 1h1l1 1h1l1 1 1 1 1 2 1 1 1 1 1 1 1 1 1 1 1 1h132l1-3 1-3 1-4 1-3 1-4 1-5 1-5 1-4 1-5 1-5 1-5 1-4 1-5 1-5 1-5 1-4 1-5 1-5 1-5 1-4 1-4 1-3 1-3 1-4 1-2h1l1-1h1l1-1h1l1-1 1-2 1-2 1-1 1-2 1-2 1-2 1-2 1-2 1 1h1l1-1h12l1-1 1-2 1-1 1-1 1-2 1-2h6l1 1h1l1-1h3l1 1 1-1h6l1 1 1-1h5l1 1h2l1-1h1l1 1 1-1h7l1 1 1-1h1l1 1 1-1h2l1 1 1-1h10l1 1h1l1-1h1l1 1h1l1-1h3l1 1 1-1h7l1 1h2l1-1h6l1 1 1-1h4l1 1 1-1h5l1 1h2l1-1h10l1 1h5l1-1h7l1 1 1-1 1 1 1-1h11l1 1h2l1-1 1 1 1-1h3l1 1h1l1-1h2l1 1h1l1-1h4l1 1 1-1h11l1 1 1-1h5l1 1 1-1h12l1 1 1-1 1 1 1-1h2" stroke="#b44462" stroke-width="4"/>
</g>
<line x1="326.5" y1="1082" x2="326.5" y2="1275" stroke="#fff" stroke-width="2.2" stroke-dasharray="10 2" stroke-dashoffset="7.4"/>
<line x1="460.6" y1="1082" x2="460.6" y2="1275" stroke="#fff" stroke-width="2.2" stroke-dasharray="10 2" stroke-dashoffset="7.4"/>
<rect x="326.5" y="1249.5" width="155" height="26" fill="rgba(0,0,0,0.67)"/>
<text x="330.7" y="1267.3" font-size="13" fill="#f2f2f2" text-anchor="start" textLength="146.5" lengthAdjust="spacingAndGlyphs">T1=-7m,5s,774ms,784µs</text>
<rect x="298.6" y="1249.5" width="164.5" height="26" fill="rgba(0,0,0,0.67)"/>
<text x="301.6" y="1267.3" font-size="13" fill="#f2f2f2" text-anchor="start" textLength="153.5" lengthAdjust="spacingAndGlyphs">T2=-4m,15s,709ms,292µs</text>
<rect x="459.5" y="1249.5" width="2.2" height="26" fill="#c4c4c4"/>
<rect x="316.1" y="1082" width="155" height="49.9" fill="rgba(0,0,0,0.67)"/>
<text x="320.6" y="1111.7" font-size="13" fill="#f2f2f2" text-anchor="start" textLength="22.1" lengthAdjust="spacingAndGlyphs">ΔT=</text>
<text x="345.9" y="1101.7" font-size="13" fill="#f2f2f2" text-anchor="start" textLength="120.2" lengthAdjust="spacingAndGlyphs">2m,50s,65ms,492µs</text>
<text x="346.1" y="1121.8" font-size="13" fill="#f2f2f2" text-anchor="start" textLength="88.6" lengthAdjust="spacingAndGlyphs">0.00588009 Hz</text>
<line x1="98" y1="1104.6" x2="622" y2="1104.6" stroke="#fff" stroke-opacity="1" stroke-width="2.2" stroke-dasharray="10 2" stroke-dashoffset="9"/>
<rect x="97.5" y="1105.9" width="77.5" height="26" fill="rgba(0,0,0,0.67)"/>
<text x="102" y="1122.6" font-size="13" fill="#f2f2f2" text-anchor="start" textLength="68.5" lengthAdjust="spacingAndGlyphs">Y1=196.298</text>
</g>
<rect x="97" y="1082" width="1" height="194" fill="#969696"/>
<rect x="97" y="1275" width="525" height="1" fill="#969696"/>
<text x="189.4" y="1291.5" font-size="13" fill="#f2f2f2" text-anchor="middle" textLength="30.6" lengthAdjust="spacingAndGlyphs">-10m</text>
<text x="284.1" y="1291.5" font-size="13" fill="#f2f2f2" text-anchor="middle" textLength="23.1" lengthAdjust="spacingAndGlyphs">-8m</text>
<text x="378.8" y="1291.5" font-size="13" fill="#f2f2f2" text-anchor="middle" textLength="23.1" lengthAdjust="spacingAndGlyphs">-6m</text>
<text x="473.4" y="1291.5" font-size="13" fill="#f2f2f2" text-anchor="middle" textLength="23.1" lengthAdjust="spacingAndGlyphs">-4m</text>
<text x="568.1" y="1291.5" font-size="13" fill="#f2f2f2" text-anchor="middle" textLength="23.1" lengthAdjust="spacingAndGlyphs">-2m</text>
<g clip-path="url(#ya04)">
<text x="92" y="1246.3" font-size="13" fill="#f2f2f2" text-anchor="end">0</text>
<text x="92" y="1176.7" font-size="13" fill="#f2f2f2" text-anchor="end">100</text>
<text x="92" y="1107.1" font-size="13" fill="#f2f2f2" text-anchor="end">200</text>
</g>
<text x="360" y="1071.8" font-size="12" fill="#f2f2f2" text-anchor="middle" textLength="225" lengthAdjust="spacingAndGlyphs">H1:SUS-FC1_M3_WIT_PMON [s-trend]</text>
<text transform="translate(39.4 1179) rotate(-90)" font-size="13" fill="#f2f2f2" text-anchor="middle" textLength="40.6" lengthAdjust="spacingAndGlyphs">counts</text>
<g clip-path="url(#c14)">
<rect x="723" y="1082" width="1" height="193" fill="#fff" fill-opacity="0.060000000000000005"/>
<rect x="748" y="1082" width="1" height="193" fill="#fff" fill-opacity="0.060000000000000005"/>
<rect x="773" y="1082" width="1" height="193" fill="#fff" fill-opacity="0.060000000000000005"/>
<rect x="798" y="1082" width="1" height="193" fill="#fff" fill-opacity="0.1"/>
<rect x="823" y="1082" width="1" height="193" fill="#fff" fill-opacity="0.060000000000000005"/>
<rect x="848" y="1082" width="1" height="193" fill="#fff" fill-opacity="0.060000000000000005"/>
<rect x="873" y="1082" width="1" height="193" fill="#fff" fill-opacity="0.060000000000000005"/>
<rect x="898" y="1082" width="1" height="193" fill="#fff" fill-opacity="0.1"/>
<rect x="923" y="1082" width="1" height="193" fill="#fff" fill-opacity="0.060000000000000005"/>
<rect x="948" y="1082" width="1" height="193" fill="#fff" fill-opacity="0.060000000000000005"/>
<rect x="973" y="1082" width="1" height="193" fill="#fff" fill-opacity="0.060000000000000005"/>
<rect x="999" y="1082" width="1" height="193" fill="#fff" fill-opacity="0.1"/>
<rect x="1024" y="1082" width="1" height="193" fill="#fff" fill-opacity="0.060000000000000005"/>
<rect x="1049" y="1082" width="1" height="193" fill="#fff" fill-opacity="0.060000000000000005"/>
<rect x="1074" y="1082" width="1" height="193" fill="#fff" fill-opacity="0.060000000000000005"/>
<rect x="1099" y="1082" width="1" height="193" fill="#fff" fill-opacity="0.1"/>
<rect x="1124" y="1082" width="1" height="193" fill="#fff" fill-opacity="0.060000000000000005"/>
<rect x="1149" y="1082" width="1" height="193" fill="#fff" fill-opacity="0.060000000000000005"/>
<rect x="1174" y="1082" width="1" height="193" fill="#fff" fill-opacity="0.060000000000000005"/>
<rect x="1199" y="1082" width="1" height="193" fill="#fff" fill-opacity="0.1"/>
<rect x="1224" y="1082" width="1" height="193" fill="#fff" fill-opacity="0.060000000000000005"/>
<rect x="1249" y="1082" width="1" height="193" fill="#fff" fill-opacity="0.060000000000000005"/>
<rect x="702" y="1248" width="555" height="1" fill="#fff" fill-opacity="0.1"/>
<rect x="702" y="1173" width="555" height="1" fill="#fff" fill-opacity="0.1"/>
<rect x="702" y="1099" width="555" height="1" fill="#fff" fill-opacity="0.1"/>
<rect x="702" y="1211" width="555" height="1" fill="#fff" fill-opacity="0.065"/>
<rect x="702" y="1136" width="555" height="1" fill="#fff" fill-opacity="0.065"/>
<g shape-rendering="crispEdges" fill="none" stroke-linejoin="miter">
<path transform="translate(701.5 0) scale(0.83559 1)" vector-effect="non-scaling-stroke" d="M0 1241l1 1h1l1-1 1 1 1-1h1l1 1h1l1-1 1 1h1l1-1h1l1 1h1l1-1h1l1 2 1-1 1-1 1 1 1-1h1l1 1 1-1 1-1 1 2 1 1 1-2 1 1 1-1h3l1-1h3l1 1h7l1-1 1 1h2l1-1 1 1 1-1h1l1 2 1 1 1-3h1l1 1 1-1h1l1 1 1-1h2l1 2h2l1-2 1 1 1-1h1l1 1h1l1-1h1l1 1h1l1-1 1 2 1-2h1l1 1h1l1-1h1l1 2 1-2h1l1 1h1l1-1 1 1 1-1 1 1 1-1h2l1 2 1-2 1 1 1-1 1 1h1l1-1 1 2 1-2h1l1 1 1-1h2l1 1h1l1-1h1l1 1 1-1h3l1 1h2l1-1h6l1 1 1-1h4l1-1 1 1h5l1-1 1 1 1-1 1 1 1 2 1-3 1 1h4l1-1h3l1 2 1-2 1 1h2l1 1 1-1h3l1-1h1l1 2 1-1h2l1 1 1-2 1 1 1-1 1 1 1-1h2l1 1 1 3 1-4h1l1 1 1-1h1l1 1 1-1h1l1 1 1-1 1 2 1-1 1-1 1 1 1-1 1 1h1l1-1h1l1 1 1-1 1 1 1 1 1-2 1 2 1-2 1 1 1-1h1l1-1 1-5 1-3 1-5 1-3 1-3 1-6 1-2 1-6 1-4 1-3h1l1-1 1 2 1-1 1-2 1 1 1-7 1-11 1-10 1-8 1-12 1-6 1-2h1l1-1 1-1 1-2 1-1 1-2h1l1-2 1-1h2l1-1 1 1 1-2 1-2h1l1-4 1-2 1-3 1-1 1-3 1-1h1l1-4 1-2 1-2 1-2 1 1h1l1-1 1 2h1l1-2 1 1 1-1 1 1h1l1-1 1 3 1-3h3l1 1 1-1 1 1h1l1 1h1l1-2 1 3 1-2 1-1 1 3 1-3h1l1 1h2l1-1h1l1 1h1l1 1h1l1-1h2l1 1 1-1 1 1h1l1-1 1-1 1 2 1-1h5l1 2 1-1h3l1-1h3l1 1 1-1 1 1h3l1-1 1 2 1-2 1 1h2l1-1 1 1h5l1 1 1-1h1l1-1 1 1h2l1 1 1-1h3l1 2 1-2h1l1 1 1-1 1 2 1-2 1 1 1 1h1l1-1h6l1 1 1-1h2l1 1h1l1-1 1 1h1l1-1 1 2 1-2 1 1 1-1h1l1 1h2l1 1 1-1h1l1-1 1 1 1 1 1-1 1 1 1 6 1 5 1 5 1 6 1 6 1 6 1 4 1 7 1 6 1 7 1 7 1 5 1 4 1 5 1 6 1 3 1 5 1 6 1 4 1 3 1 2 1 3 1 2 1 2h3l1 1 1 3 1 1 1 3 1 3 1 3 1 2 1 5 1 2 1 2 1-1h1l1 2 1-2h2l1 2 1-1h4l1 1 1-1 1 1 1 1 1-1 1 2 1 2 1 3 1 3 1-1 1-1 1 1 1 1 1-1h1l1-1 1 1h2l1 2 1-2h5l1-1 1 2 1-1h2l1 1 1-1h2l1 2 1-2 1 1 1-1h1l1 1 1-1h1l1 1 1-1 1 1 1-1h9l1-1 1 3 1-1h1l1-1h3l1 1h1l1-1 1 1 1-2 1 1h1l1 1 1-1 1 1 1-1 1-1 1 1h1l1-1h1l1 2 1-1 1 1h1l1-1h2l1 1 1-1 1 2 1-1 1-1 1-1 1 2 1-1 1 1 1-1 1 1 1-2 1 1h4l1 1h1l1-1h1l1-1 1 1h2l1-1 1 1 1-1 1 1 1-1 1 1 1 1 1-2 1 1 1 1 1-2 1 2 1-1h1l1-1 1 1h2l1 1 1 1 1-1 1-1h1l1 1 1-1 1 1h2l1-1 1 2 1-1 1-1h2l1 1 1-1h1l1-1 1 1h1l1 1h1l1-1h2l1-1 1 3 1-2 1-1 1 2h1l1-2 1 1 1-1 1 3 1-2 1-1 1 1h2l1-1h1l1 1h1l1 1 1-2 1 1h1l1-1 1 1 1 1 1-2h1l1 1 1-1h2l1 1 1-1 1 2 1-1 1-1h5l1 1h2l1-1h4l1-1 1 1h2l1 1 1-1 1 1 1-2" stroke="#9a3608" stroke-width="2" stroke-dasharray="10 2"/>
<path transform="translate(701.5 0) scale(0.83559 1)" vector-effect="non-scaling-stroke" d="M0 1237h3l1 1 1-1 1-1 1 1 1 1h1l1-1h1l1 1h1l1-1h1l1 1h1l1-3 1 2h1l1 1 1-1h7l1 1 1-1 1 1h1l1-2 1 2h1l1-1 1 1 1-1 1 1h1l1-1 1 1 1-2 1 1 1 1 1-1 1 1 1-1 1 1 1-1 1 1 1-1h1l1 1h1l1-1h3l1 1 1-1 1-1 1 1h6l1 1 1-2 1 1h6l1-2 1 2h8l1-1 1 1h5l1-1h1l1 1h1l1-1h1l1 1h15l1-1 1 1h1l1-2h1l1 1 1 1h2l1-1h6l1-1h2l1 1h2l1 1 1-1h2l1 1h1l1-1 1 1h2l1-1h1l1 1 1-1 1 1h1l1-2 1 1h1l1-1 1 2h2l1-1 1-2 1 2h2l1 1h1l1-1h4l1 1 1-1 1 1 1-1h2l1 1 1-1 1 1h1l1-1h4l1-2 1 3 1-1 1-1 1 2 1-1h3l1-1 1 1h1l1-1 1 1 1-1h2l1-1 1 2h1l1-1h1l1 1h1l1-2 1-5 1-3 1-5 1-3 1-6 1-2 1-5 1-3 1-6 1-1h1l1-1 1-2 1 2h1l1-1 1-6 1-11 1-10 1-10 1-11 1-6 1-2h1l1-2h1l1-2 1-1 1-1 1-1 1-1 1-1 1-2 1 1h1l1-1 1-2 1-1 1-2 1-3 1-1 1-2 1-2 1-2 1-1 1-3 1-2 1-3 1-1 1-1 1-1 1 1 1-1 1 1 1-1 1 1h1l1-1h1l1 1h2l1-1h1l1 1h2l1-1 1 1h3l1-1 1 1 1-1 1 1 1 1h1l1-1 1 1 1-2 1 2 1-1 1 1 1-2 1 1h2l1-1 1 1h3l1 1h1l1-3 1 3h3l1-1h2l1 1 1-1 1 1h12l1-1 1 1h3l1 1 1-2 1 2 1-1h1l1-2 1 2 1 1 1-1 1 1 1-3 1 3h1l1-1h1l1 1h1l1-1h1l1-1 1 1 1 1h5l1-2 1 1 1 1h2l1 1 1-2 1 1 1 1 1-1 1 1 1-2 1 1h2l1 1 1-1h1l1 1 1-1h1l1 1h1l1-1 1 1h1l1-1 1 1h1l1-1 1 2 1-1 1 1 1-1 1-1 1 2h1l1 4 1 8 1 5 1 6 1 5 1 5 1 7 1 5 1 6 1 7 1 6 1 6 1 5 1 5 1 4 1 5 1 5 1 5 1 5 1 3 1 2 1 1 1 4h1l1 2 1-1 1 1 1 1 1 1 1 3 1 3 1 2 1 3 1 2 1 2 1 2 1 5h1l1-1h1l1 1 1-1 1 1 1-1 1 1h1l1 1 1-1 1 1 1-1h2l1 1h1l1 2 1 2 1 3 1 3h1l1-1 1-1 1 1 1 1h2l1-1 1 1h3l1-1 1 1h1l1-2 1 1h2l1 1h1l1-1 1 1 1-1 1 1h3l1-1h2l1 1h1l1-2 1 1h1l1 1 1-1h2l1 1 1-2 1 2 1-1 1 1h2l1-1h1l1-2 1 2 1 1 1-1 1 1 1-1 1-1 1 1 1 1h5l1-1 1 1h3l1-1 1 1 1-1h1l1 1 1-2 1 2h2l1-1 1 1h1l1-1h1l1 1h1l1-2 1 2 1-2 1 2h2l1-1h1l1 1h2l1-1 1 1 1-1h1l1 1h1l1-1 1 1h1l1-1 1-1 1 1h1l1 1h1l1-1 1 1 1-1h1l1 1h3l1-2h1l1 2h2l1-2h1l1 2h6l1-1 1-1 1 2 1-2 1 2h1l1-1 1-1 1-1 1 3 1-1 1 1h1l1-1h9l1-2 1 3 1-1 1-1 1 2 1-3 1 3 1-2 1 1 1-1 1 1h3l1-1 1 1h1l1-1 1 1 1-1 1 1 1-1 1 1 1-1h1l1 1 1-1h1l1 1h2l1-2h1l1 2h1l1-2 1 1 1 1h1l1-2 1 2 1-1 1 1 1-1h1l1 1h2l1-1h2" stroke="#9a3608" stroke-width="2" stroke-dasharray="10 2"/>
<path transform="translate(701.5 0) scale(0.83559 1)" vector-effect="non-scaling-stroke" d="M0 1240l1-1h1l1 1h3l1-1h1l1 1 1-1h1l1-1 1 2 1-1h1l1 1 1 1 1-1 1-1 1-1h1l1 1 1-1 1 1h1l1 1 1 1 1-1h1l1-1 1 1 1-1h3l1 1 1-1 1 1h1l1-1 1-1 1 1 1 1 1-1 1-1 1 1h2l1-1 1 1h5l1-1 1 1 1-1 1 1h1l1-1 1 1h1l1 1h1l1 1 1-1 1-1h5l1-1h1l1 1 1-1 1 2 1-1h2l1 1h2l1-1 1 1 1-1 1-1h2l1 1h1l1-1h1l1-1h1l1 1 1 1h4l1 1h1l1-1 1 1h1l1-2 1-1 1 3 1-1 1 2 1-2 1-1 1 1 1-2h1l1 2 1-1 1-2 1 2h5l1-1 1 1 1 1h1l1 1h1l1-1 1 1 1-2 1-1 1 1 1 1 1-1h1l1-1h2l1 1h1l1 1 1-1 1-1 1 2h1l1-1h1l1 1h4l1-1h2l1-1 1 1h6l1 1h1l1-1h6l1-1 1 2 1-1 1 1h1l1 2 1-3h1l1-1h1l1 1 1 1 1-1 1-2 1 1 1 1h1l1-2 1 1h1l1 1 1 1h1l1-1 1-1 1 1 1-1h3l1 1h4l1-1 1 1 1-2 1-4 1-2 1-5 1-5 1-5 1-4 1-4 1-4 1-4 1-3h3l1-1h2l1-6 1-10 1-10 1-12 1-10 1-7 1-1h1l1-2 1-1 1-1 1-2h2l1-2 1-1 1-1h2l1-1 1-1 1-2 1-3 1-2 1-1 1-3 1-2h1l1-3 1-4 1-1 1-2 1-2 1-1h1l1 1 1-1 1 1 1-1 1 1h2l1-1 1-2 1 3 1-1h2l1 1 1 1 1-1 1-1 1 1 1-1h3l1 2h1l1-2 1-1 1 2h2l1 2 1-1 1-1h2l1 1 1-1 1 1 1-1h3l1 1h2l1-1h2l1 1h5l1-1h1l1-1 1 1h1l1 1 1 2 1-2 1 1 1-1 1-1h1l1 1 1-1 1 1 1-1h1l1 1 1 1 1-1h1l1-1h1l1-1 1 2h2l1 1 1-1 1-1 1 1 1 1 1-1 1 1 1-1 1 1h1l1-1h1l1-1 1 1h1l1 2h1l1-1 1 1 1-1h1l1 1h1l1-1h1l1 1 1-1 1-1 1 1h1l1 1 1-1h1l1-1 1 1 1 1 1 1 1-1h2l1-1 1 1 1 2 1-1 1-1 1-1 1-1 1 1 1 1h3l1 1 1 1 1-1 1 1 1 5 1 5 1 4 1 5 1 6 1 7 1 5 1 7 1 6 1 6 1 7 1 5 1 5 1 5 1 4 1 6 1 5 1 5 1 4 1 4 1 2 1 2 1 3 1 1 1 1 1 1 1-1h1l1 1 1 3 1 3 1 2 1 4 1 2 1 3 1 3 1 2 1 1 1-1 1 2 1-1 1-1 1 1h1l1 1 1-2 1 1 1 1 1 1 1-1h3l1 1 1 1 1 3 1 2 1 2h3l1-1 1 1h8l1 2 1-1h1l1-1 1 1 1-2 1 1 1 1 1-1h1l1 2 1-2 1-1 1 1h2l1 1h1l1-1h1l1-1h1l1 1h1l1 1h3l1-1h1l1 1h3l1-1h1l1 1 1 1 1-1 1-1h1l1-1h1l1 2 1-2 1 1 1 1 1-1h2l1 1 1-1h2l1 1h2l1 1 1-1 1-1 1 1 1-1h5l1 1h2l1-1h1l1-1 1 1h2l1 1 1-1h2l1-1 1 1h1l1-1 1 2 1-2 1 1 1 1h1l1 1 1-1h1l1 1 1-2h1l1 2h1l1-1h2l1 1 1-3 1 1 1 2h2l1-1 1-1h2l1-1h1l1 2h1l1-1h1l1 1 1-1h1l1 1 1-1 1-1h1l1 1h6l1 1 1-1 1-1h2l1-1 1 2h1l1-2 1 3 1 1 1-1 1-2h2l1 1h1l1-1h2l1-1h1l1 1 1-1 1 2 1 1 1-1 1-1 1 2 1-1 1-1 1 1h2l1 1 1-1h2l1-1h2l1 1h1l1-2 1 1h1l1-2h1l1 1h1l1 2h1l1-1 1-1h1l1 1 1 1h3l1-2 1 1 1 1" stroke="#dc4c0a" stroke-width="4"/>
</g>
<line x1="944" y1="1082" x2="944" y2="1275" stroke="#fff" stroke-width="2.2" stroke-dasharray="10 2" stroke-dashoffset="7.4"/>
<line x1="1086.1" y1="1082" x2="1086.1" y2="1275" stroke="#fff" stroke-width="2.2" stroke-dasharray="10 2" stroke-dashoffset="7.4"/>
<rect x="944" y="1249.5" width="155" height="26" fill="rgba(0,0,0,0.67)"/>
<text x="948.2" y="1267.3" font-size="13" fill="#f2f2f2" text-anchor="start" textLength="146.5" lengthAdjust="spacingAndGlyphs">T1=-7m,5s,774ms,784µs</text>
<rect x="924.1" y="1249.5" width="164.5" height="26" fill="rgba(0,0,0,0.67)"/>
<text x="927.1" y="1267.3" font-size="13" fill="#f2f2f2" text-anchor="start" textLength="153.5" lengthAdjust="spacingAndGlyphs">T2=-4m,15s,709ms,292µs</text>
<rect x="1085" y="1249.5" width="2.2" height="26" fill="#c4c4c4"/>
<rect x="937.5" y="1082" width="155" height="49.9" fill="rgba(0,0,0,0.67)"/>
<text x="942" y="1111.7" font-size="13" fill="#f2f2f2" text-anchor="start" textLength="22.1" lengthAdjust="spacingAndGlyphs">ΔT=</text>
<text x="967.3" y="1101.7" font-size="13" fill="#f2f2f2" text-anchor="start" textLength="120.2" lengthAdjust="spacingAndGlyphs">2m,50s,65ms,492µs</text>
<text x="967.5" y="1121.8" font-size="13" fill="#f2f2f2" text-anchor="start" textLength="88.6" lengthAdjust="spacingAndGlyphs">0.00588009 Hz</text>
</g>
<rect x="701" y="1082" width="1" height="194" fill="#969696"/>
<rect x="701" y="1275" width="556" height="1" fill="#969696"/>
<text x="798.8" y="1291.5" font-size="13" fill="#f2f2f2" text-anchor="middle" textLength="30.6" lengthAdjust="spacingAndGlyphs">-10m</text>
<text x="899.1" y="1291.5" font-size="13" fill="#f2f2f2" text-anchor="middle" textLength="23.1" lengthAdjust="spacingAndGlyphs">-8m</text>
<text x="999.4" y="1291.5" font-size="13" fill="#f2f2f2" text-anchor="middle" textLength="23.1" lengthAdjust="spacingAndGlyphs">-6m</text>
<text x="1099.6" y="1291.5" font-size="13" fill="#f2f2f2" text-anchor="middle" textLength="23.1" lengthAdjust="spacingAndGlyphs">-4m</text>
<text x="1199.9" y="1291.5" font-size="13" fill="#f2f2f2" text-anchor="middle" textLength="23.1" lengthAdjust="spacingAndGlyphs">-2m</text>
<g clip-path="url(#ya14)">
<text x="696" y="1253.6" font-size="13" fill="#f2f2f2" text-anchor="end">-206</text>
<text x="696" y="1216.3" font-size="13" fill="#f2f2f2" text-anchor="end">-205</text>
<text x="696" y="1179" font-size="13" fill="#f2f2f2" text-anchor="end">-204</text>
<text x="696" y="1141.7" font-size="13" fill="#f2f2f2" text-anchor="end">-203</text>
<text x="696" y="1104.4" font-size="13" fill="#f2f2f2" text-anchor="end">-202</text>
</g>
<text x="979.5" y="1071.8" font-size="12" fill="#f2f2f2" text-anchor="middle" textLength="225" lengthAdjust="spacingAndGlyphs">H1:SUS-FC1_M3_WIT_YMON [s-trend]</text>
<text transform="translate(643.4 1179) rotate(-90)" font-size="13" fill="#f2f2f2" text-anchor="middle" textLength="40.6" lengthAdjust="spacingAndGlyphs">counts</text>
<text x="1244.5" y="1332.6" font-size="16" fill="#f2f2f2" text-anchor="middle" textLength="403" lengthAdjust="spacingAndGlyphs">t0 = Thu Apr 02 2026 16:01:42 UTC [1459180920.5000]</text>
<rect x="7.5" y="1353.5" width="99" height="24" rx="3" ry="3" fill="url(#btn)" stroke="#9b9b9b"/>
<text x="32.5" y="1370.2" font-size="13" fill="#111" text-anchor="start" textLength="64.5" lengthAdjust="spacingAndGlyphs">start online</text>
<path d="M17.5 1359.5 l8 5 l-8 5 z" fill="#e9ebe8" stroke="#a9aaa8" stroke-width="1"/>
<rect x="109.5" y="1353.5" width="99" height="24" rx="3" ry="3" fill="url(#btn)" stroke="#9b9b9b"/>
<text x="134.5" y="1370.2" font-size="13" fill="#b8b8b8" text-anchor="start" textLength="63" lengthAdjust="spacingAndGlyphs">stop online</text>
<rect x="122.5" y="1360.5" width="7" height="7" fill="#f3f3f3" stroke="#c6c6c6" stroke-width="1"/>
<rect x="211.5" y="1353.5" width="99" height="24" rx="3" ry="3" fill="url(#btn)" stroke="#9b9b9b"/>
<text x="261" y="1370.2" font-size="13" fill="#111" text-anchor="middle" textLength="28.5" lengthAdjust="spacingAndGlyphs">reset</text>
<rect x="313.5" y="1353.5" width="99" height="24" rx="3" ry="3" fill="url(#btn)" stroke="#9b9b9b"/>
<text x="363" y="1370.2" font-size="13" fill="#111" text-anchor="middle" textLength="75" lengthAdjust="spacingAndGlyphs">add channels</text>
<rect x="2372.5" y="1353.5" width="79" height="24" rx="3" ry="3" fill="url(#btn)" stroke="#9b9b9b"/>
<text x="2412" y="1370.2" font-size="13" fill="#111" text-anchor="middle" textLength="52" lengthAdjust="spacingAndGlyphs">snapshot</text>
<path d="M2462 1370 L2468 1362.3 L2474 1370 Z" fill="#3a3a3a"/>
<text x="20" y="1399.6" font-size="13" fill="#111" text-anchor="start" textLength="235" lengthAdjust="spacingAndGlyphs">nds://h1daqnds1:8088  [442494 channels]</text>
<text x="2304" y="1399.4" font-size="13" fill="#111" textLength="155" lengthAdjust="spacingAndGlyphs"><tspan fill="#0000ff">ndscope</tspan> <tspan fill="#0000ff">0.20.8</tspan> (<tspan fill="#0000ff">report bug</tspan>)</text>
<rect x="2304" y="1402" width="47.19999999999982" height="1" fill="#0000ff"/>
<rect x="2354" y="1402" width="34" height="1" fill="#0000ff"/>
<rect x="2395.1" y="1402" width="59.90000000000009" height="1" fill="#0000ff"/>
<rect x="2480" y="1398" width="1" height="1" fill="#b4b4b4"/>
<rect x="2477" y="1401" width="1" height="1" fill="#b4b4b4"/>
<rect x="2480" y="1401" width="1" height="1" fill="#b4b4b4"/>
<rect x="2474" y="1404" width="1" height="1" fill="#b4b4b4"/>
<rect x="2477" y="1404" width="1" height="1" fill="#b4b4b4"/>
<rect x="2480" y="1404" width="1" height="1" fill="#b4b4b4"/>
<rect x="2471" y="1407" width="1" height="1" fill="#b4b4b4"/>
<rect x="2474" y="1407" width="1" height="1" fill="#b4b4b4"/>
<rect x="2477" y="1407" width="1" height="1" fill="#b4b4b4"/>
<rect x="2480" y="1407" width="1" height="1" fill="#b4b4b4"/>
</svg>
</body></html>
